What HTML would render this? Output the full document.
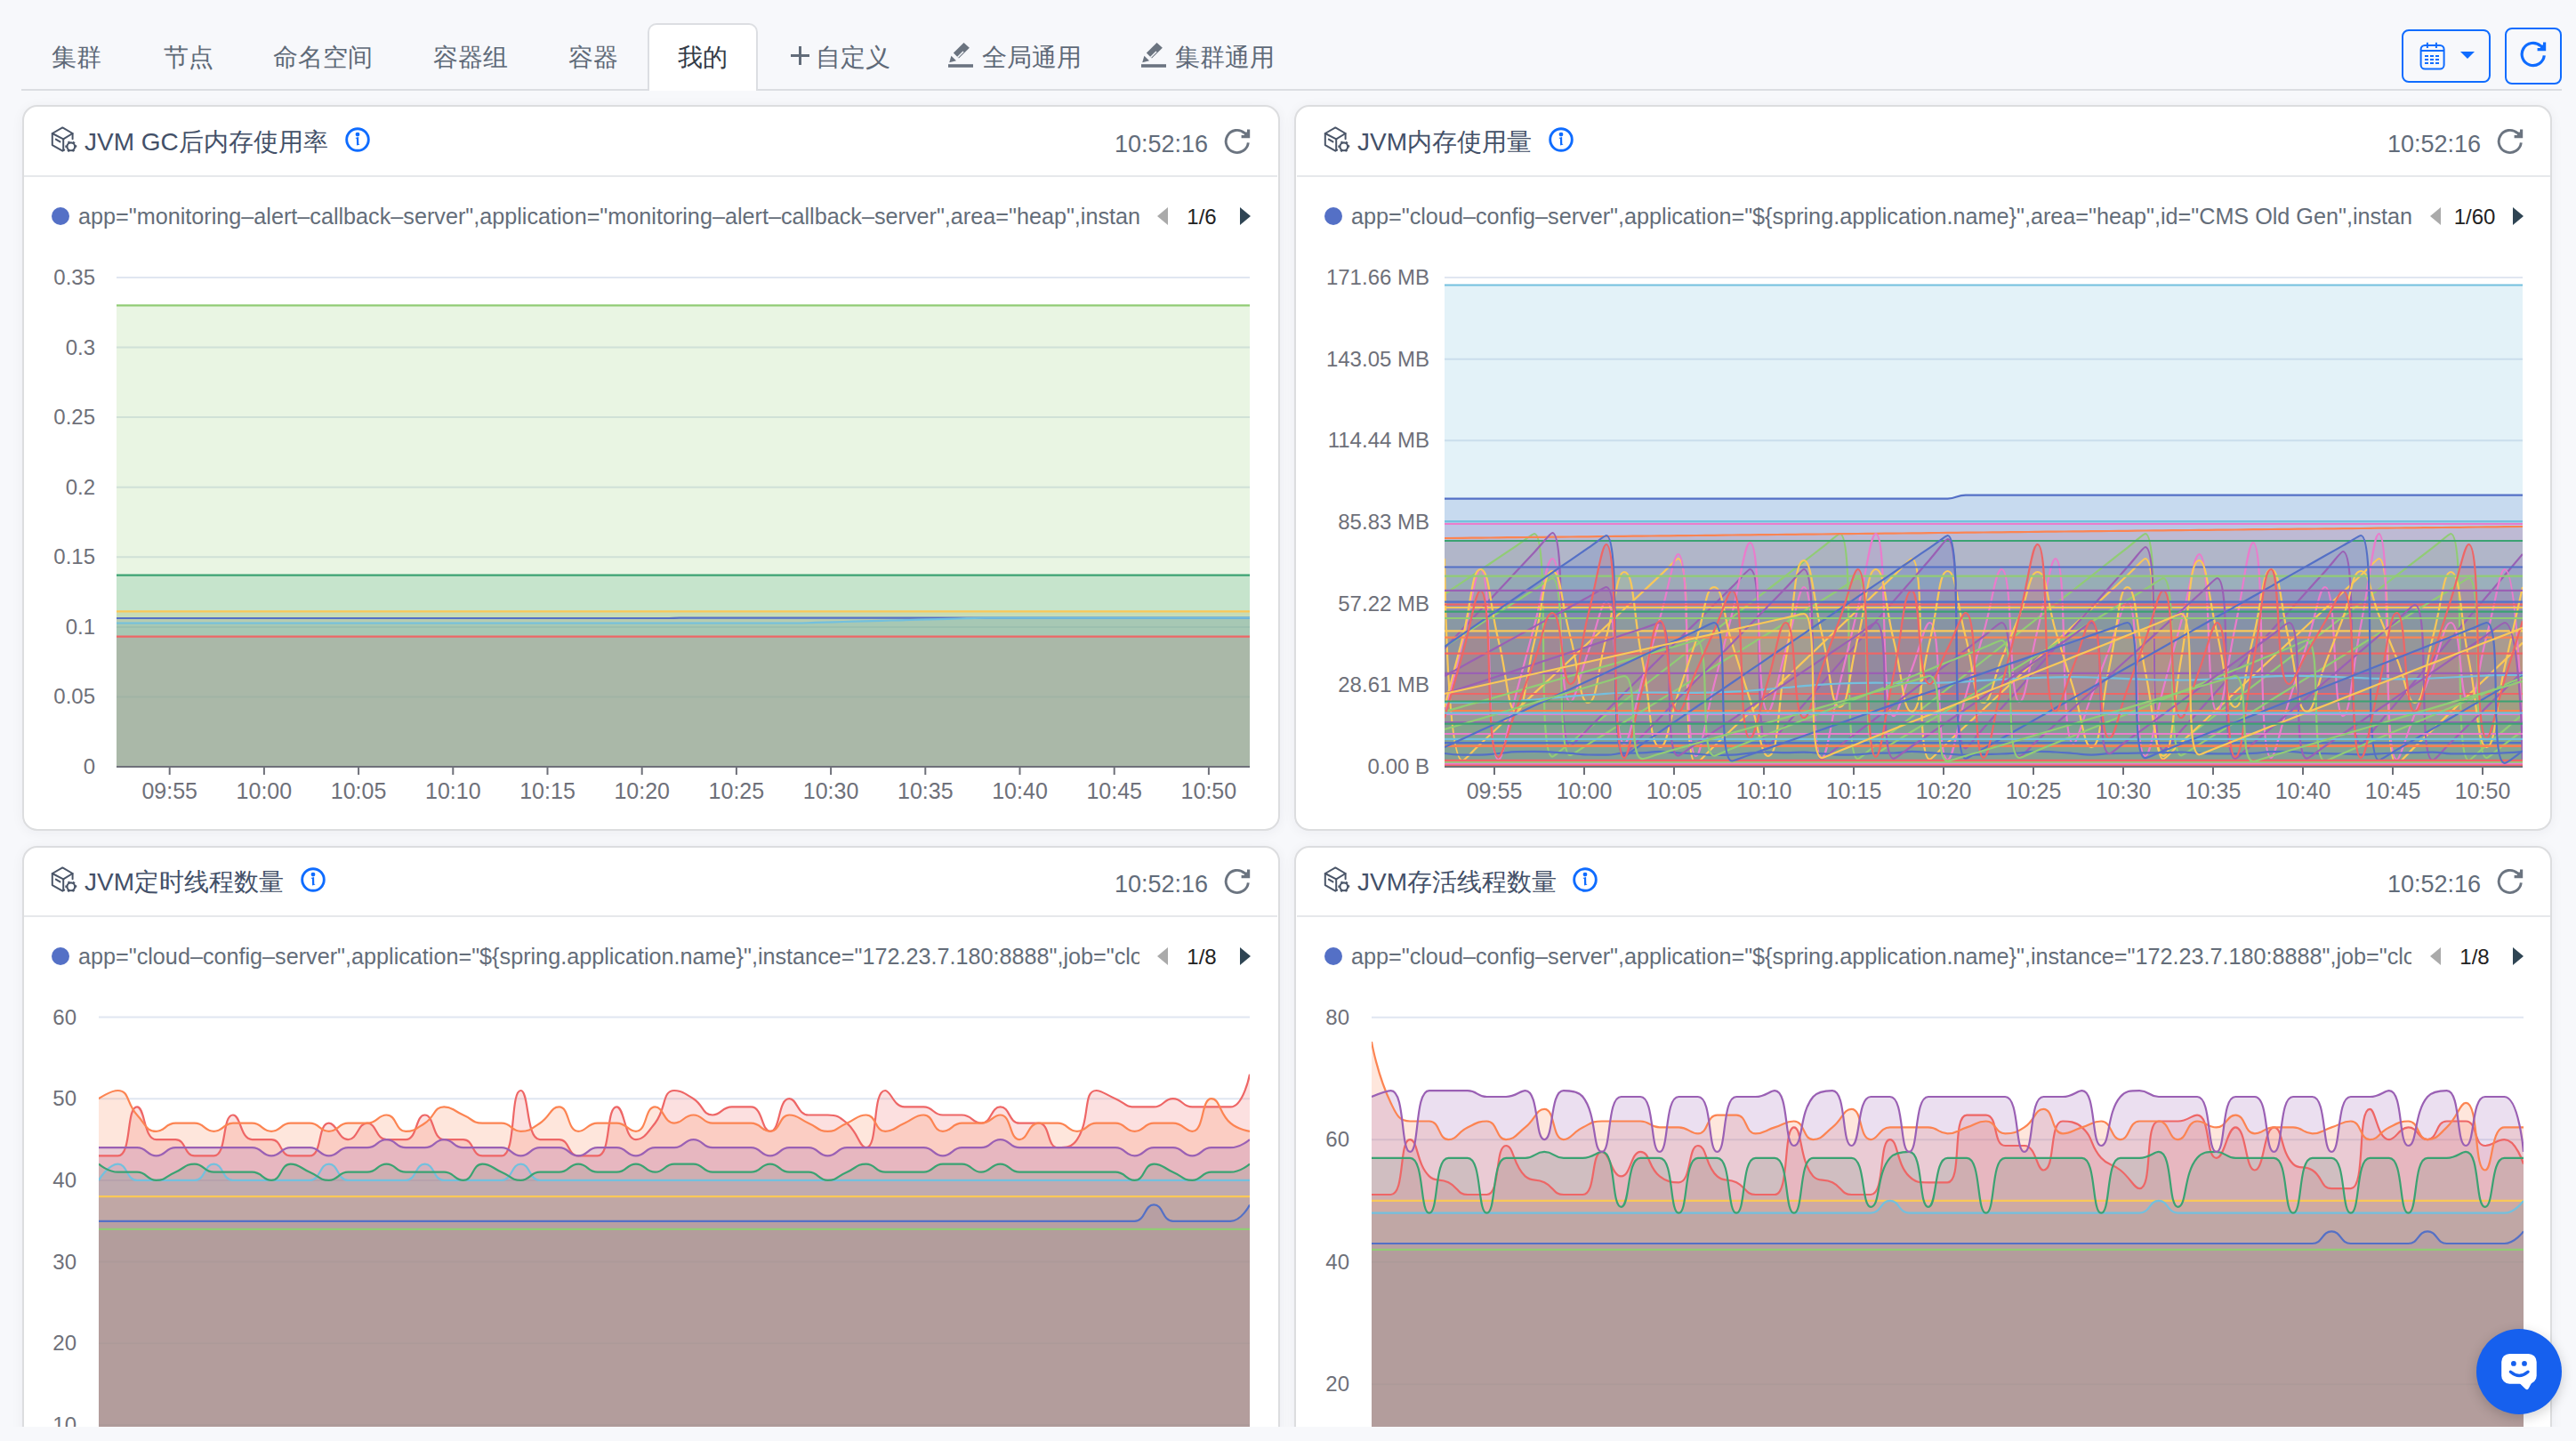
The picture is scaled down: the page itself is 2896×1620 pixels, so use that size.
<!DOCTYPE html><html><head><meta charset="utf-8"><style>
*{margin:0;padding:0;box-sizing:border-box}
html,body{width:2896px;height:1620px;overflow:hidden;background:#f7f8fb;font-family:"Liberation Sans", sans-serif}
.abs,.card,.hline,.ic,.title,.time,.dot,.leg,.page,.yl,.xl,.tab,.btn{position:absolute}
.tab{top:41px;font-size:28px;color:#5f6a78;white-space:nowrap;line-height:48px}
.card{background:#fff;border:2px solid #dcdddf;border-radius:17px;box-shadow:0 2px 14px rgba(30,40,60,0.05)}
.hline{height:2px;background:#e6e8eb}
.title{font-size:28px;color:#435068;white-space:nowrap;line-height:40px}
.time{font-size:27px;color:#626c7a;line-height:40px;white-space:nowrap}
.dot{width:20px;height:20px;border-radius:50%;background:#5470c6}
.leg{font-size:25.2px;color:#646d79;white-space:nowrap;overflow:hidden;line-height:30px}
.page{font-size:24px;color:#222;line-height:30px;width:60px;text-align:center}
.yl{font-size:24px;color:#6e7079;line-height:28px;white-space:nowrap;text-align:right}
.xl{font-size:25px;color:#6e7079;line-height:28px;width:120px;text-align:center}
svg.charts{position:absolute;left:0;top:0}
</style></head><body>

<div class="abs" style="left:24px;top:100px;width:2856px;height:2px;background:#dcdee2"></div>
<div class="abs" style="left:728px;top:26px;width:124px;height:76px;background:#fff;border:2px solid #dcdee2;border-bottom:none;border-radius:10px 10px 0 0"></div>
<div class="tab" style="left:58px">集群</div>
<div class="tab" style="left:184px">节点</div>
<div class="tab" style="left:307px">命名空间</div>
<div class="tab" style="left:487px">容器组</div>
<div class="tab" style="left:639px">容器</div>
<div class="tab" style="left:762px;color:#333b47">我的</div>
<svg class="ic" style="left:887px;top:50px" width="26" height="26"><path d="M12.5 2 V23 M2 12.5 H23" stroke="#626c7a" stroke-width="3"/></svg>
<div class="tab" style="left:917px">自定义</div>
<svg class="ic" style="left:1066px;top:46px" width="32" height="32"><path d="M15.9 13.5 L27.5 2 L33.9 7.75 L21.9 19.5 Z" fill="#6b7480" transform="translate(-10 0)"/><path d="M11 16 L17.5 9.5" stroke="#f5f7fa" stroke-width="1.6" transform="translate(-0.5 2.5)"/><path d="M3.4 16.8 L9 22.3 L1.25 24.3 Z" fill="#6b7480"/><rect x="-4" y="26.2" width="28" height="3.6" fill="#6b7480" transform="translate(4 0)"/></svg>
<div class="tab" style="left:1104px">全局通用</div>
<svg class="ic" style="left:1283px;top:46px" width="32" height="32"><path d="M15.9 13.5 L27.5 2 L33.9 7.75 L21.9 19.5 Z" fill="#6b7480" transform="translate(-10 0)"/><path d="M11 16 L17.5 9.5" stroke="#f5f7fa" stroke-width="1.6" transform="translate(-0.5 2.5)"/><path d="M3.4 16.8 L9 22.3 L1.25 24.3 Z" fill="#6b7480"/><rect x="-4" y="26.2" width="28" height="3.6" fill="#6b7480" transform="translate(4 0)"/></svg>
<div class="tab" style="left:1321px">集群通用</div>
<div class="abs" style="left:2700px;top:33px;width:100px;height:60px;border:2px solid #0f6cff;border-radius:8px"></div>
<svg class="ic" style="left:2718px;top:46px" width="34" height="34"><rect x="3.6" y="5" width="26" height="26.6" rx="4.5" fill="none" stroke="#0f6cff" stroke-width="2"/><line x1="3.6" y1="11" x2="29.6" y2="11" stroke="#0f6cff" stroke-width="2"/><line x1="10.9" y1="1.8" x2="10.9" y2="8" stroke="#0f6cff" stroke-width="2"/><line x1="20.9" y1="1.8" x2="20.9" y2="8" stroke="#0f6cff" stroke-width="2"/><rect x="8.0" y="16.0" width="4" height="2" fill="#0f6cff"/><rect x="8.0" y="20.0" width="4" height="2" fill="#0f6cff"/><rect x="8.0" y="24.0" width="4" height="2" fill="#0f6cff"/><rect x="14.0" y="16.0" width="4" height="2" fill="#0f6cff"/><rect x="14.0" y="20.0" width="4" height="2" fill="#0f6cff"/><rect x="14.0" y="24.0" width="4" height="2" fill="#0f6cff"/><rect x="20.0" y="16.0" width="4" height="2" fill="#0f6cff"/><rect x="20.0" y="20.0" width="4" height="2" fill="#0f6cff"/><rect x="20.0" y="24.0" width="4" height="2" fill="#0f6cff"/></svg>
<svg class="ic" style="left:2765px;top:57px" width="18" height="10"><path d="M1 1 H17 L9 9 Z" fill="#0f6cff"/></svg>
<div class="abs" style="left:2816px;top:31px;width:64px;height:64px;border:2px solid #0f6cff;border-radius:8px"></div>
<div class="ic" style="left:2833px;top:46px"><svg width="30" height="30" viewBox="0 0 30 30"><path d="M27.3 16.4 A 12.6 12.6 0 1 1 23.2 5.6" fill="none" stroke="#0f6cff" stroke-width="3.2"/><path d="M19.6 9.6 H27.6 V1.6" fill="none" stroke="#0f6cff" stroke-width="3.2"/><path d="M21.5 4.5 L27.6 4.5 L27.6 9.6 L23.8 9.6 Z" fill="#0f6cff"/></svg></div>
<div class="abs" style="left:0;top:0;width:2896px;height:1604px;overflow:hidden">
<div class="card" style="left:25px;top:118px;width:1414px;height:816px"></div>
<div class="card" style="left:1455px;top:118px;width:1414px;height:816px"></div>
<div class="card" style="left:25px;top:951px;width:1414px;height:816px"></div>
<div class="card" style="left:1455px;top:951px;width:1414px;height:816px"></div>
<div class="hline" style="left:27px;top:197px;width:1409px"></div>
<div class="ic" style="left:57px;top:142px"><svg class="cube" width="30" height="30" viewBox="0 0 30 30"><g fill="none" stroke="#4a5568" stroke-width="2" stroke-linejoin="round" stroke-linecap="round"><path d="M24.6 14.2 V8 L13.3 1.4 L1.8 8 V21.1 L13.3 27.7 L15.2 26.6"/><path d="M1.8 8 L14.2 14.3 L24.6 8"/><path d="M14.2 14.3 V26.5"/><path d="M5.8 14.6 L10.5 17.4"/></g><circle cx="22.8" cy="22.8" r="4.4" fill="none" stroke="#4a5568" stroke-width="2.1"/><circle cx="22.8" cy="22.8" r="5.7" fill="none" stroke="#4a5568" stroke-width="1.6" stroke-dasharray="2.4 3.57" transform="rotate(-15 22.8 22.8)"/></svg></div>
<div class="title" style="left:95px;top:140px">JVM GC后内存使用率</div>
<div class="ic" style="left:387px;top:142px"><svg width="30" height="30" viewBox="0 0 30 30"><circle cx="15" cy="15" r="12.3" fill="none" stroke="#0f6cff" stroke-width="2.9"/><circle cx="15" cy="9.1" r="2.4" fill="#0f6cff"/><path d="M12.4 12.9 L16.1 12.1 L16.3 19.7 L17.6 20.6 L14.1 21.6 L13.9 13.9 Z" fill="#0f6cff"/></svg></div>
<div class="time" style="right:1538px;top:142px">10:52:16</div>
<div class="ic" style="left:1376px;top:144px"><svg width="30" height="30" viewBox="0 0 30 30"><path d="M27.3 16.4 A 12.6 12.6 0 1 1 23.2 5.6" fill="none" stroke="#6b7480" stroke-width="2.9"/><path d="M19.6 9.6 H27.6 V1.6" fill="none" stroke="#6b7480" stroke-width="3.2"/><path d="M21.5 4.5 L27.6 4.5 L27.6 9.6 L23.8 9.6 Z" fill="#6b7480"/></svg></div>
<div class="hline" style="left:1458px;top:197px;width:1409px"></div>
<div class="ic" style="left:1488px;top:142px"><svg class="cube" width="30" height="30" viewBox="0 0 30 30"><g fill="none" stroke="#4a5568" stroke-width="2" stroke-linejoin="round" stroke-linecap="round"><path d="M24.6 14.2 V8 L13.3 1.4 L1.8 8 V21.1 L13.3 27.7 L15.2 26.6"/><path d="M1.8 8 L14.2 14.3 L24.6 8"/><path d="M14.2 14.3 V26.5"/><path d="M5.8 14.6 L10.5 17.4"/></g><circle cx="22.8" cy="22.8" r="4.4" fill="none" stroke="#4a5568" stroke-width="2.1"/><circle cx="22.8" cy="22.8" r="5.7" fill="none" stroke="#4a5568" stroke-width="1.6" stroke-dasharray="2.4 3.57" transform="rotate(-15 22.8 22.8)"/></svg></div>
<div class="title" style="left:1526px;top:140px">JVM内存使用量</div>
<div class="ic" style="left:1740px;top:142px"><svg width="30" height="30" viewBox="0 0 30 30"><circle cx="15" cy="15" r="12.3" fill="none" stroke="#0f6cff" stroke-width="2.9"/><circle cx="15" cy="9.1" r="2.4" fill="#0f6cff"/><path d="M12.4 12.9 L16.1 12.1 L16.3 19.7 L17.6 20.6 L14.1 21.6 L13.9 13.9 Z" fill="#0f6cff"/></svg></div>
<div class="time" style="right:107px;top:142px">10:52:16</div>
<div class="ic" style="left:2807px;top:144px"><svg width="30" height="30" viewBox="0 0 30 30"><path d="M27.3 16.4 A 12.6 12.6 0 1 1 23.2 5.6" fill="none" stroke="#6b7480" stroke-width="2.9"/><path d="M19.6 9.6 H27.6 V1.6" fill="none" stroke="#6b7480" stroke-width="3.2"/><path d="M21.5 4.5 L27.6 4.5 L27.6 9.6 L23.8 9.6 Z" fill="#6b7480"/></svg></div>
<div class="hline" style="left:27px;top:1029px;width:1409px"></div>
<div class="ic" style="left:57px;top:974px"><svg class="cube" width="30" height="30" viewBox="0 0 30 30"><g fill="none" stroke="#4a5568" stroke-width="2" stroke-linejoin="round" stroke-linecap="round"><path d="M24.6 14.2 V8 L13.3 1.4 L1.8 8 V21.1 L13.3 27.7 L15.2 26.6"/><path d="M1.8 8 L14.2 14.3 L24.6 8"/><path d="M14.2 14.3 V26.5"/><path d="M5.8 14.6 L10.5 17.4"/></g><circle cx="22.8" cy="22.8" r="4.4" fill="none" stroke="#4a5568" stroke-width="2.1"/><circle cx="22.8" cy="22.8" r="5.7" fill="none" stroke="#4a5568" stroke-width="1.6" stroke-dasharray="2.4 3.57" transform="rotate(-15 22.8 22.8)"/></svg></div>
<div class="title" style="left:95px;top:972px">JVM定时线程数量</div>
<div class="ic" style="left:337px;top:974px"><svg width="30" height="30" viewBox="0 0 30 30"><circle cx="15" cy="15" r="12.3" fill="none" stroke="#0f6cff" stroke-width="2.9"/><circle cx="15" cy="9.1" r="2.4" fill="#0f6cff"/><path d="M12.4 12.9 L16.1 12.1 L16.3 19.7 L17.6 20.6 L14.1 21.6 L13.9 13.9 Z" fill="#0f6cff"/></svg></div>
<div class="time" style="right:1538px;top:974px">10:52:16</div>
<div class="ic" style="left:1376px;top:976px"><svg width="30" height="30" viewBox="0 0 30 30"><path d="M27.3 16.4 A 12.6 12.6 0 1 1 23.2 5.6" fill="none" stroke="#6b7480" stroke-width="2.9"/><path d="M19.6 9.6 H27.6 V1.6" fill="none" stroke="#6b7480" stroke-width="3.2"/><path d="M21.5 4.5 L27.6 4.5 L27.6 9.6 L23.8 9.6 Z" fill="#6b7480"/></svg></div>
<div class="hline" style="left:1458px;top:1029px;width:1409px"></div>
<div class="ic" style="left:1488px;top:974px"><svg class="cube" width="30" height="30" viewBox="0 0 30 30"><g fill="none" stroke="#4a5568" stroke-width="2" stroke-linejoin="round" stroke-linecap="round"><path d="M24.6 14.2 V8 L13.3 1.4 L1.8 8 V21.1 L13.3 27.7 L15.2 26.6"/><path d="M1.8 8 L14.2 14.3 L24.6 8"/><path d="M14.2 14.3 V26.5"/><path d="M5.8 14.6 L10.5 17.4"/></g><circle cx="22.8" cy="22.8" r="4.4" fill="none" stroke="#4a5568" stroke-width="2.1"/><circle cx="22.8" cy="22.8" r="5.7" fill="none" stroke="#4a5568" stroke-width="1.6" stroke-dasharray="2.4 3.57" transform="rotate(-15 22.8 22.8)"/></svg></div>
<div class="title" style="left:1526px;top:972px">JVM存活线程数量</div>
<div class="ic" style="left:1767px;top:974px"><svg width="30" height="30" viewBox="0 0 30 30"><circle cx="15" cy="15" r="12.3" fill="none" stroke="#0f6cff" stroke-width="2.9"/><circle cx="15" cy="9.1" r="2.4" fill="#0f6cff"/><path d="M12.4 12.9 L16.1 12.1 L16.3 19.7 L17.6 20.6 L14.1 21.6 L13.9 13.9 Z" fill="#0f6cff"/></svg></div>
<div class="time" style="right:107px;top:974px">10:52:16</div>
<div class="ic" style="left:2807px;top:976px"><svg width="30" height="30" viewBox="0 0 30 30"><path d="M27.3 16.4 A 12.6 12.6 0 1 1 23.2 5.6" fill="none" stroke="#6b7480" stroke-width="2.9"/><path d="M19.6 9.6 H27.6 V1.6" fill="none" stroke="#6b7480" stroke-width="3.2"/><path d="M21.5 4.5 L27.6 4.5 L27.6 9.6 L23.8 9.6 Z" fill="#6b7480"/></svg></div>
<div class="dot" style="left:58px;top:233px"></div>
<div class="leg" style="left:88px;top:228px;width:1193px">app="monitoring–alert–callback–server",application="monitoring–alert–callback–server",area="heap",instance="172.23.7.180:8888"</div>
<svg class="ic" style="left:1300px;top:232px" width="14" height="22"><path d="M13 1 V21 L1 11 Z" fill="#aaaaaa"/></svg>
<div class="page" style="left:1321px;top:229px">1/6</div>
<svg class="ic" style="left:1393px;top:232px" width="14" height="22"><path d="M1 1 V21 L13 11 Z" fill="#2f4554"/></svg>
<div class="dot" style="left:1489px;top:233px"></div>
<div class="leg" style="left:1519px;top:228px;width:1192px">app="cloud–config–server",application="${spring.application.name}",area="heap",id="CMS Old Gen",instance="172.23.7.180:8888"</div>
<svg class="ic" style="left:2731px;top:232px" width="14" height="22"><path d="M13 1 V21 L1 11 Z" fill="#aaaaaa"/></svg>
<div class="page" style="left:2752px;top:229px">1/60</div>
<svg class="ic" style="left:2824px;top:232px" width="14" height="22"><path d="M1 1 V21 L13 11 Z" fill="#2f4554"/></svg>
<div class="dot" style="left:58px;top:1065px"></div>
<div class="leg" style="left:88px;top:1060px;width:1193px">app="cloud–config–server",application="${spring.application.name}",instance="172.23.7.180:8888",job="cloud–config–server"</div>
<svg class="ic" style="left:1300px;top:1064px" width="14" height="22"><path d="M13 1 V21 L1 11 Z" fill="#aaaaaa"/></svg>
<div class="page" style="left:1321px;top:1061px">1/8</div>
<svg class="ic" style="left:1393px;top:1064px" width="14" height="22"><path d="M1 1 V21 L13 11 Z" fill="#2f4554"/></svg>
<div class="dot" style="left:1489px;top:1065px"></div>
<div class="leg" style="left:1519px;top:1060px;width:1192px">app="cloud–config–server",application="${spring.application.name}",instance="172.23.7.180:8888",job="cloud–config–server"</div>
<svg class="ic" style="left:2731px;top:1064px" width="14" height="22"><path d="M13 1 V21 L1 11 Z" fill="#aaaaaa"/></svg>
<div class="page" style="left:2752px;top:1061px">1/8</div>
<svg class="ic" style="left:2824px;top:1064px" width="14" height="22"><path d="M1 1 V21 L13 11 Z" fill="#2f4554"/></svg>
<svg class="charts" width="2896" height="1604">
<defs><clipPath id="cp1"><rect x="131" y="300" width="1274" height="562"/></clipPath><clipPath id="cp2"><rect x="1624" y="300" width="1212" height="562"/></clipPath><clipPath id="cp3"><rect x="111" y="1100" width="1294" height="594"/></clipPath><clipPath id="cp4"><rect x="1542" y="1100" width="1295" height="594"/></clipPath></defs>
<line x1="131" y1="783.4" x2="1405" y2="783.4" stroke="#e0e6f1" stroke-width="2"/>
<line x1="131" y1="704.9" x2="1405" y2="704.9" stroke="#e0e6f1" stroke-width="2"/>
<line x1="131" y1="626.3" x2="1405" y2="626.3" stroke="#e0e6f1" stroke-width="2"/>
<line x1="131" y1="547.7" x2="1405" y2="547.7" stroke="#e0e6f1" stroke-width="2"/>
<line x1="131" y1="469.1" x2="1405" y2="469.1" stroke="#e0e6f1" stroke-width="2"/>
<line x1="131" y1="390.6" x2="1405" y2="390.6" stroke="#e0e6f1" stroke-width="2"/>
<line x1="131" y1="312.0" x2="1405" y2="312.0" stroke="#e0e6f1" stroke-width="2"/>
<g clip-path="url(#cp1)"><path d="M131.0 695.0 C131.0 695.0 141.6 695.0 152.2 695.0 C162.9 695.0 162.9 695.0 173.5 695.0 C184.1 695.0 184.1 695.0 194.7 695.0 C205.3 695.0 205.3 695.0 215.9 695.0 C226.6 695.0 226.6 695.0 237.2 695.0 C247.8 695.0 247.8 695.0 258.4 695.0 C269.0 695.0 269.0 695.0 279.6 695.0 C290.2 695.0 290.2 695.0 300.9 695.0 C311.5 695.0 311.5 695.0 322.1 695.0 C332.7 695.0 332.7 695.0 343.3 695.0 C354.0 695.0 354.0 695.0 364.6 695.0 C375.2 695.0 375.2 695.0 385.8 695.0 C396.4 695.0 396.4 695.0 407.0 695.0 C417.6 695.0 417.6 695.0 428.3 695.0 C438.9 695.0 438.9 695.0 449.5 695.0 C460.1 695.0 460.1 695.0 470.7 695.0 C481.4 695.0 481.3 695.0 492.0 695.0 C502.6 695.0 502.6 695.0 513.2 695.0 C523.8 695.0 523.8 695.0 534.4 695.0 C545.1 695.0 545.1 695.0 555.7 695.0 C566.3 695.0 566.3 695.0 576.9 695.0 C587.5 695.0 587.5 695.0 598.1 695.0 C608.8 695.0 608.8 695.0 619.4 695.0 C630.0 695.0 630.0 695.0 640.6 695.0 C651.2 695.0 651.2 695.0 661.8 695.0 C672.5 695.0 672.5 695.0 683.1 695.0 C693.7 695.0 693.7 695.0 704.3 695.0 C714.9 695.0 714.9 695.0 725.5 695.0 C736.1 695.0 736.2 695.0 746.8 695.0 C757.4 695.0 757.4 694.6 768.0 694.6 C778.6 694.6 778.6 694.6 789.2 694.6 C799.9 694.6 799.9 694.6 810.5 694.6 C821.1 694.6 821.1 694.6 831.7 694.6 C842.3 694.6 842.3 694.6 852.9 694.6 C863.5 694.6 863.5 694.6 874.2 694.6 C884.8 694.6 884.8 694.6 895.4 694.6 C906.0 694.6 906.0 694.6 916.6 694.6 C927.2 694.6 927.2 694.6 937.9 694.6 C948.5 694.6 948.5 694.6 959.1 694.6 C969.7 694.6 969.7 694.6 980.3 694.6 C991.0 694.6 991.0 694.6 1001.6 694.6 C1012.2 694.6 1012.2 694.6 1022.8 694.6 C1033.4 694.6 1033.4 694.6 1044.0 694.6 C1054.7 694.6 1054.7 694.6 1065.3 694.6 C1075.9 694.6 1075.9 694.6 1086.5 694.6 C1097.1 694.6 1097.1 694.6 1107.7 694.6 C1118.3 694.6 1118.3 694.6 1129.0 694.6 C1139.6 694.6 1139.6 694.6 1150.2 694.6 C1160.8 694.6 1160.8 694.6 1171.4 694.6 C1182.1 694.6 1182.1 694.6 1192.7 694.6 C1203.3 694.6 1203.3 694.6 1213.9 694.6 C1224.5 694.6 1224.5 694.6 1235.1 694.6 C1245.8 694.6 1245.8 694.6 1256.4 694.6 C1267.0 694.6 1267.0 694.6 1277.6 694.6 C1288.2 694.6 1288.2 694.6 1298.8 694.6 C1309.4 694.6 1309.4 694.6 1320.1 694.6 C1330.7 694.6 1330.7 694.6 1341.3 694.6 C1351.9 694.6 1351.9 694.6 1362.5 694.6 C1373.2 694.6 1373.2 694.6 1383.8 694.6 C1394.4 694.6 1405.0 694.6 1405.0 694.6 L1405.00 862.00 L131.00 862.00 Z" fill="#5470c6" fill-opacity="0.20" stroke="none"/>
<rect x="131" y="343.4" width="1274" height="518.6" fill="#91cc75" fill-opacity="0.20"/>
<rect x="131" y="687.4" width="1274" height="174.6" fill="#fac858" fill-opacity="0.20"/>
<rect x="131" y="715.7" width="1274" height="146.3" fill="#ee6666" fill-opacity="0.20"/>
<path d="M131.0 700.5 C131.0 700.5 141.6 700.5 152.2 700.5 C162.9 700.5 162.9 700.5 173.5 700.5 C184.1 700.5 184.1 700.5 194.7 700.5 C205.3 700.5 205.3 700.5 215.9 700.5 C226.6 700.5 226.6 700.5 237.2 700.5 C247.8 700.5 247.8 700.5 258.4 700.5 C269.0 700.5 269.0 700.5 279.6 700.5 C290.2 700.5 290.2 700.5 300.9 700.5 C311.5 700.5 311.5 700.5 322.1 700.5 C332.7 700.5 332.7 700.5 343.3 700.5 C354.0 700.5 354.0 700.5 364.6 700.5 C375.2 700.5 375.2 700.5 385.8 700.5 C396.4 700.5 396.4 700.5 407.0 700.5 C417.6 700.5 417.6 700.5 428.3 700.5 C438.9 700.5 438.9 700.5 449.5 700.5 C460.1 700.5 460.1 700.5 470.7 700.5 C481.4 700.5 481.3 700.5 492.0 700.5 C502.6 700.5 502.6 700.5 513.2 700.5 C523.8 700.5 523.8 700.5 534.4 700.5 C545.1 700.5 545.1 700.5 555.7 700.5 C566.3 700.5 566.3 700.5 576.9 700.5 C587.5 700.5 587.5 700.5 598.1 700.5 C608.8 700.5 608.8 700.5 619.4 700.5 C630.0 700.5 630.0 700.5 640.6 700.5 C651.2 700.5 651.2 700.5 661.8 700.5 C672.5 700.5 672.5 700.5 683.1 700.5 C693.7 700.5 693.7 700.5 704.3 700.5 C714.9 700.5 714.9 700.5 725.5 700.5 C736.1 700.5 736.1 700.5 746.8 700.5 C757.4 700.5 757.4 700.5 768.0 700.5 C778.6 700.5 778.6 700.5 789.2 700.5 C799.9 700.5 799.9 700.5 810.5 700.5 C821.1 700.5 821.1 700.5 831.7 700.5 C842.3 700.5 842.3 700.5 852.9 700.5 C863.5 700.5 863.5 700.5 874.2 700.5 C884.8 700.5 884.8 700.5 895.4 700.5 C906.0 700.5 906.0 700.2 916.6 699.9 C927.2 699.6 927.2 699.6 937.9 699.3 C948.5 699.0 948.5 699.0 959.1 698.7 C969.7 698.4 969.7 698.4 980.3 698.1 C991.0 697.8 991.0 697.8 1001.6 697.5 C1012.2 697.3 1012.2 697.3 1022.8 697.0 C1033.4 696.7 1033.4 696.7 1044.0 696.4 C1054.7 696.1 1054.7 696.1 1065.3 695.8 C1075.9 695.5 1075.9 695.5 1086.5 695.2 C1097.1 694.9 1097.1 694.6 1107.7 694.6 C1118.3 694.6 1118.3 694.6 1129.0 694.6 C1139.6 694.6 1139.6 694.6 1150.2 694.6 C1160.8 694.6 1160.8 694.6 1171.4 694.6 C1182.1 694.6 1182.1 694.6 1192.7 694.6 C1203.3 694.6 1203.3 694.6 1213.9 694.6 C1224.5 694.6 1224.5 694.6 1235.1 694.6 C1245.8 694.6 1245.8 694.6 1256.4 694.6 C1267.0 694.6 1267.0 694.6 1277.6 694.6 C1288.2 694.6 1288.2 694.6 1298.8 694.6 C1309.4 694.6 1309.4 694.6 1320.1 694.6 C1330.7 694.6 1330.7 694.6 1341.3 694.6 C1351.9 694.6 1351.9 694.6 1362.5 694.6 C1373.2 694.6 1373.2 694.6 1383.8 694.6 C1394.4 694.6 1405.0 694.6 1405.0 694.6 L1405.00 862.00 L131.00 862.00 Z" fill="#73c0de" fill-opacity="0.20" stroke="none"/>
<rect x="131" y="646.6" width="1274" height="215.4" fill="#3ba272" fill-opacity="0.20"/>
<path d="M131.0 695.0 C131.0 695.0 141.6 695.0 152.2 695.0 C162.9 695.0 162.9 695.0 173.5 695.0 C184.1 695.0 184.1 695.0 194.7 695.0 C205.3 695.0 205.3 695.0 215.9 695.0 C226.6 695.0 226.6 695.0 237.2 695.0 C247.8 695.0 247.8 695.0 258.4 695.0 C269.0 695.0 269.0 695.0 279.6 695.0 C290.2 695.0 290.2 695.0 300.9 695.0 C311.5 695.0 311.5 695.0 322.1 695.0 C332.7 695.0 332.7 695.0 343.3 695.0 C354.0 695.0 354.0 695.0 364.6 695.0 C375.2 695.0 375.2 695.0 385.8 695.0 C396.4 695.0 396.4 695.0 407.0 695.0 C417.6 695.0 417.6 695.0 428.3 695.0 C438.9 695.0 438.9 695.0 449.5 695.0 C460.1 695.0 460.1 695.0 470.7 695.0 C481.4 695.0 481.3 695.0 492.0 695.0 C502.6 695.0 502.6 695.0 513.2 695.0 C523.8 695.0 523.8 695.0 534.4 695.0 C545.1 695.0 545.1 695.0 555.7 695.0 C566.3 695.0 566.3 695.0 576.9 695.0 C587.5 695.0 587.5 695.0 598.1 695.0 C608.8 695.0 608.8 695.0 619.4 695.0 C630.0 695.0 630.0 695.0 640.6 695.0 C651.2 695.0 651.2 695.0 661.8 695.0 C672.5 695.0 672.5 695.0 683.1 695.0 C693.7 695.0 693.7 695.0 704.3 695.0 C714.9 695.0 714.9 695.0 725.5 695.0 C736.1 695.0 736.2 695.0 746.8 695.0 C757.4 695.0 757.4 694.6 768.0 694.6 C778.6 694.6 778.6 694.6 789.2 694.6 C799.9 694.6 799.9 694.6 810.5 694.6 C821.1 694.6 821.1 694.6 831.7 694.6 C842.3 694.6 842.3 694.6 852.9 694.6 C863.5 694.6 863.5 694.6 874.2 694.6 C884.8 694.6 884.8 694.6 895.4 694.6 C906.0 694.6 906.0 694.6 916.6 694.6 C927.2 694.6 927.2 694.6 937.9 694.6 C948.5 694.6 948.5 694.6 959.1 694.6 C969.7 694.6 969.7 694.6 980.3 694.6 C991.0 694.6 991.0 694.6 1001.6 694.6 C1012.2 694.6 1012.2 694.6 1022.8 694.6 C1033.4 694.6 1033.4 694.6 1044.0 694.6 C1054.7 694.6 1054.7 694.6 1065.3 694.6 C1075.9 694.6 1075.9 694.6 1086.5 694.6 C1097.1 694.6 1097.1 694.6 1107.7 694.6 C1118.3 694.6 1118.3 694.6 1129.0 694.6 C1139.6 694.6 1139.6 694.6 1150.2 694.6 C1160.8 694.6 1160.8 694.6 1171.4 694.6 C1182.1 694.6 1182.1 694.6 1192.7 694.6 C1203.3 694.6 1203.3 694.6 1213.9 694.6 C1224.5 694.6 1224.5 694.6 1235.1 694.6 C1245.8 694.6 1245.8 694.6 1256.4 694.6 C1267.0 694.6 1267.0 694.6 1277.6 694.6 C1288.2 694.6 1288.2 694.6 1298.8 694.6 C1309.4 694.6 1309.4 694.6 1320.1 694.6 C1330.7 694.6 1330.7 694.6 1341.3 694.6 C1351.9 694.6 1351.9 694.6 1362.5 694.6 C1373.2 694.6 1373.2 694.6 1383.8 694.6 C1394.4 694.6 1405.0 694.6 1405.0 694.6" fill="none" stroke="#5470c6" stroke-width="2.2" stroke-linejoin="round"/>
<path d="M131 343.4H1405" stroke="#91cc75" stroke-width="2.2"/>
<path d="M131 687.4H1405" stroke="#fac858" stroke-width="2.2"/>
<path d="M131 715.7H1405" stroke="#ee6666" stroke-width="2.2"/>
<path d="M131.0 700.5 C131.0 700.5 141.6 700.5 152.2 700.5 C162.9 700.5 162.9 700.5 173.5 700.5 C184.1 700.5 184.1 700.5 194.7 700.5 C205.3 700.5 205.3 700.5 215.9 700.5 C226.6 700.5 226.6 700.5 237.2 700.5 C247.8 700.5 247.8 700.5 258.4 700.5 C269.0 700.5 269.0 700.5 279.6 700.5 C290.2 700.5 290.2 700.5 300.9 700.5 C311.5 700.5 311.5 700.5 322.1 700.5 C332.7 700.5 332.7 700.5 343.3 700.5 C354.0 700.5 354.0 700.5 364.6 700.5 C375.2 700.5 375.2 700.5 385.8 700.5 C396.4 700.5 396.4 700.5 407.0 700.5 C417.6 700.5 417.6 700.5 428.3 700.5 C438.9 700.5 438.9 700.5 449.5 700.5 C460.1 700.5 460.1 700.5 470.7 700.5 C481.4 700.5 481.3 700.5 492.0 700.5 C502.6 700.5 502.6 700.5 513.2 700.5 C523.8 700.5 523.8 700.5 534.4 700.5 C545.1 700.5 545.1 700.5 555.7 700.5 C566.3 700.5 566.3 700.5 576.9 700.5 C587.5 700.5 587.5 700.5 598.1 700.5 C608.8 700.5 608.8 700.5 619.4 700.5 C630.0 700.5 630.0 700.5 640.6 700.5 C651.2 700.5 651.2 700.5 661.8 700.5 C672.5 700.5 672.5 700.5 683.1 700.5 C693.7 700.5 693.7 700.5 704.3 700.5 C714.9 700.5 714.9 700.5 725.5 700.5 C736.1 700.5 736.1 700.5 746.8 700.5 C757.4 700.5 757.4 700.5 768.0 700.5 C778.6 700.5 778.6 700.5 789.2 700.5 C799.9 700.5 799.9 700.5 810.5 700.5 C821.1 700.5 821.1 700.5 831.7 700.5 C842.3 700.5 842.3 700.5 852.9 700.5 C863.5 700.5 863.5 700.5 874.2 700.5 C884.8 700.5 884.8 700.5 895.4 700.5 C906.0 700.5 906.0 700.2 916.6 699.9 C927.2 699.6 927.2 699.6 937.9 699.3 C948.5 699.0 948.5 699.0 959.1 698.7 C969.7 698.4 969.7 698.4 980.3 698.1 C991.0 697.8 991.0 697.8 1001.6 697.5 C1012.2 697.3 1012.2 697.3 1022.8 697.0 C1033.4 696.7 1033.4 696.7 1044.0 696.4 C1054.7 696.1 1054.7 696.1 1065.3 695.8 C1075.9 695.5 1075.9 695.5 1086.5 695.2 C1097.1 694.9 1097.1 694.6 1107.7 694.6 C1118.3 694.6 1118.3 694.6 1129.0 694.6 C1139.6 694.6 1139.6 694.6 1150.2 694.6 C1160.8 694.6 1160.8 694.6 1171.4 694.6 C1182.1 694.6 1182.1 694.6 1192.7 694.6 C1203.3 694.6 1203.3 694.6 1213.9 694.6 C1224.5 694.6 1224.5 694.6 1235.1 694.6 C1245.8 694.6 1245.8 694.6 1256.4 694.6 C1267.0 694.6 1267.0 694.6 1277.6 694.6 C1288.2 694.6 1288.2 694.6 1298.8 694.6 C1309.4 694.6 1309.4 694.6 1320.1 694.6 C1330.7 694.6 1330.7 694.6 1341.3 694.6 C1351.9 694.6 1351.9 694.6 1362.5 694.6 C1373.2 694.6 1373.2 694.6 1383.8 694.6 C1394.4 694.6 1405.0 694.6 1405.0 694.6" fill="none" stroke="#73c0de" stroke-width="2.2" stroke-linejoin="round"/>
<path d="M131 646.6H1405" stroke="#3ba272" stroke-width="2.2"/></g>
<line x1="131" y1="862.0" x2="1405" y2="862.0" stroke="#6e7079" stroke-width="2"/>
<line x1="190.7" y1="862.0" x2="190.7" y2="871.0" stroke="#6e7079" stroke-width="2"/>
<line x1="296.9" y1="862.0" x2="296.9" y2="871.0" stroke="#6e7079" stroke-width="2"/>
<line x1="403.1" y1="862.0" x2="403.1" y2="871.0" stroke="#6e7079" stroke-width="2"/>
<line x1="509.3" y1="862.0" x2="509.3" y2="871.0" stroke="#6e7079" stroke-width="2"/>
<line x1="615.5" y1="862.0" x2="615.5" y2="871.0" stroke="#6e7079" stroke-width="2"/>
<line x1="721.7" y1="862.0" x2="721.7" y2="871.0" stroke="#6e7079" stroke-width="2"/>
<line x1="827.9" y1="862.0" x2="827.9" y2="871.0" stroke="#6e7079" stroke-width="2"/>
<line x1="934.1" y1="862.0" x2="934.1" y2="871.0" stroke="#6e7079" stroke-width="2"/>
<line x1="1040.3" y1="862.0" x2="1040.3" y2="871.0" stroke="#6e7079" stroke-width="2"/>
<line x1="1146.5" y1="862.0" x2="1146.5" y2="871.0" stroke="#6e7079" stroke-width="2"/>
<line x1="1252.7" y1="862.0" x2="1252.7" y2="871.0" stroke="#6e7079" stroke-width="2"/>
<line x1="1358.9" y1="862.0" x2="1358.9" y2="871.0" stroke="#6e7079" stroke-width="2"/>
<line x1="1624" y1="770.3" x2="2836" y2="770.3" stroke="#e0e6f1" stroke-width="2"/>
<line x1="1624" y1="678.7" x2="2836" y2="678.7" stroke="#e0e6f1" stroke-width="2"/>
<line x1="1624" y1="587.0" x2="2836" y2="587.0" stroke="#e0e6f1" stroke-width="2"/>
<line x1="1624" y1="495.3" x2="2836" y2="495.3" stroke="#e0e6f1" stroke-width="2"/>
<line x1="1624" y1="403.7" x2="2836" y2="403.7" stroke="#e0e6f1" stroke-width="2"/>
<line x1="1624" y1="312.0" x2="2836" y2="312.0" stroke="#e0e6f1" stroke-width="2"/>
<g clip-path="url(#cp2)"><path d="M1624.0 560.6 C1624.0 560.6 1634.1 560.6 1644.2 560.6 C1654.3 560.6 1654.3 560.6 1664.4 560.6 C1674.5 560.6 1674.5 560.6 1684.6 560.6 C1694.7 560.6 1694.7 560.6 1704.8 560.6 C1714.9 560.6 1714.9 560.6 1725.0 560.6 C1735.1 560.6 1735.1 560.6 1745.2 560.6 C1755.3 560.6 1755.3 560.6 1765.4 560.6 C1775.5 560.6 1775.5 560.6 1785.6 560.6 C1795.7 560.6 1795.7 560.6 1805.8 560.6 C1815.9 560.6 1815.9 560.6 1826.0 560.6 C1836.1 560.6 1836.1 560.6 1846.2 560.6 C1856.3 560.6 1856.3 560.6 1866.4 560.6 C1876.5 560.6 1876.5 560.6 1886.6 560.6 C1896.7 560.6 1896.7 560.6 1906.8 560.6 C1916.9 560.6 1916.9 560.6 1927.0 560.6 C1937.1 560.6 1937.1 560.6 1947.2 560.6 C1957.3 560.6 1957.3 560.6 1967.4 560.6 C1977.5 560.6 1977.5 560.6 1987.6 560.6 C1997.7 560.6 1997.7 560.6 2007.8 560.6 C2017.9 560.6 2017.9 560.6 2028.0 560.6 C2038.1 560.6 2038.1 560.6 2048.2 560.6 C2058.3 560.6 2058.3 560.6 2068.4 560.6 C2078.5 560.6 2078.5 560.6 2088.6 560.6 C2098.7 560.6 2098.7 560.6 2108.8 560.6 C2118.9 560.6 2118.9 560.6 2129.0 560.6 C2139.1 560.6 2139.1 560.6 2149.2 560.6 C2159.3 560.6 2159.3 560.6 2169.4 560.6 C2179.5 560.6 2179.6 560.6 2189.6 560.6 C2199.8 560.6 2199.6 556.6 2209.8 556.6 C2219.8 556.6 2219.9 556.6 2230.0 556.6 C2240.1 556.6 2240.1 556.6 2250.2 556.6 C2260.3 556.6 2260.3 556.6 2270.4 556.6 C2280.5 556.6 2280.5 556.6 2290.6 556.6 C2300.7 556.6 2300.7 556.6 2310.8 556.6 C2320.9 556.6 2320.9 556.6 2331.0 556.6 C2341.1 556.6 2341.1 556.6 2351.2 556.6 C2361.3 556.6 2361.3 556.6 2371.4 556.6 C2381.5 556.6 2381.5 556.6 2391.6 556.6 C2401.7 556.6 2401.7 556.6 2411.8 556.6 C2421.9 556.6 2421.9 556.6 2432.0 556.6 C2442.1 556.6 2442.1 556.6 2452.2 556.6 C2462.3 556.6 2462.3 556.6 2472.4 556.6 C2482.5 556.6 2482.5 556.6 2492.6 556.6 C2502.7 556.6 2502.7 556.6 2512.8 556.6 C2522.9 556.6 2522.9 556.6 2533.0 556.6 C2543.1 556.6 2543.1 556.6 2553.2 556.6 C2563.3 556.6 2563.3 556.6 2573.4 556.6 C2583.5 556.6 2583.5 556.6 2593.6 556.6 C2603.7 556.6 2603.7 556.6 2613.8 556.6 C2623.9 556.6 2623.9 556.6 2634.0 556.6 C2644.1 556.6 2644.1 556.6 2654.2 556.6 C2664.3 556.6 2664.3 556.6 2674.4 556.6 C2684.5 556.6 2684.5 556.6 2694.6 556.6 C2704.7 556.6 2704.7 556.6 2714.8 556.6 C2724.9 556.6 2724.9 556.6 2735.0 556.6 C2745.1 556.6 2745.1 556.6 2755.2 556.6 C2765.3 556.6 2765.3 556.6 2775.4 556.6 C2785.5 556.6 2785.5 556.6 2795.6 556.6 C2805.7 556.6 2805.7 556.6 2815.8 556.6 C2825.9 556.6 2836.0 556.6 2836.0 556.6 L2836.00 862.00 L1624.00 862.00 Z" fill="#5470c6" fill-opacity="0.20" stroke="none"/>
<path d="M1624.0 668.0 C1624.0 668.0 1634.1 661.2 1644.2 654.4 C1654.3 647.6 1654.3 647.6 1664.4 640.8 C1674.5 634.0 1674.5 634.0 1684.6 627.2 C1694.7 620.4 1694.7 620.4 1704.8 613.6 C1714.9 606.8 1723.2 600.0 1725.0 600.0 C1743.4 600.0 1726.9 850.7 1745.2 850.7 C1747.1 850.7 1755.3 842.9 1765.4 835.0 C1775.5 827.2 1775.5 827.2 1785.6 819.4 C1795.7 811.5 1795.7 811.5 1805.8 803.7 C1815.9 795.9 1815.9 795.9 1826.0 788.0 C1836.1 780.2 1836.1 780.2 1846.2 772.4 C1856.3 764.5 1856.3 764.5 1866.4 756.7 C1876.5 748.9 1876.5 748.9 1886.6 741.0 C1896.7 733.2 1896.7 733.2 1906.8 725.4 C1916.9 717.5 1916.9 717.5 1927.0 709.7 C1937.1 701.8 1937.1 701.8 1947.2 694.0 C1957.3 686.2 1957.3 686.2 1967.4 678.3 C1977.5 670.5 1977.5 670.5 1987.6 662.7 C1997.7 654.8 1997.7 654.8 2007.8 647.0 C2017.9 639.2 2017.9 639.2 2028.0 631.3 C2038.1 623.5 2038.1 623.5 2048.2 615.7 C2058.3 607.8 2066.6 600.0 2068.4 600.0 C2086.8 600.0 2070.3 853.3 2088.6 853.3 C2090.5 853.3 2098.7 845.4 2108.8 837.5 C2118.9 829.5 2118.9 829.5 2129.0 821.6 C2139.1 813.7 2139.1 813.7 2149.2 805.8 C2159.3 797.9 2159.3 797.9 2169.4 790.0 C2179.5 782.0 2179.5 782.0 2189.6 774.1 C2199.7 766.2 2199.7 766.2 2209.8 758.3 C2219.9 750.4 2219.9 750.4 2230.0 742.5 C2240.1 734.6 2240.1 734.6 2250.2 726.6 C2260.3 718.7 2260.3 718.7 2270.4 710.8 C2280.5 702.9 2280.5 702.9 2290.6 695.0 C2300.7 687.1 2300.7 687.1 2310.8 679.2 C2320.9 671.2 2320.9 671.2 2331.0 663.3 C2341.1 655.4 2341.1 655.4 2351.2 647.5 C2361.3 639.6 2361.3 639.6 2371.4 631.7 C2381.5 623.7 2381.5 623.7 2391.6 615.8 C2401.7 607.9 2409.9 600.0 2411.8 600.0 C2430.1 600.0 2413.7 849.0 2432.0 849.0 C2433.9 849.0 2442.1 841.3 2452.2 833.5 C2462.3 825.7 2462.3 825.7 2472.4 817.9 C2482.5 810.1 2482.5 810.1 2492.6 802.3 C2502.7 794.6 2502.7 794.6 2512.8 786.8 C2522.9 779.0 2522.9 779.0 2533.0 771.2 C2543.1 763.4 2543.1 763.4 2553.2 755.6 C2563.3 747.9 2563.3 747.9 2573.4 740.1 C2583.5 732.3 2583.5 732.3 2593.6 724.5 C2603.7 716.7 2603.7 716.7 2613.8 709.0 C2623.9 701.2 2623.9 701.2 2634.0 693.4 C2644.1 685.6 2644.1 685.6 2654.2 677.8 C2664.3 670.0 2664.3 670.0 2674.4 662.3 C2684.5 654.5 2684.5 654.5 2694.6 646.7 C2704.7 638.9 2704.7 638.9 2714.8 631.1 C2724.9 623.3 2724.9 623.3 2735.0 615.6 C2745.1 607.8 2753.4 600.0 2755.2 600.0 C2773.6 600.0 2757.1 854.9 2775.4 854.9 C2777.3 854.9 2785.5 846.2 2795.6 837.6 C2805.7 829.0 2805.7 829.0 2815.8 820.4 C2825.9 811.7 2836.0 803.1 2836.0 803.1 L2836.00 862.00 L1624.00 862.00 Z" fill="#91cc75" fill-opacity="0.20" stroke="none"/>
<path d="M1624.0 628.0 C1624.0 628.0 1626.2 855.1 1644.2 855.1 C1646.4 855.1 1654.3 845.6 1664.4 836.2 C1674.5 826.7 1674.5 826.7 1684.6 817.3 C1694.7 807.8 1694.7 807.8 1704.8 798.3 C1714.9 788.9 1714.9 788.9 1725.0 779.4 C1735.1 769.9 1735.1 769.9 1745.2 760.5 C1755.3 751.0 1755.3 751.0 1765.4 741.6 C1775.5 732.1 1775.5 732.1 1785.6 722.6 C1795.7 713.2 1795.7 713.2 1805.8 703.7 C1815.9 694.2 1815.9 694.2 1826.0 684.8 C1836.1 675.3 1836.1 675.3 1846.2 665.9 C1856.3 656.4 1856.3 656.4 1866.4 646.9 C1876.5 637.5 1884.4 628.0 1886.6 628.0 C1904.6 628.0 1888.8 858.2 1906.8 858.2 C1909.0 858.2 1916.9 848.6 1927.0 839.0 C1937.1 829.4 1937.1 829.4 1947.2 819.8 C1957.3 810.2 1957.3 810.2 1967.4 800.6 C1977.5 791.0 1977.5 791.0 1987.6 781.4 C1997.7 771.9 1997.7 771.9 2007.8 762.3 C2017.9 752.7 2017.9 752.7 2028.0 743.1 C2038.1 733.5 2038.1 733.5 2048.2 723.9 C2058.3 714.3 2058.3 714.3 2068.4 704.7 C2078.5 695.1 2078.5 695.1 2088.6 685.5 C2098.7 676.0 2098.7 676.0 2108.8 666.4 C2118.9 656.8 2118.9 656.8 2129.0 647.2 C2139.1 637.6 2147.0 628.0 2149.2 628.0 C2167.2 628.0 2151.4 853.7 2169.4 853.7 C2171.6 853.7 2179.5 844.3 2189.6 834.8 C2199.7 825.4 2199.7 825.4 2209.8 816.0 C2219.9 806.6 2219.9 806.6 2230.0 797.2 C2240.1 787.8 2240.1 787.8 2250.2 778.4 C2260.3 769.0 2260.3 769.0 2270.4 759.6 C2280.5 750.2 2280.5 750.2 2290.6 740.8 C2300.7 731.4 2300.7 731.4 2310.8 722.0 C2320.9 712.6 2320.9 712.6 2331.0 703.2 C2341.1 693.8 2341.1 693.8 2351.2 684.4 C2361.3 675.0 2361.3 675.0 2371.4 665.6 C2381.5 656.2 2381.5 656.2 2391.6 646.8 C2401.7 637.4 2409.6 628.0 2411.8 628.0 C2429.8 628.0 2414.0 853.5 2432.0 853.5 C2434.2 853.5 2442.1 844.1 2452.2 834.7 C2462.3 825.3 2462.3 825.3 2472.4 815.9 C2482.5 806.5 2482.5 806.5 2492.6 797.1 C2502.7 787.7 2502.7 787.7 2512.8 778.3 C2522.9 768.9 2522.9 768.9 2533.0 759.5 C2543.1 750.1 2543.1 750.1 2553.2 740.7 C2563.3 731.3 2563.3 731.3 2573.4 721.9 C2583.5 712.5 2583.5 712.5 2593.6 703.2 C2603.7 693.8 2603.7 693.8 2613.8 684.4 C2623.9 675.0 2623.9 675.0 2634.0 665.6 C2644.1 656.2 2644.1 656.2 2654.2 646.8 C2664.3 637.4 2672.3 628.0 2674.4 628.0 C2692.5 628.0 2676.6 859.1 2694.6 859.1 C2696.8 859.1 2704.7 849.4 2714.8 839.6 C2724.9 829.9 2724.9 829.9 2735.0 820.1 C2745.1 810.4 2745.1 810.4 2755.2 800.6 C2765.3 790.9 2765.3 790.9 2775.4 781.1 C2785.5 771.3 2785.5 771.3 2795.6 761.6 C2805.7 751.8 2805.7 751.8 2815.8 742.1 C2825.9 732.3 2836.0 722.6 2836.0 722.6 L2836.00 862.00 L1624.00 862.00 Z" fill="#fac858" fill-opacity="0.20" stroke="none"/>
<rect x="1624" y="780.0" width="1212" height="82.0" fill="#ee6666" fill-opacity="0.20"/>
<rect x="1624" y="860.5" width="1212" height="1.5" fill="#73c0de" fill-opacity="0.20"/>
<rect x="1624" y="608.0" width="1212" height="254.0" fill="#3ba272" fill-opacity="0.20"/>
<path d="M1624.0 605.0 C1624.0 605.0 1634.1 604.9 1644.2 604.8 C1654.3 604.7 1654.3 604.7 1664.4 604.6 C1674.5 604.5 1674.5 604.5 1684.6 604.4 C1694.7 604.2 1694.7 604.2 1704.8 604.1 C1714.9 604.0 1714.9 604.0 1725.0 603.9 C1735.1 603.8 1735.1 603.8 1745.2 603.7 C1755.3 603.6 1755.3 603.6 1765.4 603.5 C1775.5 603.4 1775.5 603.4 1785.6 603.3 C1795.7 603.2 1795.7 603.2 1805.8 603.0 C1815.9 602.9 1815.9 602.9 1826.0 602.8 C1836.1 602.7 1836.1 602.7 1846.2 602.6 C1856.3 602.5 1856.3 602.5 1866.4 602.4 C1876.5 602.3 1876.5 602.3 1886.6 602.2 C1896.7 602.1 1896.7 602.1 1906.8 602.0 C1916.9 601.9 1916.9 601.9 1927.0 601.8 C1937.1 601.6 1937.1 601.6 1947.2 601.5 C1957.3 601.4 1957.3 601.4 1967.4 601.3 C1977.5 601.2 1977.5 601.2 1987.6 601.1 C1997.7 601.0 1997.7 601.0 2007.8 600.9 C2017.9 600.8 2017.9 600.8 2028.0 600.7 C2038.1 600.6 2038.1 600.6 2048.2 600.5 C2058.3 600.3 2058.3 600.3 2068.4 600.2 C2078.5 600.1 2078.5 600.1 2088.6 600.0 C2098.7 599.9 2098.7 599.9 2108.8 599.8 C2118.9 599.7 2118.9 599.7 2129.0 599.6 C2139.1 599.5 2139.1 599.5 2149.2 599.4 C2159.3 599.3 2159.3 599.3 2169.4 599.1 C2179.5 599.0 2179.5 599.0 2189.6 598.9 C2199.7 598.8 2199.7 598.8 2209.8 598.7 C2219.9 598.6 2219.9 598.6 2230.0 598.5 C2240.1 598.4 2240.1 598.4 2250.2 598.3 C2260.3 598.2 2260.3 598.2 2270.4 598.1 C2280.5 598.0 2280.5 598.0 2290.6 597.9 C2300.7 597.7 2300.7 597.7 2310.8 597.6 C2320.9 597.5 2320.9 597.5 2331.0 597.4 C2341.1 597.3 2341.1 597.3 2351.2 597.2 C2361.3 597.1 2361.3 597.1 2371.4 597.0 C2381.5 596.9 2381.5 596.9 2391.6 596.8 C2401.7 596.7 2401.7 596.7 2411.8 596.5 C2421.9 596.4 2421.9 596.4 2432.0 596.3 C2442.1 596.2 2442.1 596.2 2452.2 596.1 C2462.3 596.0 2462.3 596.0 2472.4 595.9 C2482.5 595.8 2482.5 595.8 2492.6 595.7 C2502.7 595.6 2502.7 595.6 2512.8 595.5 C2522.9 595.4 2522.9 595.4 2533.0 595.2 C2543.1 595.1 2543.1 595.1 2553.2 595.0 C2563.3 594.9 2563.3 594.9 2573.4 594.8 C2583.5 594.7 2583.5 594.7 2593.6 594.6 C2603.7 594.5 2603.7 594.5 2613.8 594.4 C2623.9 594.3 2623.9 594.3 2634.0 594.2 C2644.1 594.1 2644.1 594.1 2654.2 594.0 C2664.3 593.8 2664.3 593.8 2674.4 593.7 C2684.5 593.6 2684.5 593.6 2694.6 593.5 C2704.7 593.4 2704.7 593.4 2714.8 593.3 C2724.9 593.2 2724.9 593.2 2735.0 593.1 C2745.1 593.0 2745.1 593.0 2755.2 592.9 C2765.3 592.8 2765.3 592.8 2775.4 592.6 C2785.5 592.5 2785.5 592.5 2795.6 592.4 C2805.7 592.3 2805.7 592.3 2815.8 592.2 C2825.9 592.1 2836.0 592.0 2836.0 592.0 L2836.00 862.00 L1624.00 862.00 Z" fill="#fc8452" fill-opacity="0.20" stroke="none"/>
<path d="M1624.0 729.0 C1624.0 729.0 1634.1 718.2 1644.2 707.3 C1654.3 696.5 1654.3 696.5 1664.4 685.7 C1674.5 674.8 1674.5 674.8 1684.6 664.0 C1694.7 653.2 1694.7 653.2 1704.8 642.3 C1714.9 631.5 1714.9 631.5 1725.0 620.7 C1735.1 609.8 1743.0 599.0 1745.2 599.0 C1763.2 599.0 1747.3 839.0 1765.4 839.0 C1767.5 839.0 1775.5 829.0 1785.6 819.1 C1795.7 809.1 1795.7 809.1 1805.8 799.2 C1815.9 789.2 1815.9 789.2 1826.0 779.3 C1836.1 769.3 1836.1 769.3 1846.2 759.4 C1856.3 749.4 1856.3 749.4 1866.4 739.5 C1876.5 729.5 1876.5 729.5 1886.6 719.6 C1896.7 709.6 1896.7 709.6 1906.8 699.7 C1916.9 689.7 1916.9 689.7 1927.0 679.8 C1937.1 669.8 1937.1 669.8 1947.2 659.9 C1957.3 649.9 1964.9 640.0 1967.4 640.0 C1985.1 640.0 1970.1 838.2 1987.6 838.2 C1990.3 838.2 1997.7 826.6 2007.8 814.9 C2017.9 803.3 2017.9 803.3 2028.0 791.7 C2038.1 780.1 2038.1 780.1 2048.2 768.5 C2058.3 756.9 2058.3 756.9 2068.4 745.3 C2078.5 733.7 2078.5 733.7 2088.6 722.1 C2098.7 710.5 2098.7 710.5 2108.8 698.9 C2118.9 687.3 2118.9 687.3 2129.0 675.6 C2139.1 664.0 2139.1 664.0 2149.2 652.4 C2159.3 640.8 2159.3 640.8 2169.4 629.2 C2179.5 617.6 2187.3 606.0 2189.6 606.0 C2207.5 606.0 2191.9 841.3 2209.8 841.3 C2212.1 841.3 2219.9 830.0 2230.0 818.6 C2240.1 807.3 2240.1 807.3 2250.2 796.0 C2260.3 784.7 2260.3 784.7 2270.4 773.4 C2280.5 762.1 2280.5 762.1 2290.6 750.8 C2300.7 739.5 2300.7 739.5 2310.8 728.1 C2320.9 716.8 2320.9 716.8 2331.0 705.5 C2341.1 694.2 2341.1 694.2 2351.2 682.9 C2361.3 671.6 2361.3 671.6 2371.4 660.3 C2381.5 648.9 2381.5 648.9 2391.6 637.6 C2401.7 626.3 2409.4 615.0 2411.8 615.0 C2429.6 615.0 2414.1 843.6 2432.0 843.6 C2434.3 843.6 2442.1 832.5 2452.2 821.3 C2462.3 810.1 2462.3 810.1 2472.4 798.9 C2482.5 787.7 2482.5 787.7 2492.6 776.5 C2502.7 765.4 2502.7 765.4 2512.8 754.2 C2522.9 743.0 2522.9 743.0 2533.0 731.8 C2543.1 720.6 2543.1 720.6 2553.2 709.5 C2563.3 698.3 2563.3 698.3 2573.4 687.1 C2583.5 675.9 2583.5 675.9 2593.6 664.7 C2603.7 653.5 2603.7 653.5 2613.8 642.4 C2623.9 631.2 2631.5 620.0 2634.0 620.0 C2651.7 620.0 2636.5 837.1 2654.2 837.1 C2656.7 837.1 2664.3 825.2 2674.4 813.3 C2684.5 801.4 2684.5 801.4 2694.6 789.5 C2704.7 777.6 2704.7 777.6 2714.8 765.7 C2724.9 753.8 2724.9 753.8 2735.0 741.9 C2745.1 730.0 2745.1 730.0 2755.2 718.1 C2765.3 706.2 2765.3 706.2 2775.4 694.3 C2785.5 682.4 2785.5 682.4 2795.6 670.5 C2805.7 658.6 2805.7 658.6 2815.8 646.7 C2825.9 634.8 2836.0 622.9 2836.0 622.9 L2836.00 862.00 L1624.00 862.00 Z" fill="#9a60b4" fill-opacity="0.20" stroke="none"/>
<path d="M1624.0 805.0 C1624.0 805.0 1634.1 763.8 1644.2 722.5 C1654.3 681.2 1658.7 640.0 1664.4 640.0 C1678.9 640.0 1669.8 854.0 1684.6 854.0 C1690.0 854.0 1694.7 816.3 1704.8 778.7 C1714.9 741.0 1714.9 741.0 1725.0 703.3 C1735.1 665.7 1738.6 628.0 1745.2 628.0 C1758.8 628.0 1750.7 789.0 1765.4 789.0 C1770.9 789.0 1775.5 760.8 1785.6 732.5 C1795.7 704.2 1800.3 676.0 1805.8 676.0 C1820.5 676.0 1812.1 836.0 1826.0 836.0 C1832.3 836.0 1836.1 800.5 1846.2 765.0 C1856.3 729.5 1856.3 729.5 1866.4 694.0 C1876.5 658.5 1881.7 623.0 1886.6 623.0 C1901.9 623.0 1892.0 850.0 1906.8 850.0 C1912.2 850.0 1916.9 810.0 1927.0 770.0 C1937.1 730.0 1937.1 730.0 1947.2 690.0 C1957.3 650.0 1961.3 610.0 1967.4 610.0 C1981.5 610.0 1973.0 800.0 1987.6 800.0 C1993.2 800.0 1997.7 765.0 2007.8 730.0 C2017.9 695.0 2022.5 660.0 2028.0 660.0 C2042.7 660.0 2034.2 852.0 2048.2 852.0 C2054.4 852.0 2058.3 810.0 2068.4 768.0 C2078.5 726.0 2078.5 726.0 2088.6 684.0 C2098.7 642.0 2102.8 600.0 2108.8 600.0 C2123.0 600.0 2113.1 805.0 2129.0 805.0 C2133.3 805.0 2139.1 778.7 2149.2 752.5 C2159.3 726.2 2164.0 700.0 2169.4 700.0 C2184.2 700.0 2175.9 854.0 2189.6 854.0 C2196.1 854.0 2199.7 818.3 2209.8 782.7 C2219.9 747.0 2219.9 747.0 2230.0 711.3 C2240.1 675.7 2243.5 640.0 2250.2 640.0 C2263.7 640.0 2257.4 789.0 2270.4 789.0 C2277.6 789.0 2280.5 748.8 2290.6 708.5 C2300.7 668.2 2305.1 628.0 2310.8 628.0 C2325.3 628.0 2315.1 836.0 2331.0 836.0 C2335.3 836.0 2341.1 809.3 2351.2 782.7 C2361.3 756.0 2361.3 756.0 2371.4 729.3 C2381.5 702.7 2386.6 676.0 2391.6 676.0 C2406.8 676.0 2397.8 850.0 2411.8 850.0 C2418.0 850.0 2421.9 812.2 2432.0 774.3 C2442.1 736.5 2442.1 736.5 2452.2 698.7 C2462.3 660.8 2466.2 623.0 2472.4 623.0 C2486.4 623.0 2479.5 800.0 2492.6 800.0 C2499.7 800.0 2502.7 752.5 2512.8 705.0 C2522.9 657.5 2527.2 610.0 2533.0 610.0 C2547.4 610.0 2537.4 852.0 2553.2 852.0 C2557.6 852.0 2563.3 820.0 2573.4 788.0 C2583.5 756.0 2583.5 756.0 2593.6 724.0 C2603.7 692.0 2607.5 660.0 2613.8 660.0 C2627.7 660.0 2622.2 805.0 2634.0 805.0 C2642.4 805.0 2644.1 753.8 2654.2 702.5 C2664.3 651.2 2668.5 600.0 2674.4 600.0 C2688.7 600.0 2678.0 854.0 2694.6 854.0 C2698.2 854.0 2704.7 828.3 2714.8 802.7 C2724.9 777.0 2724.9 777.0 2735.0 751.3 C2745.1 725.7 2747.6 700.0 2755.2 700.0 C2767.8 700.0 2764.5 789.0 2775.4 789.0 C2784.7 789.0 2785.5 751.8 2795.6 714.5 C2805.7 677.2 2810.1 640.0 2815.8 640.0 C2830.3 640.0 2836.0 836.0 2836.0 836.0 L2836.00 862.00 L1624.00 862.00 Z" fill="#ea7ccc" fill-opacity="0.20" stroke="none"/>
<rect x="1624" y="835.2" width="1212" height="26.8" fill="#5470c6" fill-opacity="0.20"/>
<rect x="1624" y="857.0" width="1212" height="5.0" fill="#91cc75" fill-opacity="0.20"/>
<rect x="1624" y="683.0" width="1212" height="179.0" fill="#fac858" fill-opacity="0.20"/>
<rect x="1624" y="679.7" width="1212" height="182.3" fill="#ee6666" fill-opacity="0.20"/>
<rect x="1624" y="320.5" width="1212" height="541.5" fill="#73c0de" fill-opacity="0.20"/>
<rect x="1624" y="860.0" width="1212" height="2.0" fill="#3ba272" fill-opacity="0.20"/>
<rect x="1624" y="799.0" width="1212" height="63.0" fill="#fc8452" fill-opacity="0.20"/>
<rect x="1624" y="812.0" width="1212" height="50.0" fill="#9a60b4" fill-opacity="0.20"/>
<rect x="1624" y="589.0" width="1212" height="273.0" fill="#ea7ccc" fill-opacity="0.20"/>
<rect x="1624" y="637.5" width="1212" height="224.5" fill="#5470c6" fill-opacity="0.20"/>
<path d="M1624.0 727.0 C1624.0 727.0 1634.1 720.6 1644.2 714.2 C1654.3 707.8 1654.3 707.8 1664.4 701.3 C1674.5 694.9 1674.5 694.9 1684.6 688.5 C1694.7 682.1 1694.7 682.1 1704.8 675.7 C1714.9 669.2 1714.9 669.2 1725.0 662.8 C1735.1 656.4 1743.0 650.0 1745.2 650.0 C1763.2 650.0 1747.3 849.0 1765.4 849.0 C1767.5 849.0 1775.5 842.8 1785.6 836.6 C1795.7 830.4 1795.7 830.4 1805.8 824.2 C1815.9 817.9 1815.9 817.9 1826.0 811.7 C1836.1 805.5 1836.1 805.5 1846.2 799.3 C1856.3 793.1 1856.3 793.1 1866.4 786.8 C1876.5 780.6 1876.5 780.6 1886.6 774.4 C1896.7 768.2 1896.7 768.2 1906.8 762.0 C1916.9 755.7 1916.9 755.7 1927.0 749.5 C1937.1 743.3 1937.1 743.3 1947.2 737.1 C1957.3 730.9 1957.3 730.9 1967.4 724.6 C1977.5 718.4 1977.5 718.4 1987.6 712.2 C1997.7 706.0 1997.7 706.0 2007.8 699.8 C2017.9 693.5 2017.9 693.5 2028.0 687.3 C2038.1 681.1 2038.1 681.1 2048.2 674.9 C2058.3 668.7 2058.3 668.7 2068.4 662.4 C2078.5 656.2 2086.4 650.0 2088.6 650.0 C2106.6 650.0 2090.8 847.2 2108.8 847.2 C2111.0 847.2 2118.9 841.0 2129.0 834.9 C2139.1 828.7 2139.1 828.7 2149.2 822.5 C2159.3 816.4 2159.3 816.4 2169.4 810.2 C2179.5 804.1 2179.5 804.1 2189.6 797.9 C2199.7 791.7 2199.7 791.7 2209.8 785.6 C2219.9 779.4 2219.9 779.4 2230.0 773.2 C2240.1 767.1 2240.1 767.1 2250.2 760.9 C2260.3 754.8 2260.3 754.8 2270.4 748.6 C2280.5 742.4 2280.5 742.4 2290.6 736.3 C2300.7 730.1 2300.7 730.1 2310.8 723.9 C2320.9 717.8 2320.9 717.8 2331.0 711.6 C2341.1 705.5 2341.1 705.5 2351.2 699.3 C2361.3 693.1 2361.3 693.1 2371.4 687.0 C2381.5 680.8 2381.5 680.8 2391.6 674.6 C2401.7 668.5 2401.7 668.5 2411.8 662.3 C2421.9 656.2 2429.9 650.0 2432.0 650.0 C2450.1 650.0 2434.1 849.3 2452.2 849.3 C2454.3 849.3 2462.3 843.1 2472.4 836.9 C2482.5 830.6 2482.5 830.6 2492.6 824.4 C2502.7 818.2 2502.7 818.2 2512.8 811.9 C2522.9 805.7 2522.9 805.7 2533.0 799.5 C2543.1 793.3 2543.1 793.3 2553.2 787.0 C2563.3 780.8 2563.3 780.8 2573.4 774.6 C2583.5 768.3 2583.5 768.3 2593.6 762.1 C2603.7 755.9 2603.7 755.9 2613.8 749.7 C2623.9 743.4 2623.9 743.4 2634.0 737.2 C2644.1 731.0 2644.1 731.0 2654.2 724.7 C2664.3 718.5 2664.3 718.5 2674.4 712.3 C2684.5 706.1 2684.5 706.1 2694.6 699.8 C2704.7 693.6 2704.7 693.6 2714.8 687.4 C2724.9 681.1 2724.9 681.1 2735.0 674.9 C2745.1 668.7 2745.1 668.7 2755.2 662.5 C2765.3 656.2 2773.3 650.0 2775.4 650.0 C2793.5 650.0 2777.6 852.0 2795.6 852.0 C2797.8 852.0 2805.7 844.4 2815.8 836.7 C2825.9 829.1 2836.0 821.5 2836.0 821.5 L2836.00 862.00 L1624.00 862.00 Z" fill="#91cc75" fill-opacity="0.20" stroke="none"/>
<path d="M1624.0 795.0 C1624.0 795.0 1634.1 756.2 1644.2 717.5 C1654.3 678.8 1654.5 640.0 1664.4 640.0 C1674.7 640.0 1674.5 680.0 1684.6 720.0 C1694.7 760.0 1694.6 800.0 1704.8 800.0 C1714.8 800.0 1714.9 760.5 1725.0 721.0 C1735.1 681.5 1734.8 642.0 1745.2 642.0 C1755.0 642.0 1755.3 679.0 1765.4 716.0 C1775.5 753.0 1775.5 790.0 1785.6 790.0 C1795.7 790.0 1795.7 753.2 1805.8 716.5 C1815.9 679.8 1817.3 643.0 1826.0 643.0 C1837.5 643.0 1836.1 692.2 1846.2 741.5 C1856.3 790.8 1854.0 840.0 1866.4 840.0 C1874.2 840.0 1876.5 810.0 1886.6 780.0 C1896.7 750.0 1896.7 750.0 1906.8 720.0 C1916.9 690.0 1917.1 660.0 1927.0 660.0 C1937.3 660.0 1937.1 691.7 1947.2 723.3 C1957.3 755.0 1957.3 755.0 1967.4 786.7 C1977.5 818.3 1980.1 850.0 1987.6 850.0 C2000.3 850.0 1997.7 795.0 2007.8 740.0 C2017.9 685.0 2016.5 630.0 2028.0 630.0 C2036.7 630.0 2038.1 671.2 2048.2 712.5 C2058.3 753.8 2058.0 795.0 2068.4 795.0 C2078.2 795.0 2078.5 756.2 2088.6 717.5 C2098.7 678.8 2098.9 640.0 2108.8 640.0 C2119.1 640.0 2118.9 680.0 2129.0 720.0 C2139.1 760.0 2139.0 800.0 2149.2 800.0 C2159.2 800.0 2159.3 760.5 2169.4 721.0 C2179.5 681.5 2179.2 642.0 2189.6 642.0 C2199.4 642.0 2199.7 679.0 2209.8 716.0 C2219.9 753.0 2218.1 790.0 2230.0 790.0 C2238.3 790.0 2240.1 765.5 2250.2 741.0 C2260.3 716.5 2260.3 716.5 2270.4 692.0 C2280.5 667.5 2281.8 643.0 2290.6 643.0 C2302.0 643.0 2300.7 675.8 2310.8 708.7 C2320.9 741.5 2320.9 741.5 2331.0 774.3 C2341.1 807.2 2342.6 840.0 2351.2 840.0 C2362.8 840.0 2361.3 795.0 2371.4 750.0 C2381.5 705.0 2381.8 660.0 2391.6 660.0 C2402.0 660.0 2401.7 707.5 2411.8 755.0 C2421.9 802.5 2422.6 850.0 2432.0 850.0 C2442.8 850.0 2442.1 795.0 2452.2 740.0 C2462.3 685.0 2460.9 630.0 2472.4 630.0 C2481.1 630.0 2482.5 671.2 2492.6 712.5 C2502.7 753.8 2502.4 795.0 2512.8 795.0 C2522.6 795.0 2522.9 756.2 2533.0 717.5 C2543.1 678.8 2543.3 640.0 2553.2 640.0 C2563.5 640.0 2563.3 680.0 2573.4 720.0 C2583.5 760.0 2581.6 800.0 2593.6 800.0 C2601.8 800.0 2603.7 773.7 2613.8 747.3 C2623.9 721.0 2623.9 721.0 2634.0 694.7 C2644.1 668.3 2643.8 642.0 2654.2 642.0 C2664.0 642.0 2664.3 666.7 2674.4 691.3 C2684.5 716.0 2684.5 716.0 2694.6 740.7 C2704.7 765.3 2706.5 790.0 2714.8 790.0 C2726.7 790.0 2724.9 753.2 2735.0 716.5 C2745.1 679.8 2746.5 643.0 2755.2 643.0 C2766.7 643.0 2765.3 692.2 2775.4 741.5 C2785.5 790.8 2785.1 840.0 2795.6 840.0 C2805.3 840.0 2805.7 795.0 2815.8 750.0 C2825.9 705.0 2836.0 660.0 2836.0 660.0 L2836.00 862.00 L1624.00 862.00 Z" fill="#fac858" fill-opacity="0.20" stroke="none"/>
<rect x="1624" y="838.8" width="1212" height="23.2" fill="#ee6666" fill-opacity="0.20"/>
<rect x="1624" y="861.0" width="1212" height="1.0" fill="#73c0de" fill-opacity="0.20"/>
<rect x="1624" y="687.7" width="1212" height="174.3" fill="#3ba272" fill-opacity="0.20"/>
<rect x="1624" y="716.7" width="1212" height="145.3" fill="#fc8452" fill-opacity="0.20"/>
<path d="M1624.0 760.0 C1624.0 760.0 1634.1 754.4 1644.2 748.9 C1654.3 743.3 1654.3 743.3 1664.4 737.8 C1674.5 732.2 1674.5 732.2 1684.6 726.7 C1694.7 721.1 1694.7 721.1 1704.8 715.6 C1714.9 710.0 1714.9 710.0 1725.0 704.4 C1735.1 698.9 1735.1 698.9 1745.2 693.3 C1755.3 687.8 1755.3 687.8 1765.4 682.2 C1775.5 676.7 1775.5 676.7 1785.6 671.1 C1795.7 665.6 1803.6 660.0 1805.8 660.0 C1823.8 660.0 1808.5 848.1 1826.0 848.1 C1828.7 848.1 1836.1 837.7 1846.2 827.3 C1856.3 816.9 1856.3 816.9 1866.4 806.5 C1876.5 796.0 1876.5 796.0 1886.6 785.6 C1896.7 775.2 1896.7 775.2 1906.8 764.8 C1916.9 754.4 1916.9 754.4 1927.0 744.0 C1937.1 733.6 1937.1 733.6 1947.2 723.2 C1957.3 712.8 1957.3 712.8 1967.4 702.4 C1977.5 692.0 1977.5 692.0 1987.6 681.6 C1997.7 671.2 1997.7 671.2 2007.8 660.8 C2017.9 650.4 2025.6 640.0 2028.0 640.0 C2045.8 640.0 2030.1 853.5 2048.2 853.5 C2050.3 853.5 2058.3 845.8 2068.4 838.2 C2078.5 830.5 2078.5 830.5 2088.6 822.8 C2098.7 815.1 2098.7 815.1 2108.8 807.5 C2118.9 799.8 2118.9 799.8 2129.0 792.1 C2139.1 784.4 2139.1 784.4 2149.2 776.8 C2159.3 769.1 2159.3 769.1 2169.4 761.4 C2179.5 753.7 2179.5 753.7 2189.6 746.1 C2199.7 738.4 2199.7 738.4 2209.8 730.7 C2219.9 723.0 2219.9 723.0 2230.0 715.4 C2240.1 707.7 2247.3 700.0 2250.2 700.0 C2267.5 700.0 2253.3 850.7 2270.4 850.7 C2273.5 850.7 2280.5 841.6 2290.6 832.4 C2300.7 823.3 2300.7 823.3 2310.8 814.2 C2320.9 805.1 2320.9 805.1 2331.0 796.0 C2341.1 786.8 2341.1 786.8 2351.2 777.7 C2361.3 768.6 2361.3 768.6 2371.4 759.5 C2381.5 750.3 2381.5 750.3 2391.6 741.2 C2401.7 732.1 2401.7 732.1 2411.8 723.0 C2421.9 713.9 2421.9 713.9 2432.0 704.7 C2442.1 695.6 2442.1 695.6 2452.2 686.5 C2462.3 677.4 2462.3 677.4 2472.4 668.2 C2482.5 659.1 2490.2 650.0 2492.6 650.0 C2510.4 650.0 2494.9 853.1 2512.8 853.1 C2515.1 853.1 2522.9 844.4 2533.0 835.8 C2543.1 827.1 2543.1 827.1 2553.2 818.5 C2563.3 809.8 2563.3 809.8 2573.4 801.2 C2583.5 792.5 2583.5 792.5 2593.6 783.9 C2603.7 775.2 2603.7 775.2 2613.8 766.5 C2623.9 757.9 2623.9 757.9 2634.0 749.2 C2644.1 740.6 2644.1 740.6 2654.2 731.9 C2664.3 723.3 2664.3 723.3 2674.4 714.6 C2684.5 706.0 2684.5 706.0 2694.6 697.3 C2704.7 688.7 2712.1 680.0 2714.8 680.0 C2732.3 680.0 2717.6 854.7 2735.0 854.7 C2737.8 854.7 2745.1 844.7 2755.2 834.8 C2765.3 824.8 2765.3 824.8 2775.4 814.8 C2785.5 804.9 2785.5 804.9 2795.6 794.9 C2805.7 784.9 2805.7 784.9 2815.8 774.9 C2825.9 765.0 2836.0 755.0 2836.0 755.0 L2836.00 862.00 L1624.00 862.00 Z" fill="#9a60b4" fill-opacity="0.20" stroke="none"/>
<rect x="1624" y="859.5" width="1212" height="2.5" fill="#ea7ccc" fill-opacity="0.20"/>
<path d="M1624.0 847.0 C1624.0 847.0 1634.1 848.6 1644.2 848.6 C1654.3 848.6 1654.3 848.6 1664.4 848.6 C1674.5 848.6 1674.5 847.9 1684.6 847.0 C1694.7 846.2 1694.7 845.6 1704.8 845.2 C1714.9 844.8 1714.9 844.8 1725.0 844.8 C1735.1 844.8 1735.1 845.1 1745.2 845.6 C1755.3 846.1 1755.3 846.2 1765.4 846.9 C1775.5 847.6 1775.5 848.4 1785.6 848.5 C1795.7 848.7 1795.7 848.7 1805.8 848.7 C1815.9 848.7 1815.9 847.1 1826.0 846.7 C1836.1 846.4 1836.1 846.7 1846.2 846.4 C1856.3 846.1 1856.3 844.9 1866.4 844.9 C1876.5 844.9 1876.5 845.7 1886.6 846.4 C1896.7 847.0 1896.7 847.0 1906.8 847.6 C1916.9 848.2 1916.9 848.8 1927.0 848.8 C1937.1 848.8 1937.1 848.8 1947.2 848.7 C1957.3 848.5 1957.3 847.4 1967.4 846.6 C1977.5 845.8 1977.5 845.5 1987.6 845.5 C1997.7 845.5 1997.7 846.2 2007.8 846.2 C2017.9 846.2 2017.9 845.7 2028.0 845.7 C2038.1 845.7 2038.1 846.3 2048.2 847.1 C2058.3 847.8 2058.3 848.6 2068.4 848.6 C2078.5 848.6 2078.5 848.6 2088.6 848.3 C2098.7 848.1 2098.7 846.7 2108.8 846.6 C2118.9 846.5 2118.9 846.6 2129.0 846.5 C2139.1 846.4 2139.1 844.8 2149.2 844.8 C2159.3 844.8 2159.3 845.4 2169.4 846.1 C2179.5 846.8 2179.5 846.8 2189.6 847.5 C2199.7 848.1 2199.7 848.7 2209.8 848.7 C2219.9 848.7 2219.9 848.4 2230.0 848.1 C2240.1 847.8 2240.1 847.9 2250.2 847.5 C2260.3 847.0 2260.3 847.1 2270.4 846.5 C2280.5 845.8 2280.5 844.8 2290.6 844.8 C2300.7 844.8 2300.7 845.0 2310.8 845.5 C2320.9 846.1 2320.9 846.2 2331.0 847.0 C2341.1 847.8 2341.1 848.6 2351.2 848.6 C2361.3 848.6 2361.3 847.7 2371.4 847.2 C2381.5 846.8 2381.5 847.0 2391.6 846.8 C2401.7 846.6 2401.7 846.5 2411.8 846.3 C2421.9 846.2 2421.9 846.3 2432.0 846.2 C2442.1 846.1 2442.1 845.5 2452.2 845.5 C2462.3 845.5 2462.3 846.4 2472.4 846.9 C2482.5 847.4 2482.5 847.4 2492.6 847.4 C2502.7 847.4 2502.7 847.4 2512.8 847.4 C2522.9 847.3 2522.9 847.4 2533.0 846.9 C2543.1 846.5 2543.1 845.4 2553.2 845.1 C2563.3 844.8 2563.3 844.8 2573.4 844.8 C2583.5 844.8 2583.5 846.1 2593.6 846.7 C2603.7 847.2 2603.7 847.0 2613.8 847.2 C2623.9 847.4 2623.9 847.2 2634.0 847.4 C2644.1 847.6 2644.1 848.4 2654.2 848.4 C2664.3 848.4 2664.3 847.8 2674.4 847.3 C2684.5 846.8 2684.5 846.7 2694.6 846.5 C2704.7 846.2 2704.7 846.4 2714.8 846.2 C2724.9 846.0 2724.9 845.6 2735.0 845.6 C2745.1 845.6 2745.1 847.2 2755.2 847.3 C2765.3 847.4 2765.3 847.4 2775.4 847.4 C2785.5 847.4 2785.5 847.4 2795.6 847.2 C2805.7 847.1 2805.7 847.0 2815.8 846.4 C2825.9 845.9 2836.0 845.2 2836.0 845.2 L2836.00 862.00 L1624.00 862.00 Z" fill="#5470c6" fill-opacity="0.20" stroke="none"/>
<rect x="1624" y="647.7" width="1212" height="214.3" fill="#91cc75" fill-opacity="0.20"/>
<rect x="1624" y="709.4" width="1212" height="152.6" fill="#fac858" fill-opacity="0.20"/>
<rect x="1624" y="734.7" width="1212" height="127.3" fill="#ee6666" fill-opacity="0.20"/>
<path d="M1624.0 789.6 C1624.0 789.6 1634.1 789.7 1644.2 789.7 C1654.3 789.7 1654.3 789.7 1664.4 789.5 C1674.5 789.4 1674.5 789.4 1684.6 789.0 C1694.7 788.6 1694.7 788.6 1704.8 788.0 C1714.9 787.3 1714.9 787.3 1725.0 786.5 C1735.1 785.6 1735.1 785.6 1745.2 784.7 C1755.3 783.8 1755.3 783.7 1765.4 782.8 C1775.5 781.9 1775.5 781.9 1785.6 781.2 C1795.7 780.4 1795.7 780.4 1805.8 779.8 C1815.9 779.3 1815.9 779.3 1826.0 779.0 C1836.1 778.7 1836.1 778.7 1846.2 778.7 C1856.3 778.6 1856.3 778.6 1866.4 778.6 C1876.5 778.6 1876.5 778.7 1886.6 778.8 C1896.7 778.8 1896.7 778.8 1906.8 778.8 C1916.9 778.8 1916.9 778.7 1927.0 778.5 C1937.1 778.2 1937.1 778.2 1947.2 777.7 C1957.3 777.2 1957.3 777.2 1967.4 776.5 C1977.5 775.7 1977.5 775.7 1987.6 774.8 C1997.7 774.0 1997.7 773.9 2007.8 773.0 C2017.9 772.1 2017.9 772.0 2028.0 771.2 C2038.1 770.3 2038.1 770.3 2048.2 769.6 C2058.3 769.0 2058.3 769.0 2068.4 768.5 C2078.5 768.1 2078.5 768.1 2088.6 767.9 C2098.7 767.7 2098.7 767.7 2108.8 767.7 C2118.9 767.7 2118.9 767.8 2129.0 767.8 C2139.1 767.8 2139.1 767.9 2149.2 767.9 C2159.3 767.9 2159.3 767.9 2169.4 767.8 C2179.5 767.7 2179.5 767.7 2189.6 767.3 C2199.7 766.9 2199.7 766.9 2209.8 766.3 C2219.9 765.7 2219.9 765.5 2230.0 764.9 C2240.1 764.3 2240.1 764.4 2250.2 763.9 C2260.3 763.4 2260.3 763.3 2270.4 762.8 C2280.5 762.3 2280.5 762.3 2290.6 761.9 C2300.7 761.5 2300.7 761.4 2310.8 761.3 C2320.9 761.1 2320.9 761.1 2331.0 761.1 C2341.1 761.1 2341.1 761.2 2351.2 761.5 C2361.3 761.8 2361.3 761.8 2371.4 762.2 C2381.5 762.6 2381.5 762.7 2391.6 763.1 C2401.7 763.5 2401.7 763.6 2411.8 763.9 C2421.9 764.2 2421.9 764.4 2432.0 764.4 C2442.1 764.5 2442.1 764.5 2452.2 764.5 C2462.3 764.5 2462.3 764.4 2472.4 764.1 C2482.5 763.8 2482.5 763.7 2492.6 763.2 C2502.7 762.8 2502.7 762.7 2512.8 762.2 C2522.9 761.7 2522.9 761.6 2533.0 761.1 C2543.1 760.7 2543.1 760.6 2553.2 760.3 C2563.3 760.0 2563.3 759.9 2573.4 759.9 C2583.5 759.9 2583.5 759.9 2593.6 760.0 C2603.7 760.1 2603.7 760.2 2613.8 760.5 C2623.9 760.9 2623.9 760.9 2634.0 761.3 C2644.1 761.8 2644.1 761.8 2654.2 762.2 C2664.3 762.6 2664.3 762.7 2674.4 762.9 C2684.5 763.2 2684.5 763.3 2694.6 763.3 C2704.7 763.3 2704.7 763.3 2714.8 763.1 C2724.9 763.0 2724.9 762.9 2735.0 762.5 C2745.1 762.1 2745.1 762.1 2755.2 761.5 C2765.3 761.0 2765.3 761.0 2775.4 760.5 C2785.5 759.9 2785.5 759.9 2795.6 759.5 C2805.7 759.1 2805.7 759.0 2815.8 758.8 C2825.9 758.6 2836.0 758.6 2836.0 758.6 L2836.00 862.00 L1624.00 862.00 Z" fill="#73c0de" fill-opacity="0.20" stroke="none"/>
<rect x="1624" y="861.0" width="1212" height="1.0" fill="#3ba272" fill-opacity="0.20"/>
<rect x="1624" y="838.7" width="1212" height="23.3" fill="#fc8452" fill-opacity="0.20"/>
<rect x="1624" y="756.9" width="1212" height="105.1" fill="#9a60b4" fill-opacity="0.20"/>
<rect x="1624" y="803.0" width="1212" height="59.0" fill="#ea7ccc" fill-opacity="0.20"/>
<path d="M1624.0 727.0 C1624.0 727.0 1634.1 720.1 1644.2 713.1 C1654.3 706.2 1654.3 706.2 1664.4 699.2 C1674.5 692.3 1674.5 692.3 1684.6 685.3 C1694.7 678.4 1694.7 678.4 1704.8 671.4 C1714.9 664.5 1714.9 664.5 1725.0 657.6 C1735.1 650.6 1735.1 650.6 1745.2 643.7 C1755.3 636.7 1755.3 636.7 1765.4 629.8 C1775.5 622.8 1775.5 622.8 1785.6 615.9 C1795.7 608.9 1804.0 602.0 1805.8 602.0 C1824.2 602.0 1807.6 850.2 1826.0 850.2 C1827.8 850.2 1836.1 843.3 1846.2 836.4 C1856.3 829.5 1856.3 829.5 1866.4 822.6 C1876.5 815.7 1876.5 815.7 1886.6 808.8 C1896.7 801.9 1896.7 801.9 1906.8 795.0 C1916.9 788.1 1916.9 788.1 1927.0 781.2 C1937.1 774.4 1937.1 774.4 1947.2 767.5 C1957.3 760.6 1957.3 760.6 1967.4 753.7 C1977.5 746.8 1977.5 746.8 1987.6 739.9 C1997.7 733.0 1997.7 733.0 2007.8 726.1 C2017.9 719.2 2017.9 719.2 2028.0 712.3 C2038.1 705.4 2038.1 705.4 2048.2 698.5 C2058.3 691.6 2058.3 691.6 2068.4 684.7 C2078.5 677.8 2078.5 677.8 2088.6 670.9 C2098.7 664.0 2098.7 664.0 2108.8 657.2 C2118.9 650.3 2118.9 650.3 2129.0 643.4 C2139.1 636.5 2139.1 636.5 2149.2 629.6 C2159.3 622.7 2159.3 622.7 2169.4 615.8 C2179.5 608.9 2187.8 602.0 2189.6 602.0 C2208.0 602.0 2191.3 853.0 2209.8 853.0 C2211.5 853.0 2219.9 847.3 2230.0 841.6 C2240.1 835.9 2240.1 835.9 2250.2 830.2 C2260.3 824.5 2260.3 824.5 2270.4 818.8 C2280.5 813.1 2280.5 813.1 2290.6 807.4 C2300.7 801.7 2300.7 801.7 2310.8 796.0 C2320.9 790.3 2320.9 790.3 2331.0 784.6 C2341.1 778.9 2341.1 778.9 2351.2 773.2 C2361.3 767.5 2361.3 767.5 2371.4 761.7 C2381.5 756.0 2381.5 756.0 2391.6 750.3 C2401.7 744.6 2401.7 744.6 2411.8 738.9 C2421.9 733.2 2421.9 733.2 2432.0 727.5 C2442.1 721.8 2442.1 721.8 2452.2 716.1 C2462.3 710.4 2462.3 710.4 2472.4 704.7 C2482.5 699.0 2482.5 699.0 2492.6 693.3 C2502.7 687.6 2502.7 687.6 2512.8 681.9 C2522.9 676.2 2522.9 676.2 2533.0 670.5 C2543.1 664.8 2543.1 664.8 2553.2 659.1 C2563.3 653.3 2563.3 653.3 2573.4 647.6 C2583.5 641.9 2583.5 641.9 2593.6 636.2 C2603.7 630.5 2603.7 630.5 2613.8 624.8 C2623.9 619.1 2623.9 619.1 2634.0 613.4 C2644.1 607.7 2652.5 602.0 2654.2 602.0 C2672.7 602.0 2655.9 854.8 2674.4 854.8 C2676.1 854.8 2684.5 848.9 2694.6 842.9 C2704.7 837.0 2704.7 837.0 2714.8 831.1 C2724.9 825.1 2724.9 825.1 2735.0 819.2 C2745.1 813.3 2745.1 813.3 2755.2 807.3 C2765.3 801.4 2765.3 801.4 2775.4 795.4 C2785.5 789.5 2785.5 789.5 2795.6 783.6 C2805.7 777.6 2805.7 777.6 2815.8 771.7 C2825.9 765.8 2836.0 759.8 2836.0 759.8 L2836.00 862.00 L1624.00 862.00 Z" fill="#5470c6" fill-opacity="0.20" stroke="none"/>
<path d="M1624.0 800.0 C1624.0 800.0 1634.1 797.1 1644.2 794.3 C1654.3 791.4 1654.3 791.4 1664.4 788.6 C1674.5 785.7 1674.5 785.7 1684.6 782.9 C1694.7 780.0 1694.7 780.0 1704.8 777.1 C1714.9 774.3 1714.9 774.3 1725.0 771.4 C1735.1 768.6 1735.1 768.6 1745.2 765.7 C1755.3 762.9 1755.3 762.9 1765.4 760.0 C1775.5 757.1 1775.5 757.1 1785.6 754.3 C1795.7 751.4 1795.7 751.4 1805.8 748.6 C1815.9 745.7 1815.9 745.7 1826.0 742.9 C1836.1 740.0 1836.1 740.0 1846.2 737.1 C1856.3 734.3 1856.3 734.3 1866.4 731.4 C1876.5 728.6 1876.5 728.6 1886.6 725.7 C1896.7 722.9 1904.0 720.0 1906.8 720.0 C1924.2 720.0 1909.7 849.6 1927.0 849.6 C1929.9 849.6 1937.1 845.6 1947.2 841.5 C1957.3 837.5 1957.3 837.5 1967.4 833.4 C1977.5 829.4 1977.5 829.4 1987.6 825.3 C1997.7 821.3 1997.7 821.3 2007.8 817.2 C2017.9 813.2 2017.9 813.2 2028.0 809.1 C2038.1 805.1 2038.1 805.1 2048.2 801.0 C2058.3 797.0 2058.3 797.0 2068.4 792.9 C2078.5 788.9 2078.5 788.9 2088.6 784.8 C2098.7 780.8 2098.7 780.8 2108.8 776.7 C2118.9 772.7 2118.9 772.7 2129.0 768.6 C2139.1 764.6 2139.1 764.6 2149.2 760.5 C2159.3 756.5 2159.3 756.5 2169.4 752.4 C2179.5 748.4 2179.5 748.4 2189.6 744.3 C2199.7 740.3 2199.7 740.3 2209.8 736.2 C2219.9 732.2 2219.9 732.2 2230.0 728.1 C2240.1 724.1 2247.4 720.0 2250.2 720.0 C2267.6 720.0 2253.0 852.0 2270.4 852.0 C2273.2 852.0 2280.5 847.9 2290.6 843.7 C2300.7 839.6 2300.7 839.6 2310.8 835.5 C2320.9 831.4 2320.9 831.4 2331.0 827.2 C2341.1 823.1 2341.1 823.1 2351.2 819.0 C2361.3 814.9 2361.3 814.9 2371.4 810.7 C2381.5 806.6 2381.5 806.6 2391.6 802.5 C2401.7 798.4 2401.7 798.4 2411.8 794.2 C2421.9 790.1 2421.9 790.1 2432.0 786.0 C2442.1 781.9 2442.1 781.9 2452.2 777.7 C2462.3 773.6 2462.3 773.6 2472.4 769.5 C2482.5 765.4 2482.5 765.4 2492.6 761.2 C2502.7 757.1 2502.7 757.1 2512.8 753.0 C2522.9 748.9 2522.9 748.9 2533.0 744.7 C2543.1 740.6 2543.1 740.6 2553.2 736.5 C2563.3 732.4 2563.3 732.4 2573.4 728.2 C2583.5 724.1 2590.8 720.0 2593.6 720.0 C2611.0 720.0 2596.4 855.5 2613.8 855.5 C2616.6 855.5 2623.9 851.2 2634.0 847.0 C2644.1 842.7 2644.1 842.7 2654.2 838.4 C2664.3 834.1 2664.3 834.1 2674.4 829.8 C2684.5 825.5 2684.5 825.5 2694.6 821.2 C2704.7 817.0 2704.7 817.0 2714.8 812.7 C2724.9 808.4 2724.9 808.4 2735.0 804.1 C2745.1 799.8 2745.1 799.8 2755.2 795.5 C2765.3 791.2 2765.3 791.2 2775.4 787.0 C2785.5 782.7 2785.5 782.7 2795.6 778.4 C2805.7 774.1 2805.7 774.1 2815.8 769.8 C2825.9 765.5 2836.0 761.2 2836.0 761.2 L2836.00 862.00 L1624.00 862.00 Z" fill="#91cc75" fill-opacity="0.20" stroke="none"/>
<rect x="1624" y="859.0" width="1212" height="3.0" fill="#fac858" fill-opacity="0.20"/>
<rect x="1624" y="854.9" width="1212" height="7.1" fill="#ee6666" fill-opacity="0.20"/>
<rect x="1624" y="586.0" width="1212" height="276.0" fill="#73c0de" fill-opacity="0.20"/>
<rect x="1624" y="860.0" width="1212" height="2.0" fill="#3ba272" fill-opacity="0.20"/>
<rect x="1624" y="861.0" width="1212" height="1.0" fill="#fc8452" fill-opacity="0.20"/>
<path d="M1624.0 780.0 C1624.0 780.0 1634.1 776.7 1644.2 773.3 C1654.3 770.0 1654.3 770.0 1664.4 766.7 C1674.5 763.3 1674.5 763.3 1684.6 760.0 C1694.7 756.7 1694.7 756.7 1704.8 753.3 C1714.9 750.0 1714.9 750.0 1725.0 746.7 C1735.1 743.3 1735.1 743.3 1745.2 740.0 C1755.3 736.7 1755.3 736.7 1765.4 733.3 C1775.5 730.0 1775.5 730.0 1785.6 726.7 C1795.7 723.3 1795.7 723.3 1805.8 720.0 C1815.9 716.7 1815.9 716.7 1826.0 713.3 C1836.1 710.0 1836.1 710.0 1846.2 706.7 C1856.3 703.3 1863.9 700.0 1866.4 700.0 C1884.1 700.0 1869.2 849.6 1886.6 849.6 C1889.4 849.6 1896.7 842.8 1906.8 836.0 C1916.9 829.2 1916.9 829.2 1927.0 822.4 C1937.1 815.6 1937.1 815.6 1947.2 808.8 C1957.3 802.0 1957.3 802.0 1967.4 795.2 C1977.5 788.4 1977.5 788.4 1987.6 781.6 C1997.7 774.8 1997.7 774.8 2007.8 768.0 C2017.9 761.2 2017.9 761.2 2028.0 754.4 C2038.1 747.6 2038.1 747.6 2048.2 740.8 C2058.3 734.0 2058.3 734.0 2068.4 727.2 C2078.5 720.4 2078.5 720.4 2088.6 713.6 C2098.7 706.8 2106.0 700.0 2108.8 700.0 C2126.2 700.0 2111.6 852.9 2129.0 852.9 C2131.8 852.9 2139.1 845.9 2149.2 839.0 C2159.3 832.0 2159.3 832.0 2169.4 825.1 C2179.5 818.1 2179.5 818.1 2189.6 811.2 C2199.7 804.2 2199.7 804.2 2209.8 797.3 C2219.9 790.3 2219.9 790.3 2230.0 783.4 C2240.1 776.4 2240.1 776.4 2250.2 769.5 C2260.3 762.5 2260.3 762.5 2270.4 755.6 C2280.5 748.6 2280.5 748.6 2290.6 741.7 C2300.7 734.7 2300.7 734.7 2310.8 727.8 C2320.9 720.8 2320.9 720.8 2331.0 713.9 C2341.1 706.9 2348.3 700.0 2351.2 700.0 C2368.5 700.0 2354.1 847.2 2371.4 847.2 C2374.3 847.2 2381.5 839.8 2391.6 832.5 C2401.7 825.1 2401.7 825.1 2411.8 817.8 C2421.9 810.4 2421.9 810.4 2432.0 803.0 C2442.1 795.7 2442.1 795.7 2452.2 788.3 C2462.3 781.0 2462.3 781.0 2472.4 773.6 C2482.5 766.2 2482.5 766.2 2492.6 758.9 C2502.7 751.5 2502.7 751.5 2512.8 744.2 C2522.9 736.8 2522.9 736.8 2533.0 729.4 C2543.1 722.1 2543.1 722.1 2553.2 714.7 C2563.3 707.4 2570.6 700.0 2573.4 700.0 C2590.8 700.0 2576.2 852.7 2593.6 852.7 C2596.4 852.7 2603.7 845.8 2613.8 838.9 C2623.9 831.9 2623.9 831.9 2634.0 825.0 C2644.1 818.0 2644.1 818.0 2654.2 811.1 C2664.3 804.1 2664.3 804.1 2674.4 797.2 C2684.5 790.3 2684.5 790.3 2694.6 783.3 C2704.7 776.4 2704.7 776.4 2714.8 769.4 C2724.9 762.5 2724.9 762.5 2735.0 755.5 C2745.1 748.6 2745.1 748.6 2755.2 741.7 C2765.3 734.7 2765.3 734.7 2775.4 727.8 C2785.5 720.8 2785.5 720.8 2795.6 713.9 C2805.7 706.9 2813.0 700.0 2815.8 700.0 C2833.2 700.0 2836.0 853.7 2836.0 853.7 L2836.00 862.00 L1624.00 862.00 Z" fill="#9a60b4" fill-opacity="0.20" stroke="none"/>
<rect x="1624" y="825.0" width="1212" height="37.0" fill="#ea7ccc" fill-opacity="0.20"/>
<rect x="1624" y="676.7" width="1212" height="185.3" fill="#5470c6" fill-opacity="0.20"/>
<rect x="1624" y="695.0" width="1212" height="167.0" fill="#91cc75" fill-opacity="0.20"/>
<rect x="1624" y="860.0" width="1212" height="2.0" fill="#fac858" fill-opacity="0.20"/>
<path d="M1624.0 807.0 C1624.0 807.0 1634.1 771.2 1644.2 735.5 C1654.3 699.8 1658.7 664.0 1664.4 664.0 C1678.9 664.0 1669.1 851.0 1684.6 851.0 C1689.3 851.0 1694.7 824.0 1704.8 797.0 C1714.9 770.0 1714.9 770.0 1725.0 743.0 C1735.1 716.0 1736.9 689.0 1745.2 689.0 C1757.1 689.0 1755.2 769.0 1765.4 769.0 C1775.4 769.0 1775.5 729.8 1785.6 690.5 C1795.7 651.2 1800.7 612.0 1805.8 612.0 C1820.9 612.0 1810.8 852.0 1826.0 852.0 C1831.0 852.0 1836.1 813.5 1846.2 775.0 C1856.3 736.5 1857.6 698.0 1866.4 698.0 C1877.8 698.0 1872.9 800.0 1886.6 800.0 C1893.1 800.0 1896.7 777.3 1906.8 754.7 C1916.9 732.0 1916.9 732.0 1927.0 709.3 C1937.1 686.7 1942.6 664.0 1947.2 664.0 C1962.8 664.0 1953.0 830.0 1967.4 830.0 C1973.2 830.0 1977.5 797.5 1987.6 765.0 C1997.7 732.5 2000.0 700.0 2007.8 700.0 C2020.2 700.0 2014.9 807.0 2028.0 807.0 C2035.1 807.0 2038.1 779.2 2048.2 751.3 C2058.3 723.5 2058.3 723.5 2068.4 695.7 C2078.5 667.8 2084.2 640.0 2088.6 640.0 C2104.4 640.0 2094.9 851.0 2108.8 851.0 C2115.1 851.0 2118.9 804.2 2129.0 757.5 C2139.1 710.8 2139.7 664.0 2149.2 664.0 C2159.9 664.0 2155.2 769.0 2169.4 769.0 C2175.4 769.0 2179.5 749.0 2189.6 729.0 C2199.7 709.0 2205.5 689.0 2209.8 689.0 C2225.7 689.0 2216.6 852.0 2230.0 852.0 C2236.8 852.0 2240.1 812.0 2250.2 772.0 C2260.3 732.0 2260.3 732.0 2270.4 692.0 C2280.5 652.0 2284.5 612.0 2290.6 612.0 C2304.7 612.0 2295.1 800.0 2310.8 800.0 C2315.3 800.0 2320.9 774.5 2331.0 749.0 C2341.1 723.5 2345.3 698.0 2351.2 698.0 C2365.5 698.0 2357.4 830.0 2371.4 830.0 C2377.6 830.0 2381.5 802.3 2391.6 774.7 C2401.7 747.0 2401.7 747.0 2411.8 719.3 C2421.9 691.7 2426.1 664.0 2432.0 664.0 C2446.3 664.0 2437.7 807.0 2452.2 807.0 C2457.9 807.0 2462.3 780.3 2472.4 753.5 C2482.5 726.8 2487.1 700.0 2492.6 700.0 C2507.3 700.0 2501.0 851.0 2512.8 851.0 C2521.2 851.0 2522.9 798.2 2533.0 745.5 C2543.1 692.8 2544.1 640.0 2553.2 640.0 C2564.3 640.0 2558.0 769.0 2573.4 769.0 C2578.2 769.0 2583.5 751.5 2593.6 734.0 C2603.7 716.5 2603.7 716.5 2613.8 699.0 C2623.9 681.5 2630.4 664.0 2634.0 664.0 C2650.6 664.0 2640.2 852.0 2654.2 852.0 C2660.4 852.0 2664.3 811.2 2674.4 770.5 C2684.5 729.8 2686.0 689.0 2694.6 689.0 C2706.2 689.0 2702.0 800.0 2714.8 800.0 C2722.2 800.0 2724.9 768.7 2735.0 737.3 C2745.1 706.0 2745.1 706.0 2755.2 674.7 C2765.3 643.3 2770.7 612.0 2775.4 612.0 C2790.9 612.0 2780.2 830.0 2795.6 830.0 C2800.4 830.0 2805.7 797.0 2815.8 764.0 C2825.9 731.0 2836.0 698.0 2836.0 698.0 L2836.00 862.00 L1624.00 862.00 Z" fill="#ee6666" fill-opacity="0.20" stroke="none"/>
<rect x="1624" y="830.8" width="1212" height="31.2" fill="#73c0de" fill-opacity="0.20"/>
<rect x="1624" y="788.5" width="1212" height="73.5" fill="#3ba272" fill-opacity="0.20"/>
<rect x="1624" y="861.0" width="1212" height="1.0" fill="#fc8452" fill-opacity="0.20"/>
<rect x="1624" y="663.9" width="1212" height="198.1" fill="#9a60b4" fill-opacity="0.20"/>
<rect x="1624" y="858.8" width="1212" height="3.2" fill="#ea7ccc" fill-opacity="0.20"/>
<path d="M1624.0 840.0 C1624.0 840.0 1634.1 835.3 1644.2 830.7 C1654.3 826.0 1654.3 826.0 1664.4 821.3 C1674.5 816.7 1674.5 816.7 1684.6 812.0 C1694.7 807.3 1694.7 807.3 1704.8 802.7 C1714.9 798.0 1714.9 798.0 1725.0 793.3 C1735.1 788.7 1735.1 788.7 1745.2 784.0 C1755.3 779.3 1755.3 779.3 1765.4 774.7 C1775.5 770.0 1775.5 770.0 1785.6 765.3 C1795.7 760.7 1795.7 760.7 1805.8 756.0 C1815.9 751.3 1815.9 751.3 1826.0 746.7 C1836.1 742.0 1836.1 742.0 1846.2 737.3 C1856.3 732.7 1856.3 732.7 1866.4 728.0 C1876.5 723.3 1876.5 723.3 1886.6 718.7 C1896.7 714.0 1896.7 714.0 1906.8 709.3 C1916.9 704.7 1924.5 700.0 1927.0 700.0 C1944.7 700.0 1929.4 855.5 1947.2 855.5 C1949.6 855.5 1957.3 852.0 1967.4 848.5 C1977.5 844.9 1977.5 844.9 1987.6 841.4 C1997.7 837.8 1997.7 837.8 2007.8 834.3 C2017.9 830.8 2017.9 830.8 2028.0 827.2 C2038.1 823.7 2038.1 823.7 2048.2 820.2 C2058.3 816.6 2058.3 816.6 2068.4 813.1 C2078.5 809.6 2078.5 809.6 2088.6 806.0 C2098.7 802.5 2098.7 802.5 2108.8 799.0 C2118.9 795.4 2118.9 795.4 2129.0 791.9 C2139.1 788.4 2139.1 788.4 2149.2 784.8 C2159.3 781.3 2159.3 781.3 2169.4 777.8 C2179.5 774.2 2179.5 774.2 2189.6 770.7 C2199.7 767.2 2199.7 767.2 2209.8 763.6 C2219.9 760.1 2219.9 760.1 2230.0 756.6 C2240.1 753.0 2240.1 753.0 2250.2 749.5 C2260.3 745.9 2260.3 745.9 2270.4 742.4 C2280.5 738.9 2280.5 738.9 2290.6 735.3 C2300.7 731.8 2300.7 731.8 2310.8 728.3 C2320.9 724.7 2320.9 724.7 2331.0 721.2 C2341.1 717.7 2341.1 717.7 2351.2 714.1 C2361.3 710.6 2361.3 710.6 2371.4 707.1 C2381.5 703.5 2389.1 700.0 2391.6 700.0 C2409.3 700.0 2394.1 852.2 2411.8 852.2 C2414.3 852.2 2421.9 848.2 2432.0 844.2 C2442.1 840.2 2442.1 840.2 2452.2 836.2 C2462.3 832.2 2462.3 832.2 2472.4 828.2 C2482.5 824.2 2482.5 824.2 2492.6 820.2 C2502.7 816.1 2502.7 816.1 2512.8 812.1 C2522.9 808.1 2522.9 808.1 2533.0 804.1 C2543.1 800.1 2543.1 800.1 2553.2 796.1 C2563.3 792.1 2563.3 792.1 2573.4 788.1 C2583.5 784.1 2583.5 784.1 2593.6 780.1 C2603.7 776.1 2603.7 776.1 2613.8 772.1 C2623.9 768.1 2623.9 768.1 2634.0 764.1 C2644.1 760.1 2644.1 760.1 2654.2 756.1 C2664.3 752.1 2664.3 752.1 2674.4 748.1 C2684.5 744.1 2684.5 744.1 2694.6 740.1 C2704.7 736.0 2704.7 736.0 2714.8 732.0 C2724.9 728.0 2724.9 728.0 2735.0 724.0 C2745.1 720.0 2745.1 720.0 2755.2 716.0 C2765.3 712.0 2765.3 712.0 2775.4 708.0 C2785.5 704.0 2793.2 700.0 2795.6 700.0 C2813.4 700.0 2798.3 857.8 2815.8 857.8 C2818.5 857.8 2836.0 844.0 2836.0 844.0 L2836.00 862.00 L1624.00 862.00 Z" fill="#5470c6" fill-opacity="0.20" stroke="none"/>
<path d="M1624.0 820.0 C1624.0 820.0 1634.1 817.0 1644.2 814.0 C1654.3 811.0 1654.3 811.0 1664.4 808.0 C1674.5 805.0 1674.5 805.0 1684.6 802.0 C1694.7 799.0 1694.7 799.0 1704.8 796.0 C1714.9 793.0 1714.9 793.0 1725.0 790.0 C1735.1 787.0 1735.1 787.0 1745.2 784.0 C1755.3 781.0 1755.3 781.0 1765.4 778.0 C1775.5 775.0 1775.5 775.0 1785.6 772.0 C1795.7 769.0 1795.7 769.0 1805.8 766.0 C1815.9 763.0 1822.3 760.0 1826.0 760.0 C1842.5 760.0 1829.7 853.1 1846.2 853.1 C1849.9 853.1 1856.3 850.2 1866.4 847.3 C1876.5 844.4 1876.5 844.4 1886.6 841.5 C1896.7 838.6 1896.7 838.6 1906.8 835.7 C1916.9 832.8 1916.9 832.8 1927.0 829.9 C1937.1 826.9 1937.1 826.9 1947.2 824.0 C1957.3 821.1 1957.3 821.1 1967.4 818.2 C1977.5 815.3 1977.5 815.3 1987.6 812.4 C1997.7 809.5 1997.7 809.5 2007.8 806.6 C2017.9 803.7 2017.9 803.7 2028.0 800.7 C2038.1 797.8 2038.1 797.8 2048.2 794.9 C2058.3 792.0 2058.3 792.0 2068.4 789.1 C2078.5 786.2 2078.5 786.2 2088.6 783.3 C2098.7 780.4 2098.7 780.4 2108.8 777.5 C2118.9 774.6 2118.9 774.6 2129.0 771.6 C2139.1 768.7 2139.1 768.7 2149.2 765.8 C2159.3 762.9 2165.8 760.0 2169.4 760.0 C2186.0 760.0 2173.0 855.6 2189.6 855.6 C2193.2 855.6 2199.7 852.7 2209.8 849.7 C2219.9 846.7 2219.9 846.7 2230.0 843.7 C2240.1 840.7 2240.1 840.7 2250.2 837.7 C2260.3 834.7 2260.3 834.7 2270.4 831.7 C2280.5 828.7 2280.5 828.7 2290.6 825.8 C2300.7 822.8 2300.7 822.8 2310.8 819.8 C2320.9 816.8 2320.9 816.8 2331.0 813.8 C2341.1 810.8 2341.1 810.8 2351.2 807.8 C2361.3 804.8 2361.3 804.8 2371.4 801.8 C2381.5 798.9 2381.5 798.9 2391.6 795.9 C2401.7 792.9 2401.7 792.9 2411.8 789.9 C2421.9 786.9 2421.9 786.9 2432.0 783.9 C2442.1 780.9 2442.1 780.9 2452.2 777.9 C2462.3 774.9 2462.3 774.9 2472.4 772.0 C2482.5 769.0 2482.5 769.0 2492.6 766.0 C2502.7 763.0 2509.2 760.0 2512.8 760.0 C2529.4 760.0 2516.4 856.0 2533.0 856.0 C2536.6 856.0 2543.1 853.0 2553.2 850.0 C2563.3 847.0 2563.3 847.0 2573.4 844.0 C2583.5 841.0 2583.5 841.0 2593.6 838.0 C2603.7 835.0 2603.7 835.0 2613.8 832.0 C2623.9 829.0 2623.9 829.0 2634.0 826.0 C2644.1 823.0 2644.1 823.0 2654.2 820.0 C2664.3 817.0 2664.3 817.0 2674.4 814.0 C2684.5 811.0 2684.5 811.0 2694.6 807.9 C2704.7 804.9 2704.7 804.9 2714.8 801.9 C2724.9 798.9 2724.9 798.9 2735.0 795.9 C2745.1 792.9 2745.1 792.9 2755.2 789.9 C2765.3 786.9 2765.3 786.9 2775.4 783.9 C2785.5 780.9 2785.5 780.9 2795.6 777.9 C2805.7 774.9 2805.7 774.9 2815.8 771.9 C2825.9 768.9 2836.0 765.9 2836.0 765.9 L2836.00 862.00 L1624.00 862.00 Z" fill="#91cc75" fill-opacity="0.20" stroke="none"/>
<path d="M1624.0 780.0 C1624.0 780.0 1634.1 777.8 1644.2 775.5 C1654.3 773.2 1654.3 773.2 1664.4 771.0 C1674.5 768.8 1674.5 768.8 1684.6 766.5 C1694.7 764.2 1694.7 764.2 1704.8 762.0 C1714.9 759.8 1714.9 759.8 1725.0 757.5 C1735.1 755.2 1735.1 755.2 1745.2 753.0 C1755.3 750.8 1755.3 750.8 1765.4 748.5 C1775.5 746.2 1775.5 746.2 1785.6 744.0 C1795.7 741.8 1795.7 741.8 1805.8 739.5 C1815.9 737.2 1815.9 737.2 1826.0 735.0 C1836.1 732.8 1836.1 732.8 1846.2 730.5 C1856.3 728.2 1856.3 728.2 1866.4 726.0 C1876.5 723.8 1876.5 723.8 1886.6 721.5 C1896.7 719.2 1896.7 719.2 1906.8 717.0 C1916.9 714.8 1916.9 714.8 1927.0 712.5 C1937.1 710.2 1937.1 710.2 1947.2 708.0 C1957.3 705.8 1957.3 705.8 1967.4 703.5 C1977.5 701.2 1977.5 701.2 1987.6 699.0 C1997.7 696.8 1997.7 696.8 2007.8 694.5 C2017.9 692.2 2025.7 690.0 2028.0 690.0 C2045.9 690.0 2030.4 852.1 2048.2 852.1 C2050.6 852.1 2058.3 848.0 2068.4 844.0 C2078.5 839.9 2078.5 839.9 2088.6 835.9 C2098.7 831.8 2098.7 831.8 2108.8 827.7 C2118.9 823.7 2118.9 823.7 2129.0 819.6 C2139.1 815.6 2139.1 815.6 2149.2 811.5 C2159.3 807.5 2159.3 807.5 2169.4 803.4 C2179.5 799.4 2179.5 799.4 2189.6 795.3 C2199.7 791.3 2199.7 791.3 2209.8 787.2 C2219.9 783.2 2219.9 783.2 2230.0 779.1 C2240.1 775.1 2240.1 775.1 2250.2 771.0 C2260.3 767.0 2260.3 767.0 2270.4 762.9 C2280.5 758.9 2280.5 758.9 2290.6 754.8 C2300.7 750.8 2300.7 750.8 2310.8 746.7 C2320.9 742.7 2320.9 742.7 2331.0 738.6 C2341.1 734.6 2341.1 734.6 2351.2 730.5 C2361.3 726.5 2361.3 726.5 2371.4 722.4 C2381.5 718.4 2381.5 718.4 2391.6 714.3 C2401.7 710.3 2401.7 710.3 2411.8 706.2 C2421.9 702.2 2421.9 702.2 2432.0 698.1 C2442.1 694.1 2449.8 690.0 2452.2 690.0 C2470.0 690.0 2454.6 848.3 2472.4 848.3 C2474.8 848.3 2482.5 844.4 2492.6 840.4 C2502.7 836.4 2502.7 836.4 2512.8 832.5 C2522.9 828.5 2522.9 828.5 2533.0 824.6 C2543.1 820.6 2543.1 820.6 2553.2 816.6 C2563.3 812.7 2563.3 812.7 2573.4 808.7 C2583.5 804.8 2583.5 804.8 2593.6 800.8 C2603.7 796.9 2603.7 796.9 2613.8 792.9 C2623.9 788.9 2623.9 788.9 2634.0 785.0 C2644.1 781.0 2644.1 781.0 2654.2 777.1 C2664.3 773.1 2664.3 773.1 2674.4 769.1 C2684.5 765.2 2684.5 765.2 2694.6 761.2 C2704.7 757.3 2704.7 757.3 2714.8 753.3 C2724.9 749.3 2724.9 749.3 2735.0 745.4 C2745.1 741.4 2745.1 741.4 2755.2 737.5 C2765.3 733.5 2765.3 733.5 2775.4 729.6 C2785.5 725.6 2785.5 725.6 2795.6 721.6 C2805.7 717.7 2805.7 717.7 2815.8 713.7 C2825.9 709.8 2836.0 705.8 2836.0 705.8 L2836.00 862.00 L1624.00 862.00 Z" fill="#fac858" fill-opacity="0.20" stroke="none"/>
<rect x="1624" y="860.5" width="1212" height="1.5" fill="#ee6666" fill-opacity="0.20"/>
<rect x="1624" y="801.7" width="1212" height="60.3" fill="#73c0de" fill-opacity="0.20"/>
<rect x="1624" y="813.6" width="1212" height="48.4" fill="#3ba272" fill-opacity="0.20"/>
<path d="M1624.0 560.6 C1624.0 560.6 1634.1 560.6 1644.2 560.6 C1654.3 560.6 1654.3 560.6 1664.4 560.6 C1674.5 560.6 1674.5 560.6 1684.6 560.6 C1694.7 560.6 1694.7 560.6 1704.8 560.6 C1714.9 560.6 1714.9 560.6 1725.0 560.6 C1735.1 560.6 1735.1 560.6 1745.2 560.6 C1755.3 560.6 1755.3 560.6 1765.4 560.6 C1775.5 560.6 1775.5 560.6 1785.6 560.6 C1795.7 560.6 1795.7 560.6 1805.8 560.6 C1815.9 560.6 1815.9 560.6 1826.0 560.6 C1836.1 560.6 1836.1 560.6 1846.2 560.6 C1856.3 560.6 1856.3 560.6 1866.4 560.6 C1876.5 560.6 1876.5 560.6 1886.6 560.6 C1896.7 560.6 1896.7 560.6 1906.8 560.6 C1916.9 560.6 1916.9 560.6 1927.0 560.6 C1937.1 560.6 1937.1 560.6 1947.2 560.6 C1957.3 560.6 1957.3 560.6 1967.4 560.6 C1977.5 560.6 1977.5 560.6 1987.6 560.6 C1997.7 560.6 1997.7 560.6 2007.8 560.6 C2017.9 560.6 2017.9 560.6 2028.0 560.6 C2038.1 560.6 2038.1 560.6 2048.2 560.6 C2058.3 560.6 2058.3 560.6 2068.4 560.6 C2078.5 560.6 2078.5 560.6 2088.6 560.6 C2098.7 560.6 2098.7 560.6 2108.8 560.6 C2118.9 560.6 2118.9 560.6 2129.0 560.6 C2139.1 560.6 2139.1 560.6 2149.2 560.6 C2159.3 560.6 2159.3 560.6 2169.4 560.6 C2179.5 560.6 2179.6 560.6 2189.6 560.6 C2199.8 560.6 2199.6 556.6 2209.8 556.6 C2219.8 556.6 2219.9 556.6 2230.0 556.6 C2240.1 556.6 2240.1 556.6 2250.2 556.6 C2260.3 556.6 2260.3 556.6 2270.4 556.6 C2280.5 556.6 2280.5 556.6 2290.6 556.6 C2300.7 556.6 2300.7 556.6 2310.8 556.6 C2320.9 556.6 2320.9 556.6 2331.0 556.6 C2341.1 556.6 2341.1 556.6 2351.2 556.6 C2361.3 556.6 2361.3 556.6 2371.4 556.6 C2381.5 556.6 2381.5 556.6 2391.6 556.6 C2401.7 556.6 2401.7 556.6 2411.8 556.6 C2421.9 556.6 2421.9 556.6 2432.0 556.6 C2442.1 556.6 2442.1 556.6 2452.2 556.6 C2462.3 556.6 2462.3 556.6 2472.4 556.6 C2482.5 556.6 2482.5 556.6 2492.6 556.6 C2502.7 556.6 2502.7 556.6 2512.8 556.6 C2522.9 556.6 2522.9 556.6 2533.0 556.6 C2543.1 556.6 2543.1 556.6 2553.2 556.6 C2563.3 556.6 2563.3 556.6 2573.4 556.6 C2583.5 556.6 2583.5 556.6 2593.6 556.6 C2603.7 556.6 2603.7 556.6 2613.8 556.6 C2623.9 556.6 2623.9 556.6 2634.0 556.6 C2644.1 556.6 2644.1 556.6 2654.2 556.6 C2664.3 556.6 2664.3 556.6 2674.4 556.6 C2684.5 556.6 2684.5 556.6 2694.6 556.6 C2704.7 556.6 2704.7 556.6 2714.8 556.6 C2724.9 556.6 2724.9 556.6 2735.0 556.6 C2745.1 556.6 2745.1 556.6 2755.2 556.6 C2765.3 556.6 2765.3 556.6 2775.4 556.6 C2785.5 556.6 2785.5 556.6 2795.6 556.6 C2805.7 556.6 2805.7 556.6 2815.8 556.6 C2825.9 556.6 2836.0 556.6 2836.0 556.6" fill="none" stroke="#5470c6" stroke-width="2.2" stroke-linejoin="round"/>
<path d="M1624.0 668.0 C1624.0 668.0 1634.1 661.2 1644.2 654.4 C1654.3 647.6 1654.3 647.6 1664.4 640.8 C1674.5 634.0 1674.5 634.0 1684.6 627.2 C1694.7 620.4 1694.7 620.4 1704.8 613.6 C1714.9 606.8 1723.2 600.0 1725.0 600.0 C1743.4 600.0 1726.9 850.7 1745.2 850.7 C1747.1 850.7 1755.3 842.9 1765.4 835.0 C1775.5 827.2 1775.5 827.2 1785.6 819.4 C1795.7 811.5 1795.7 811.5 1805.8 803.7 C1815.9 795.9 1815.9 795.9 1826.0 788.0 C1836.1 780.2 1836.1 780.2 1846.2 772.4 C1856.3 764.5 1856.3 764.5 1866.4 756.7 C1876.5 748.9 1876.5 748.9 1886.6 741.0 C1896.7 733.2 1896.7 733.2 1906.8 725.4 C1916.9 717.5 1916.9 717.5 1927.0 709.7 C1937.1 701.8 1937.1 701.8 1947.2 694.0 C1957.3 686.2 1957.3 686.2 1967.4 678.3 C1977.5 670.5 1977.5 670.5 1987.6 662.7 C1997.7 654.8 1997.7 654.8 2007.8 647.0 C2017.9 639.2 2017.9 639.2 2028.0 631.3 C2038.1 623.5 2038.1 623.5 2048.2 615.7 C2058.3 607.8 2066.6 600.0 2068.4 600.0 C2086.8 600.0 2070.3 853.3 2088.6 853.3 C2090.5 853.3 2098.7 845.4 2108.8 837.5 C2118.9 829.5 2118.9 829.5 2129.0 821.6 C2139.1 813.7 2139.1 813.7 2149.2 805.8 C2159.3 797.9 2159.3 797.9 2169.4 790.0 C2179.5 782.0 2179.5 782.0 2189.6 774.1 C2199.7 766.2 2199.7 766.2 2209.8 758.3 C2219.9 750.4 2219.9 750.4 2230.0 742.5 C2240.1 734.6 2240.1 734.6 2250.2 726.6 C2260.3 718.7 2260.3 718.7 2270.4 710.8 C2280.5 702.9 2280.5 702.9 2290.6 695.0 C2300.7 687.1 2300.7 687.1 2310.8 679.2 C2320.9 671.2 2320.9 671.2 2331.0 663.3 C2341.1 655.4 2341.1 655.4 2351.2 647.5 C2361.3 639.6 2361.3 639.6 2371.4 631.7 C2381.5 623.7 2381.5 623.7 2391.6 615.8 C2401.7 607.9 2409.9 600.0 2411.8 600.0 C2430.1 600.0 2413.7 849.0 2432.0 849.0 C2433.9 849.0 2442.1 841.3 2452.2 833.5 C2462.3 825.7 2462.3 825.7 2472.4 817.9 C2482.5 810.1 2482.5 810.1 2492.6 802.3 C2502.7 794.6 2502.7 794.6 2512.8 786.8 C2522.9 779.0 2522.9 779.0 2533.0 771.2 C2543.1 763.4 2543.1 763.4 2553.2 755.6 C2563.3 747.9 2563.3 747.9 2573.4 740.1 C2583.5 732.3 2583.5 732.3 2593.6 724.5 C2603.7 716.7 2603.7 716.7 2613.8 709.0 C2623.9 701.2 2623.9 701.2 2634.0 693.4 C2644.1 685.6 2644.1 685.6 2654.2 677.8 C2664.3 670.0 2664.3 670.0 2674.4 662.3 C2684.5 654.5 2684.5 654.5 2694.6 646.7 C2704.7 638.9 2704.7 638.9 2714.8 631.1 C2724.9 623.3 2724.9 623.3 2735.0 615.6 C2745.1 607.8 2753.4 600.0 2755.2 600.0 C2773.6 600.0 2757.1 854.9 2775.4 854.9 C2777.3 854.9 2785.5 846.2 2795.6 837.6 C2805.7 829.0 2805.7 829.0 2815.8 820.4 C2825.9 811.7 2836.0 803.1 2836.0 803.1" fill="none" stroke="#91cc75" stroke-width="2.2" stroke-linejoin="round"/>
<path d="M1624.0 628.0 C1624.0 628.0 1626.2 855.1 1644.2 855.1 C1646.4 855.1 1654.3 845.6 1664.4 836.2 C1674.5 826.7 1674.5 826.7 1684.6 817.3 C1694.7 807.8 1694.7 807.8 1704.8 798.3 C1714.9 788.9 1714.9 788.9 1725.0 779.4 C1735.1 769.9 1735.1 769.9 1745.2 760.5 C1755.3 751.0 1755.3 751.0 1765.4 741.6 C1775.5 732.1 1775.5 732.1 1785.6 722.6 C1795.7 713.2 1795.7 713.2 1805.8 703.7 C1815.9 694.2 1815.9 694.2 1826.0 684.8 C1836.1 675.3 1836.1 675.3 1846.2 665.9 C1856.3 656.4 1856.3 656.4 1866.4 646.9 C1876.5 637.5 1884.4 628.0 1886.6 628.0 C1904.6 628.0 1888.8 858.2 1906.8 858.2 C1909.0 858.2 1916.9 848.6 1927.0 839.0 C1937.1 829.4 1937.1 829.4 1947.2 819.8 C1957.3 810.2 1957.3 810.2 1967.4 800.6 C1977.5 791.0 1977.5 791.0 1987.6 781.4 C1997.7 771.9 1997.7 771.9 2007.8 762.3 C2017.9 752.7 2017.9 752.7 2028.0 743.1 C2038.1 733.5 2038.1 733.5 2048.2 723.9 C2058.3 714.3 2058.3 714.3 2068.4 704.7 C2078.5 695.1 2078.5 695.1 2088.6 685.5 C2098.7 676.0 2098.7 676.0 2108.8 666.4 C2118.9 656.8 2118.9 656.8 2129.0 647.2 C2139.1 637.6 2147.0 628.0 2149.2 628.0 C2167.2 628.0 2151.4 853.7 2169.4 853.7 C2171.6 853.7 2179.5 844.3 2189.6 834.8 C2199.7 825.4 2199.7 825.4 2209.8 816.0 C2219.9 806.6 2219.9 806.6 2230.0 797.2 C2240.1 787.8 2240.1 787.8 2250.2 778.4 C2260.3 769.0 2260.3 769.0 2270.4 759.6 C2280.5 750.2 2280.5 750.2 2290.6 740.8 C2300.7 731.4 2300.7 731.4 2310.8 722.0 C2320.9 712.6 2320.9 712.6 2331.0 703.2 C2341.1 693.8 2341.1 693.8 2351.2 684.4 C2361.3 675.0 2361.3 675.0 2371.4 665.6 C2381.5 656.2 2381.5 656.2 2391.6 646.8 C2401.7 637.4 2409.6 628.0 2411.8 628.0 C2429.8 628.0 2414.0 853.5 2432.0 853.5 C2434.2 853.5 2442.1 844.1 2452.2 834.7 C2462.3 825.3 2462.3 825.3 2472.4 815.9 C2482.5 806.5 2482.5 806.5 2492.6 797.1 C2502.7 787.7 2502.7 787.7 2512.8 778.3 C2522.9 768.9 2522.9 768.9 2533.0 759.5 C2543.1 750.1 2543.1 750.1 2553.2 740.7 C2563.3 731.3 2563.3 731.3 2573.4 721.9 C2583.5 712.5 2583.5 712.5 2593.6 703.2 C2603.7 693.8 2603.7 693.8 2613.8 684.4 C2623.9 675.0 2623.9 675.0 2634.0 665.6 C2644.1 656.2 2644.1 656.2 2654.2 646.8 C2664.3 637.4 2672.3 628.0 2674.4 628.0 C2692.5 628.0 2676.6 859.1 2694.6 859.1 C2696.8 859.1 2704.7 849.4 2714.8 839.6 C2724.9 829.9 2724.9 829.9 2735.0 820.1 C2745.1 810.4 2745.1 810.4 2755.2 800.6 C2765.3 790.9 2765.3 790.9 2775.4 781.1 C2785.5 771.3 2785.5 771.3 2795.6 761.6 C2805.7 751.8 2805.7 751.8 2815.8 742.1 C2825.9 732.3 2836.0 722.6 2836.0 722.6" fill="none" stroke="#fac858" stroke-width="2.2" stroke-linejoin="round"/>
<path d="M1624 780.0H2836" stroke="#ee6666" stroke-width="2.2"/>
<path d="M1624 860.5H2836" stroke="#73c0de" stroke-width="2.2"/>
<path d="M1624 608.0H2836" stroke="#3ba272" stroke-width="2.2"/>
<path d="M1624.0 605.0 C1624.0 605.0 1634.1 604.9 1644.2 604.8 C1654.3 604.7 1654.3 604.7 1664.4 604.6 C1674.5 604.5 1674.5 604.5 1684.6 604.4 C1694.7 604.2 1694.7 604.2 1704.8 604.1 C1714.9 604.0 1714.9 604.0 1725.0 603.9 C1735.1 603.8 1735.1 603.8 1745.2 603.7 C1755.3 603.6 1755.3 603.6 1765.4 603.5 C1775.5 603.4 1775.5 603.4 1785.6 603.3 C1795.7 603.2 1795.7 603.2 1805.8 603.0 C1815.9 602.9 1815.9 602.9 1826.0 602.8 C1836.1 602.7 1836.1 602.7 1846.2 602.6 C1856.3 602.5 1856.3 602.5 1866.4 602.4 C1876.5 602.3 1876.5 602.3 1886.6 602.2 C1896.7 602.1 1896.7 602.1 1906.8 602.0 C1916.9 601.9 1916.9 601.9 1927.0 601.8 C1937.1 601.6 1937.1 601.6 1947.2 601.5 C1957.3 601.4 1957.3 601.4 1967.4 601.3 C1977.5 601.2 1977.5 601.2 1987.6 601.1 C1997.7 601.0 1997.7 601.0 2007.8 600.9 C2017.9 600.8 2017.9 600.8 2028.0 600.7 C2038.1 600.6 2038.1 600.6 2048.2 600.5 C2058.3 600.3 2058.3 600.3 2068.4 600.2 C2078.5 600.1 2078.5 600.1 2088.6 600.0 C2098.7 599.9 2098.7 599.9 2108.8 599.8 C2118.9 599.7 2118.9 599.7 2129.0 599.6 C2139.1 599.5 2139.1 599.5 2149.2 599.4 C2159.3 599.3 2159.3 599.3 2169.4 599.1 C2179.5 599.0 2179.5 599.0 2189.6 598.9 C2199.7 598.8 2199.7 598.8 2209.8 598.7 C2219.9 598.6 2219.9 598.6 2230.0 598.5 C2240.1 598.4 2240.1 598.4 2250.2 598.3 C2260.3 598.2 2260.3 598.2 2270.4 598.1 C2280.5 598.0 2280.5 598.0 2290.6 597.9 C2300.7 597.7 2300.7 597.7 2310.8 597.6 C2320.9 597.5 2320.9 597.5 2331.0 597.4 C2341.1 597.3 2341.1 597.3 2351.2 597.2 C2361.3 597.1 2361.3 597.1 2371.4 597.0 C2381.5 596.9 2381.5 596.9 2391.6 596.8 C2401.7 596.7 2401.7 596.7 2411.8 596.5 C2421.9 596.4 2421.9 596.4 2432.0 596.3 C2442.1 596.2 2442.1 596.2 2452.2 596.1 C2462.3 596.0 2462.3 596.0 2472.4 595.9 C2482.5 595.8 2482.5 595.8 2492.6 595.7 C2502.7 595.6 2502.7 595.6 2512.8 595.5 C2522.9 595.4 2522.9 595.4 2533.0 595.2 C2543.1 595.1 2543.1 595.1 2553.2 595.0 C2563.3 594.9 2563.3 594.9 2573.4 594.8 C2583.5 594.7 2583.5 594.7 2593.6 594.6 C2603.7 594.5 2603.7 594.5 2613.8 594.4 C2623.9 594.3 2623.9 594.3 2634.0 594.2 C2644.1 594.1 2644.1 594.1 2654.2 594.0 C2664.3 593.8 2664.3 593.8 2674.4 593.7 C2684.5 593.6 2684.5 593.6 2694.6 593.5 C2704.7 593.4 2704.7 593.4 2714.8 593.3 C2724.9 593.2 2724.9 593.2 2735.0 593.1 C2745.1 593.0 2745.1 593.0 2755.2 592.9 C2765.3 592.8 2765.3 592.8 2775.4 592.6 C2785.5 592.5 2785.5 592.5 2795.6 592.4 C2805.7 592.3 2805.7 592.3 2815.8 592.2 C2825.9 592.1 2836.0 592.0 2836.0 592.0" fill="none" stroke="#fc8452" stroke-width="2.2" stroke-linejoin="round"/>
<path d="M1624.0 729.0 C1624.0 729.0 1634.1 718.2 1644.2 707.3 C1654.3 696.5 1654.3 696.5 1664.4 685.7 C1674.5 674.8 1674.5 674.8 1684.6 664.0 C1694.7 653.2 1694.7 653.2 1704.8 642.3 C1714.9 631.5 1714.9 631.5 1725.0 620.7 C1735.1 609.8 1743.0 599.0 1745.2 599.0 C1763.2 599.0 1747.3 839.0 1765.4 839.0 C1767.5 839.0 1775.5 829.0 1785.6 819.1 C1795.7 809.1 1795.7 809.1 1805.8 799.2 C1815.9 789.2 1815.9 789.2 1826.0 779.3 C1836.1 769.3 1836.1 769.3 1846.2 759.4 C1856.3 749.4 1856.3 749.4 1866.4 739.5 C1876.5 729.5 1876.5 729.5 1886.6 719.6 C1896.7 709.6 1896.7 709.6 1906.8 699.7 C1916.9 689.7 1916.9 689.7 1927.0 679.8 C1937.1 669.8 1937.1 669.8 1947.2 659.9 C1957.3 649.9 1964.9 640.0 1967.4 640.0 C1985.1 640.0 1970.1 838.2 1987.6 838.2 C1990.3 838.2 1997.7 826.6 2007.8 814.9 C2017.9 803.3 2017.9 803.3 2028.0 791.7 C2038.1 780.1 2038.1 780.1 2048.2 768.5 C2058.3 756.9 2058.3 756.9 2068.4 745.3 C2078.5 733.7 2078.5 733.7 2088.6 722.1 C2098.7 710.5 2098.7 710.5 2108.8 698.9 C2118.9 687.3 2118.9 687.3 2129.0 675.6 C2139.1 664.0 2139.1 664.0 2149.2 652.4 C2159.3 640.8 2159.3 640.8 2169.4 629.2 C2179.5 617.6 2187.3 606.0 2189.6 606.0 C2207.5 606.0 2191.9 841.3 2209.8 841.3 C2212.1 841.3 2219.9 830.0 2230.0 818.6 C2240.1 807.3 2240.1 807.3 2250.2 796.0 C2260.3 784.7 2260.3 784.7 2270.4 773.4 C2280.5 762.1 2280.5 762.1 2290.6 750.8 C2300.7 739.5 2300.7 739.5 2310.8 728.1 C2320.9 716.8 2320.9 716.8 2331.0 705.5 C2341.1 694.2 2341.1 694.2 2351.2 682.9 C2361.3 671.6 2361.3 671.6 2371.4 660.3 C2381.5 648.9 2381.5 648.9 2391.6 637.6 C2401.7 626.3 2409.4 615.0 2411.8 615.0 C2429.6 615.0 2414.1 843.6 2432.0 843.6 C2434.3 843.6 2442.1 832.5 2452.2 821.3 C2462.3 810.1 2462.3 810.1 2472.4 798.9 C2482.5 787.7 2482.5 787.7 2492.6 776.5 C2502.7 765.4 2502.7 765.4 2512.8 754.2 C2522.9 743.0 2522.9 743.0 2533.0 731.8 C2543.1 720.6 2543.1 720.6 2553.2 709.5 C2563.3 698.3 2563.3 698.3 2573.4 687.1 C2583.5 675.9 2583.5 675.9 2593.6 664.7 C2603.7 653.5 2603.7 653.5 2613.8 642.4 C2623.9 631.2 2631.5 620.0 2634.0 620.0 C2651.7 620.0 2636.5 837.1 2654.2 837.1 C2656.7 837.1 2664.3 825.2 2674.4 813.3 C2684.5 801.4 2684.5 801.4 2694.6 789.5 C2704.7 777.6 2704.7 777.6 2714.8 765.7 C2724.9 753.8 2724.9 753.8 2735.0 741.9 C2745.1 730.0 2745.1 730.0 2755.2 718.1 C2765.3 706.2 2765.3 706.2 2775.4 694.3 C2785.5 682.4 2785.5 682.4 2795.6 670.5 C2805.7 658.6 2805.7 658.6 2815.8 646.7 C2825.9 634.8 2836.0 622.9 2836.0 622.9" fill="none" stroke="#9a60b4" stroke-width="2.2" stroke-linejoin="round"/>
<path d="M1624.0 805.0 C1624.0 805.0 1634.1 763.8 1644.2 722.5 C1654.3 681.2 1658.7 640.0 1664.4 640.0 C1678.9 640.0 1669.8 854.0 1684.6 854.0 C1690.0 854.0 1694.7 816.3 1704.8 778.7 C1714.9 741.0 1714.9 741.0 1725.0 703.3 C1735.1 665.7 1738.6 628.0 1745.2 628.0 C1758.8 628.0 1750.7 789.0 1765.4 789.0 C1770.9 789.0 1775.5 760.8 1785.6 732.5 C1795.7 704.2 1800.3 676.0 1805.8 676.0 C1820.5 676.0 1812.1 836.0 1826.0 836.0 C1832.3 836.0 1836.1 800.5 1846.2 765.0 C1856.3 729.5 1856.3 729.5 1866.4 694.0 C1876.5 658.5 1881.7 623.0 1886.6 623.0 C1901.9 623.0 1892.0 850.0 1906.8 850.0 C1912.2 850.0 1916.9 810.0 1927.0 770.0 C1937.1 730.0 1937.1 730.0 1947.2 690.0 C1957.3 650.0 1961.3 610.0 1967.4 610.0 C1981.5 610.0 1973.0 800.0 1987.6 800.0 C1993.2 800.0 1997.7 765.0 2007.8 730.0 C2017.9 695.0 2022.5 660.0 2028.0 660.0 C2042.7 660.0 2034.2 852.0 2048.2 852.0 C2054.4 852.0 2058.3 810.0 2068.4 768.0 C2078.5 726.0 2078.5 726.0 2088.6 684.0 C2098.7 642.0 2102.8 600.0 2108.8 600.0 C2123.0 600.0 2113.1 805.0 2129.0 805.0 C2133.3 805.0 2139.1 778.7 2149.2 752.5 C2159.3 726.2 2164.0 700.0 2169.4 700.0 C2184.2 700.0 2175.9 854.0 2189.6 854.0 C2196.1 854.0 2199.7 818.3 2209.8 782.7 C2219.9 747.0 2219.9 747.0 2230.0 711.3 C2240.1 675.7 2243.5 640.0 2250.2 640.0 C2263.7 640.0 2257.4 789.0 2270.4 789.0 C2277.6 789.0 2280.5 748.8 2290.6 708.5 C2300.7 668.2 2305.1 628.0 2310.8 628.0 C2325.3 628.0 2315.1 836.0 2331.0 836.0 C2335.3 836.0 2341.1 809.3 2351.2 782.7 C2361.3 756.0 2361.3 756.0 2371.4 729.3 C2381.5 702.7 2386.6 676.0 2391.6 676.0 C2406.8 676.0 2397.8 850.0 2411.8 850.0 C2418.0 850.0 2421.9 812.2 2432.0 774.3 C2442.1 736.5 2442.1 736.5 2452.2 698.7 C2462.3 660.8 2466.2 623.0 2472.4 623.0 C2486.4 623.0 2479.5 800.0 2492.6 800.0 C2499.7 800.0 2502.7 752.5 2512.8 705.0 C2522.9 657.5 2527.2 610.0 2533.0 610.0 C2547.4 610.0 2537.4 852.0 2553.2 852.0 C2557.6 852.0 2563.3 820.0 2573.4 788.0 C2583.5 756.0 2583.5 756.0 2593.6 724.0 C2603.7 692.0 2607.5 660.0 2613.8 660.0 C2627.7 660.0 2622.2 805.0 2634.0 805.0 C2642.4 805.0 2644.1 753.8 2654.2 702.5 C2664.3 651.2 2668.5 600.0 2674.4 600.0 C2688.7 600.0 2678.0 854.0 2694.6 854.0 C2698.2 854.0 2704.7 828.3 2714.8 802.7 C2724.9 777.0 2724.9 777.0 2735.0 751.3 C2745.1 725.7 2747.6 700.0 2755.2 700.0 C2767.8 700.0 2764.5 789.0 2775.4 789.0 C2784.7 789.0 2785.5 751.8 2795.6 714.5 C2805.7 677.2 2810.1 640.0 2815.8 640.0 C2830.3 640.0 2836.0 836.0 2836.0 836.0" fill="none" stroke="#ea7ccc" stroke-width="2.2" stroke-linejoin="round"/>
<path d="M1624 835.2H2836" stroke="#5470c6" stroke-width="2.2"/>
<path d="M1624 857.0H2836" stroke="#91cc75" stroke-width="2.2"/>
<path d="M1624 683.0H2836" stroke="#fac858" stroke-width="2.2"/>
<path d="M1624 679.7H2836" stroke="#ee6666" stroke-width="2.2"/>
<path d="M1624 320.5H2836" stroke="#73c0de" stroke-width="2.2"/>
<path d="M1624 860.0H2836" stroke="#3ba272" stroke-width="2.2"/>
<path d="M1624 799.0H2836" stroke="#fc8452" stroke-width="2.2"/>
<path d="M1624 812.0H2836" stroke="#9a60b4" stroke-width="2.2"/>
<path d="M1624 589.0H2836" stroke="#ea7ccc" stroke-width="2.2"/>
<path d="M1624 637.5H2836" stroke="#5470c6" stroke-width="2.2"/>
<path d="M1624.0 727.0 C1624.0 727.0 1634.1 720.6 1644.2 714.2 C1654.3 707.8 1654.3 707.8 1664.4 701.3 C1674.5 694.9 1674.5 694.9 1684.6 688.5 C1694.7 682.1 1694.7 682.1 1704.8 675.7 C1714.9 669.2 1714.9 669.2 1725.0 662.8 C1735.1 656.4 1743.0 650.0 1745.2 650.0 C1763.2 650.0 1747.3 849.0 1765.4 849.0 C1767.5 849.0 1775.5 842.8 1785.6 836.6 C1795.7 830.4 1795.7 830.4 1805.8 824.2 C1815.9 817.9 1815.9 817.9 1826.0 811.7 C1836.1 805.5 1836.1 805.5 1846.2 799.3 C1856.3 793.1 1856.3 793.1 1866.4 786.8 C1876.5 780.6 1876.5 780.6 1886.6 774.4 C1896.7 768.2 1896.7 768.2 1906.8 762.0 C1916.9 755.7 1916.9 755.7 1927.0 749.5 C1937.1 743.3 1937.1 743.3 1947.2 737.1 C1957.3 730.9 1957.3 730.9 1967.4 724.6 C1977.5 718.4 1977.5 718.4 1987.6 712.2 C1997.7 706.0 1997.7 706.0 2007.8 699.8 C2017.9 693.5 2017.9 693.5 2028.0 687.3 C2038.1 681.1 2038.1 681.1 2048.2 674.9 C2058.3 668.7 2058.3 668.7 2068.4 662.4 C2078.5 656.2 2086.4 650.0 2088.6 650.0 C2106.6 650.0 2090.8 847.2 2108.8 847.2 C2111.0 847.2 2118.9 841.0 2129.0 834.9 C2139.1 828.7 2139.1 828.7 2149.2 822.5 C2159.3 816.4 2159.3 816.4 2169.4 810.2 C2179.5 804.1 2179.5 804.1 2189.6 797.9 C2199.7 791.7 2199.7 791.7 2209.8 785.6 C2219.9 779.4 2219.9 779.4 2230.0 773.2 C2240.1 767.1 2240.1 767.1 2250.2 760.9 C2260.3 754.8 2260.3 754.8 2270.4 748.6 C2280.5 742.4 2280.5 742.4 2290.6 736.3 C2300.7 730.1 2300.7 730.1 2310.8 723.9 C2320.9 717.8 2320.9 717.8 2331.0 711.6 C2341.1 705.5 2341.1 705.5 2351.2 699.3 C2361.3 693.1 2361.3 693.1 2371.4 687.0 C2381.5 680.8 2381.5 680.8 2391.6 674.6 C2401.7 668.5 2401.7 668.5 2411.8 662.3 C2421.9 656.2 2429.9 650.0 2432.0 650.0 C2450.1 650.0 2434.1 849.3 2452.2 849.3 C2454.3 849.3 2462.3 843.1 2472.4 836.9 C2482.5 830.6 2482.5 830.6 2492.6 824.4 C2502.7 818.2 2502.7 818.2 2512.8 811.9 C2522.9 805.7 2522.9 805.7 2533.0 799.5 C2543.1 793.3 2543.1 793.3 2553.2 787.0 C2563.3 780.8 2563.3 780.8 2573.4 774.6 C2583.5 768.3 2583.5 768.3 2593.6 762.1 C2603.7 755.9 2603.7 755.9 2613.8 749.7 C2623.9 743.4 2623.9 743.4 2634.0 737.2 C2644.1 731.0 2644.1 731.0 2654.2 724.7 C2664.3 718.5 2664.3 718.5 2674.4 712.3 C2684.5 706.1 2684.5 706.1 2694.6 699.8 C2704.7 693.6 2704.7 693.6 2714.8 687.4 C2724.9 681.1 2724.9 681.1 2735.0 674.9 C2745.1 668.7 2745.1 668.7 2755.2 662.5 C2765.3 656.2 2773.3 650.0 2775.4 650.0 C2793.5 650.0 2777.6 852.0 2795.6 852.0 C2797.8 852.0 2805.7 844.4 2815.8 836.7 C2825.9 829.1 2836.0 821.5 2836.0 821.5" fill="none" stroke="#91cc75" stroke-width="2.2" stroke-linejoin="round"/>
<path d="M1624.0 795.0 C1624.0 795.0 1634.1 756.2 1644.2 717.5 C1654.3 678.8 1654.5 640.0 1664.4 640.0 C1674.7 640.0 1674.5 680.0 1684.6 720.0 C1694.7 760.0 1694.6 800.0 1704.8 800.0 C1714.8 800.0 1714.9 760.5 1725.0 721.0 C1735.1 681.5 1734.8 642.0 1745.2 642.0 C1755.0 642.0 1755.3 679.0 1765.4 716.0 C1775.5 753.0 1775.5 790.0 1785.6 790.0 C1795.7 790.0 1795.7 753.2 1805.8 716.5 C1815.9 679.8 1817.3 643.0 1826.0 643.0 C1837.5 643.0 1836.1 692.2 1846.2 741.5 C1856.3 790.8 1854.0 840.0 1866.4 840.0 C1874.2 840.0 1876.5 810.0 1886.6 780.0 C1896.7 750.0 1896.7 750.0 1906.8 720.0 C1916.9 690.0 1917.1 660.0 1927.0 660.0 C1937.3 660.0 1937.1 691.7 1947.2 723.3 C1957.3 755.0 1957.3 755.0 1967.4 786.7 C1977.5 818.3 1980.1 850.0 1987.6 850.0 C2000.3 850.0 1997.7 795.0 2007.8 740.0 C2017.9 685.0 2016.5 630.0 2028.0 630.0 C2036.7 630.0 2038.1 671.2 2048.2 712.5 C2058.3 753.8 2058.0 795.0 2068.4 795.0 C2078.2 795.0 2078.5 756.2 2088.6 717.5 C2098.7 678.8 2098.9 640.0 2108.8 640.0 C2119.1 640.0 2118.9 680.0 2129.0 720.0 C2139.1 760.0 2139.0 800.0 2149.2 800.0 C2159.2 800.0 2159.3 760.5 2169.4 721.0 C2179.5 681.5 2179.2 642.0 2189.6 642.0 C2199.4 642.0 2199.7 679.0 2209.8 716.0 C2219.9 753.0 2218.1 790.0 2230.0 790.0 C2238.3 790.0 2240.1 765.5 2250.2 741.0 C2260.3 716.5 2260.3 716.5 2270.4 692.0 C2280.5 667.5 2281.8 643.0 2290.6 643.0 C2302.0 643.0 2300.7 675.8 2310.8 708.7 C2320.9 741.5 2320.9 741.5 2331.0 774.3 C2341.1 807.2 2342.6 840.0 2351.2 840.0 C2362.8 840.0 2361.3 795.0 2371.4 750.0 C2381.5 705.0 2381.8 660.0 2391.6 660.0 C2402.0 660.0 2401.7 707.5 2411.8 755.0 C2421.9 802.5 2422.6 850.0 2432.0 850.0 C2442.8 850.0 2442.1 795.0 2452.2 740.0 C2462.3 685.0 2460.9 630.0 2472.4 630.0 C2481.1 630.0 2482.5 671.2 2492.6 712.5 C2502.7 753.8 2502.4 795.0 2512.8 795.0 C2522.6 795.0 2522.9 756.2 2533.0 717.5 C2543.1 678.8 2543.3 640.0 2553.2 640.0 C2563.5 640.0 2563.3 680.0 2573.4 720.0 C2583.5 760.0 2581.6 800.0 2593.6 800.0 C2601.8 800.0 2603.7 773.7 2613.8 747.3 C2623.9 721.0 2623.9 721.0 2634.0 694.7 C2644.1 668.3 2643.8 642.0 2654.2 642.0 C2664.0 642.0 2664.3 666.7 2674.4 691.3 C2684.5 716.0 2684.5 716.0 2694.6 740.7 C2704.7 765.3 2706.5 790.0 2714.8 790.0 C2726.7 790.0 2724.9 753.2 2735.0 716.5 C2745.1 679.8 2746.5 643.0 2755.2 643.0 C2766.7 643.0 2765.3 692.2 2775.4 741.5 C2785.5 790.8 2785.1 840.0 2795.6 840.0 C2805.3 840.0 2805.7 795.0 2815.8 750.0 C2825.9 705.0 2836.0 660.0 2836.0 660.0" fill="none" stroke="#fac858" stroke-width="2.2" stroke-linejoin="round"/>
<path d="M1624 838.8H2836" stroke="#ee6666" stroke-width="2.2"/>
<path d="M1624 861.0H2836" stroke="#73c0de" stroke-width="2.2"/>
<path d="M1624 687.7H2836" stroke="#3ba272" stroke-width="2.2"/>
<path d="M1624 716.7H2836" stroke="#fc8452" stroke-width="2.2"/>
<path d="M1624.0 760.0 C1624.0 760.0 1634.1 754.4 1644.2 748.9 C1654.3 743.3 1654.3 743.3 1664.4 737.8 C1674.5 732.2 1674.5 732.2 1684.6 726.7 C1694.7 721.1 1694.7 721.1 1704.8 715.6 C1714.9 710.0 1714.9 710.0 1725.0 704.4 C1735.1 698.9 1735.1 698.9 1745.2 693.3 C1755.3 687.8 1755.3 687.8 1765.4 682.2 C1775.5 676.7 1775.5 676.7 1785.6 671.1 C1795.7 665.6 1803.6 660.0 1805.8 660.0 C1823.8 660.0 1808.5 848.1 1826.0 848.1 C1828.7 848.1 1836.1 837.7 1846.2 827.3 C1856.3 816.9 1856.3 816.9 1866.4 806.5 C1876.5 796.0 1876.5 796.0 1886.6 785.6 C1896.7 775.2 1896.7 775.2 1906.8 764.8 C1916.9 754.4 1916.9 754.4 1927.0 744.0 C1937.1 733.6 1937.1 733.6 1947.2 723.2 C1957.3 712.8 1957.3 712.8 1967.4 702.4 C1977.5 692.0 1977.5 692.0 1987.6 681.6 C1997.7 671.2 1997.7 671.2 2007.8 660.8 C2017.9 650.4 2025.6 640.0 2028.0 640.0 C2045.8 640.0 2030.1 853.5 2048.2 853.5 C2050.3 853.5 2058.3 845.8 2068.4 838.2 C2078.5 830.5 2078.5 830.5 2088.6 822.8 C2098.7 815.1 2098.7 815.1 2108.8 807.5 C2118.9 799.8 2118.9 799.8 2129.0 792.1 C2139.1 784.4 2139.1 784.4 2149.2 776.8 C2159.3 769.1 2159.3 769.1 2169.4 761.4 C2179.5 753.7 2179.5 753.7 2189.6 746.1 C2199.7 738.4 2199.7 738.4 2209.8 730.7 C2219.9 723.0 2219.9 723.0 2230.0 715.4 C2240.1 707.7 2247.3 700.0 2250.2 700.0 C2267.5 700.0 2253.3 850.7 2270.4 850.7 C2273.5 850.7 2280.5 841.6 2290.6 832.4 C2300.7 823.3 2300.7 823.3 2310.8 814.2 C2320.9 805.1 2320.9 805.1 2331.0 796.0 C2341.1 786.8 2341.1 786.8 2351.2 777.7 C2361.3 768.6 2361.3 768.6 2371.4 759.5 C2381.5 750.3 2381.5 750.3 2391.6 741.2 C2401.7 732.1 2401.7 732.1 2411.8 723.0 C2421.9 713.9 2421.9 713.9 2432.0 704.7 C2442.1 695.6 2442.1 695.6 2452.2 686.5 C2462.3 677.4 2462.3 677.4 2472.4 668.2 C2482.5 659.1 2490.2 650.0 2492.6 650.0 C2510.4 650.0 2494.9 853.1 2512.8 853.1 C2515.1 853.1 2522.9 844.4 2533.0 835.8 C2543.1 827.1 2543.1 827.1 2553.2 818.5 C2563.3 809.8 2563.3 809.8 2573.4 801.2 C2583.5 792.5 2583.5 792.5 2593.6 783.9 C2603.7 775.2 2603.7 775.2 2613.8 766.5 C2623.9 757.9 2623.9 757.9 2634.0 749.2 C2644.1 740.6 2644.1 740.6 2654.2 731.9 C2664.3 723.3 2664.3 723.3 2674.4 714.6 C2684.5 706.0 2684.5 706.0 2694.6 697.3 C2704.7 688.7 2712.1 680.0 2714.8 680.0 C2732.3 680.0 2717.6 854.7 2735.0 854.7 C2737.8 854.7 2745.1 844.7 2755.2 834.8 C2765.3 824.8 2765.3 824.8 2775.4 814.8 C2785.5 804.9 2785.5 804.9 2795.6 794.9 C2805.7 784.9 2805.7 784.9 2815.8 774.9 C2825.9 765.0 2836.0 755.0 2836.0 755.0" fill="none" stroke="#9a60b4" stroke-width="2.2" stroke-linejoin="round"/>
<path d="M1624 859.5H2836" stroke="#ea7ccc" stroke-width="2.2"/>
<path d="M1624.0 847.0 C1624.0 847.0 1634.1 848.6 1644.2 848.6 C1654.3 848.6 1654.3 848.6 1664.4 848.6 C1674.5 848.6 1674.5 847.9 1684.6 847.0 C1694.7 846.2 1694.7 845.6 1704.8 845.2 C1714.9 844.8 1714.9 844.8 1725.0 844.8 C1735.1 844.8 1735.1 845.1 1745.2 845.6 C1755.3 846.1 1755.3 846.2 1765.4 846.9 C1775.5 847.6 1775.5 848.4 1785.6 848.5 C1795.7 848.7 1795.7 848.7 1805.8 848.7 C1815.9 848.7 1815.9 847.1 1826.0 846.7 C1836.1 846.4 1836.1 846.7 1846.2 846.4 C1856.3 846.1 1856.3 844.9 1866.4 844.9 C1876.5 844.9 1876.5 845.7 1886.6 846.4 C1896.7 847.0 1896.7 847.0 1906.8 847.6 C1916.9 848.2 1916.9 848.8 1927.0 848.8 C1937.1 848.8 1937.1 848.8 1947.2 848.7 C1957.3 848.5 1957.3 847.4 1967.4 846.6 C1977.5 845.8 1977.5 845.5 1987.6 845.5 C1997.7 845.5 1997.7 846.2 2007.8 846.2 C2017.9 846.2 2017.9 845.7 2028.0 845.7 C2038.1 845.7 2038.1 846.3 2048.2 847.1 C2058.3 847.8 2058.3 848.6 2068.4 848.6 C2078.5 848.6 2078.5 848.6 2088.6 848.3 C2098.7 848.1 2098.7 846.7 2108.8 846.6 C2118.9 846.5 2118.9 846.6 2129.0 846.5 C2139.1 846.4 2139.1 844.8 2149.2 844.8 C2159.3 844.8 2159.3 845.4 2169.4 846.1 C2179.5 846.8 2179.5 846.8 2189.6 847.5 C2199.7 848.1 2199.7 848.7 2209.8 848.7 C2219.9 848.7 2219.9 848.4 2230.0 848.1 C2240.1 847.8 2240.1 847.9 2250.2 847.5 C2260.3 847.0 2260.3 847.1 2270.4 846.5 C2280.5 845.8 2280.5 844.8 2290.6 844.8 C2300.7 844.8 2300.7 845.0 2310.8 845.5 C2320.9 846.1 2320.9 846.2 2331.0 847.0 C2341.1 847.8 2341.1 848.6 2351.2 848.6 C2361.3 848.6 2361.3 847.7 2371.4 847.2 C2381.5 846.8 2381.5 847.0 2391.6 846.8 C2401.7 846.6 2401.7 846.5 2411.8 846.3 C2421.9 846.2 2421.9 846.3 2432.0 846.2 C2442.1 846.1 2442.1 845.5 2452.2 845.5 C2462.3 845.5 2462.3 846.4 2472.4 846.9 C2482.5 847.4 2482.5 847.4 2492.6 847.4 C2502.7 847.4 2502.7 847.4 2512.8 847.4 C2522.9 847.3 2522.9 847.4 2533.0 846.9 C2543.1 846.5 2543.1 845.4 2553.2 845.1 C2563.3 844.8 2563.3 844.8 2573.4 844.8 C2583.5 844.8 2583.5 846.1 2593.6 846.7 C2603.7 847.2 2603.7 847.0 2613.8 847.2 C2623.9 847.4 2623.9 847.2 2634.0 847.4 C2644.1 847.6 2644.1 848.4 2654.2 848.4 C2664.3 848.4 2664.3 847.8 2674.4 847.3 C2684.5 846.8 2684.5 846.7 2694.6 846.5 C2704.7 846.2 2704.7 846.4 2714.8 846.2 C2724.9 846.0 2724.9 845.6 2735.0 845.6 C2745.1 845.6 2745.1 847.2 2755.2 847.3 C2765.3 847.4 2765.3 847.4 2775.4 847.4 C2785.5 847.4 2785.5 847.4 2795.6 847.2 C2805.7 847.1 2805.7 847.0 2815.8 846.4 C2825.9 845.9 2836.0 845.2 2836.0 845.2" fill="none" stroke="#5470c6" stroke-width="2.2" stroke-linejoin="round"/>
<path d="M1624 647.7H2836" stroke="#91cc75" stroke-width="2.2"/>
<path d="M1624 709.4H2836" stroke="#fac858" stroke-width="2.2"/>
<path d="M1624 734.7H2836" stroke="#ee6666" stroke-width="2.2"/>
<path d="M1624.0 789.6 C1624.0 789.6 1634.1 789.7 1644.2 789.7 C1654.3 789.7 1654.3 789.7 1664.4 789.5 C1674.5 789.4 1674.5 789.4 1684.6 789.0 C1694.7 788.6 1694.7 788.6 1704.8 788.0 C1714.9 787.3 1714.9 787.3 1725.0 786.5 C1735.1 785.6 1735.1 785.6 1745.2 784.7 C1755.3 783.8 1755.3 783.7 1765.4 782.8 C1775.5 781.9 1775.5 781.9 1785.6 781.2 C1795.7 780.4 1795.7 780.4 1805.8 779.8 C1815.9 779.3 1815.9 779.3 1826.0 779.0 C1836.1 778.7 1836.1 778.7 1846.2 778.7 C1856.3 778.6 1856.3 778.6 1866.4 778.6 C1876.5 778.6 1876.5 778.7 1886.6 778.8 C1896.7 778.8 1896.7 778.8 1906.8 778.8 C1916.9 778.8 1916.9 778.7 1927.0 778.5 C1937.1 778.2 1937.1 778.2 1947.2 777.7 C1957.3 777.2 1957.3 777.2 1967.4 776.5 C1977.5 775.7 1977.5 775.7 1987.6 774.8 C1997.7 774.0 1997.7 773.9 2007.8 773.0 C2017.9 772.1 2017.9 772.0 2028.0 771.2 C2038.1 770.3 2038.1 770.3 2048.2 769.6 C2058.3 769.0 2058.3 769.0 2068.4 768.5 C2078.5 768.1 2078.5 768.1 2088.6 767.9 C2098.7 767.7 2098.7 767.7 2108.8 767.7 C2118.9 767.7 2118.9 767.8 2129.0 767.8 C2139.1 767.8 2139.1 767.9 2149.2 767.9 C2159.3 767.9 2159.3 767.9 2169.4 767.8 C2179.5 767.7 2179.5 767.7 2189.6 767.3 C2199.7 766.9 2199.7 766.9 2209.8 766.3 C2219.9 765.7 2219.9 765.5 2230.0 764.9 C2240.1 764.3 2240.1 764.4 2250.2 763.9 C2260.3 763.4 2260.3 763.3 2270.4 762.8 C2280.5 762.3 2280.5 762.3 2290.6 761.9 C2300.7 761.5 2300.7 761.4 2310.8 761.3 C2320.9 761.1 2320.9 761.1 2331.0 761.1 C2341.1 761.1 2341.1 761.2 2351.2 761.5 C2361.3 761.8 2361.3 761.8 2371.4 762.2 C2381.5 762.6 2381.5 762.7 2391.6 763.1 C2401.7 763.5 2401.7 763.6 2411.8 763.9 C2421.9 764.2 2421.9 764.4 2432.0 764.4 C2442.1 764.5 2442.1 764.5 2452.2 764.5 C2462.3 764.5 2462.3 764.4 2472.4 764.1 C2482.5 763.8 2482.5 763.7 2492.6 763.2 C2502.7 762.8 2502.7 762.7 2512.8 762.2 C2522.9 761.7 2522.9 761.6 2533.0 761.1 C2543.1 760.7 2543.1 760.6 2553.2 760.3 C2563.3 760.0 2563.3 759.9 2573.4 759.9 C2583.5 759.9 2583.5 759.9 2593.6 760.0 C2603.7 760.1 2603.7 760.2 2613.8 760.5 C2623.9 760.9 2623.9 760.9 2634.0 761.3 C2644.1 761.8 2644.1 761.8 2654.2 762.2 C2664.3 762.6 2664.3 762.7 2674.4 762.9 C2684.5 763.2 2684.5 763.3 2694.6 763.3 C2704.7 763.3 2704.7 763.3 2714.8 763.1 C2724.9 763.0 2724.9 762.9 2735.0 762.5 C2745.1 762.1 2745.1 762.1 2755.2 761.5 C2765.3 761.0 2765.3 761.0 2775.4 760.5 C2785.5 759.9 2785.5 759.9 2795.6 759.5 C2805.7 759.1 2805.7 759.0 2815.8 758.8 C2825.9 758.6 2836.0 758.6 2836.0 758.6" fill="none" stroke="#73c0de" stroke-width="2.2" stroke-linejoin="round"/>
<path d="M1624 861.0H2836" stroke="#3ba272" stroke-width="2.2"/>
<path d="M1624 838.7H2836" stroke="#fc8452" stroke-width="2.2"/>
<path d="M1624 756.9H2836" stroke="#9a60b4" stroke-width="2.2"/>
<path d="M1624 803.0H2836" stroke="#ea7ccc" stroke-width="2.2"/>
<path d="M1624.0 727.0 C1624.0 727.0 1634.1 720.1 1644.2 713.1 C1654.3 706.2 1654.3 706.2 1664.4 699.2 C1674.5 692.3 1674.5 692.3 1684.6 685.3 C1694.7 678.4 1694.7 678.4 1704.8 671.4 C1714.9 664.5 1714.9 664.5 1725.0 657.6 C1735.1 650.6 1735.1 650.6 1745.2 643.7 C1755.3 636.7 1755.3 636.7 1765.4 629.8 C1775.5 622.8 1775.5 622.8 1785.6 615.9 C1795.7 608.9 1804.0 602.0 1805.8 602.0 C1824.2 602.0 1807.6 850.2 1826.0 850.2 C1827.8 850.2 1836.1 843.3 1846.2 836.4 C1856.3 829.5 1856.3 829.5 1866.4 822.6 C1876.5 815.7 1876.5 815.7 1886.6 808.8 C1896.7 801.9 1896.7 801.9 1906.8 795.0 C1916.9 788.1 1916.9 788.1 1927.0 781.2 C1937.1 774.4 1937.1 774.4 1947.2 767.5 C1957.3 760.6 1957.3 760.6 1967.4 753.7 C1977.5 746.8 1977.5 746.8 1987.6 739.9 C1997.7 733.0 1997.7 733.0 2007.8 726.1 C2017.9 719.2 2017.9 719.2 2028.0 712.3 C2038.1 705.4 2038.1 705.4 2048.2 698.5 C2058.3 691.6 2058.3 691.6 2068.4 684.7 C2078.5 677.8 2078.5 677.8 2088.6 670.9 C2098.7 664.0 2098.7 664.0 2108.8 657.2 C2118.9 650.3 2118.9 650.3 2129.0 643.4 C2139.1 636.5 2139.1 636.5 2149.2 629.6 C2159.3 622.7 2159.3 622.7 2169.4 615.8 C2179.5 608.9 2187.8 602.0 2189.6 602.0 C2208.0 602.0 2191.3 853.0 2209.8 853.0 C2211.5 853.0 2219.9 847.3 2230.0 841.6 C2240.1 835.9 2240.1 835.9 2250.2 830.2 C2260.3 824.5 2260.3 824.5 2270.4 818.8 C2280.5 813.1 2280.5 813.1 2290.6 807.4 C2300.7 801.7 2300.7 801.7 2310.8 796.0 C2320.9 790.3 2320.9 790.3 2331.0 784.6 C2341.1 778.9 2341.1 778.9 2351.2 773.2 C2361.3 767.5 2361.3 767.5 2371.4 761.7 C2381.5 756.0 2381.5 756.0 2391.6 750.3 C2401.7 744.6 2401.7 744.6 2411.8 738.9 C2421.9 733.2 2421.9 733.2 2432.0 727.5 C2442.1 721.8 2442.1 721.8 2452.2 716.1 C2462.3 710.4 2462.3 710.4 2472.4 704.7 C2482.5 699.0 2482.5 699.0 2492.6 693.3 C2502.7 687.6 2502.7 687.6 2512.8 681.9 C2522.9 676.2 2522.9 676.2 2533.0 670.5 C2543.1 664.8 2543.1 664.8 2553.2 659.1 C2563.3 653.3 2563.3 653.3 2573.4 647.6 C2583.5 641.9 2583.5 641.9 2593.6 636.2 C2603.7 630.5 2603.7 630.5 2613.8 624.8 C2623.9 619.1 2623.9 619.1 2634.0 613.4 C2644.1 607.7 2652.5 602.0 2654.2 602.0 C2672.7 602.0 2655.9 854.8 2674.4 854.8 C2676.1 854.8 2684.5 848.9 2694.6 842.9 C2704.7 837.0 2704.7 837.0 2714.8 831.1 C2724.9 825.1 2724.9 825.1 2735.0 819.2 C2745.1 813.3 2745.1 813.3 2755.2 807.3 C2765.3 801.4 2765.3 801.4 2775.4 795.4 C2785.5 789.5 2785.5 789.5 2795.6 783.6 C2805.7 777.6 2805.7 777.6 2815.8 771.7 C2825.9 765.8 2836.0 759.8 2836.0 759.8" fill="none" stroke="#5470c6" stroke-width="2.2" stroke-linejoin="round"/>
<path d="M1624.0 800.0 C1624.0 800.0 1634.1 797.1 1644.2 794.3 C1654.3 791.4 1654.3 791.4 1664.4 788.6 C1674.5 785.7 1674.5 785.7 1684.6 782.9 C1694.7 780.0 1694.7 780.0 1704.8 777.1 C1714.9 774.3 1714.9 774.3 1725.0 771.4 C1735.1 768.6 1735.1 768.6 1745.2 765.7 C1755.3 762.9 1755.3 762.9 1765.4 760.0 C1775.5 757.1 1775.5 757.1 1785.6 754.3 C1795.7 751.4 1795.7 751.4 1805.8 748.6 C1815.9 745.7 1815.9 745.7 1826.0 742.9 C1836.1 740.0 1836.1 740.0 1846.2 737.1 C1856.3 734.3 1856.3 734.3 1866.4 731.4 C1876.5 728.6 1876.5 728.6 1886.6 725.7 C1896.7 722.9 1904.0 720.0 1906.8 720.0 C1924.2 720.0 1909.7 849.6 1927.0 849.6 C1929.9 849.6 1937.1 845.6 1947.2 841.5 C1957.3 837.5 1957.3 837.5 1967.4 833.4 C1977.5 829.4 1977.5 829.4 1987.6 825.3 C1997.7 821.3 1997.7 821.3 2007.8 817.2 C2017.9 813.2 2017.9 813.2 2028.0 809.1 C2038.1 805.1 2038.1 805.1 2048.2 801.0 C2058.3 797.0 2058.3 797.0 2068.4 792.9 C2078.5 788.9 2078.5 788.9 2088.6 784.8 C2098.7 780.8 2098.7 780.8 2108.8 776.7 C2118.9 772.7 2118.9 772.7 2129.0 768.6 C2139.1 764.6 2139.1 764.6 2149.2 760.5 C2159.3 756.5 2159.3 756.5 2169.4 752.4 C2179.5 748.4 2179.5 748.4 2189.6 744.3 C2199.7 740.3 2199.7 740.3 2209.8 736.2 C2219.9 732.2 2219.9 732.2 2230.0 728.1 C2240.1 724.1 2247.4 720.0 2250.2 720.0 C2267.6 720.0 2253.0 852.0 2270.4 852.0 C2273.2 852.0 2280.5 847.9 2290.6 843.7 C2300.7 839.6 2300.7 839.6 2310.8 835.5 C2320.9 831.4 2320.9 831.4 2331.0 827.2 C2341.1 823.1 2341.1 823.1 2351.2 819.0 C2361.3 814.9 2361.3 814.9 2371.4 810.7 C2381.5 806.6 2381.5 806.6 2391.6 802.5 C2401.7 798.4 2401.7 798.4 2411.8 794.2 C2421.9 790.1 2421.9 790.1 2432.0 786.0 C2442.1 781.9 2442.1 781.9 2452.2 777.7 C2462.3 773.6 2462.3 773.6 2472.4 769.5 C2482.5 765.4 2482.5 765.4 2492.6 761.2 C2502.7 757.1 2502.7 757.1 2512.8 753.0 C2522.9 748.9 2522.9 748.9 2533.0 744.7 C2543.1 740.6 2543.1 740.6 2553.2 736.5 C2563.3 732.4 2563.3 732.4 2573.4 728.2 C2583.5 724.1 2590.8 720.0 2593.6 720.0 C2611.0 720.0 2596.4 855.5 2613.8 855.5 C2616.6 855.5 2623.9 851.2 2634.0 847.0 C2644.1 842.7 2644.1 842.7 2654.2 838.4 C2664.3 834.1 2664.3 834.1 2674.4 829.8 C2684.5 825.5 2684.5 825.5 2694.6 821.2 C2704.7 817.0 2704.7 817.0 2714.8 812.7 C2724.9 808.4 2724.9 808.4 2735.0 804.1 C2745.1 799.8 2745.1 799.8 2755.2 795.5 C2765.3 791.2 2765.3 791.2 2775.4 787.0 C2785.5 782.7 2785.5 782.7 2795.6 778.4 C2805.7 774.1 2805.7 774.1 2815.8 769.8 C2825.9 765.5 2836.0 761.2 2836.0 761.2" fill="none" stroke="#91cc75" stroke-width="2.2" stroke-linejoin="round"/>
<path d="M1624 859.0H2836" stroke="#fac858" stroke-width="2.2"/>
<path d="M1624 854.9H2836" stroke="#ee6666" stroke-width="2.2"/>
<path d="M1624 586.0H2836" stroke="#73c0de" stroke-width="2.2"/>
<path d="M1624 860.0H2836" stroke="#3ba272" stroke-width="2.2"/>
<path d="M1624 861.0H2836" stroke="#fc8452" stroke-width="2.2"/>
<path d="M1624.0 780.0 C1624.0 780.0 1634.1 776.7 1644.2 773.3 C1654.3 770.0 1654.3 770.0 1664.4 766.7 C1674.5 763.3 1674.5 763.3 1684.6 760.0 C1694.7 756.7 1694.7 756.7 1704.8 753.3 C1714.9 750.0 1714.9 750.0 1725.0 746.7 C1735.1 743.3 1735.1 743.3 1745.2 740.0 C1755.3 736.7 1755.3 736.7 1765.4 733.3 C1775.5 730.0 1775.5 730.0 1785.6 726.7 C1795.7 723.3 1795.7 723.3 1805.8 720.0 C1815.9 716.7 1815.9 716.7 1826.0 713.3 C1836.1 710.0 1836.1 710.0 1846.2 706.7 C1856.3 703.3 1863.9 700.0 1866.4 700.0 C1884.1 700.0 1869.2 849.6 1886.6 849.6 C1889.4 849.6 1896.7 842.8 1906.8 836.0 C1916.9 829.2 1916.9 829.2 1927.0 822.4 C1937.1 815.6 1937.1 815.6 1947.2 808.8 C1957.3 802.0 1957.3 802.0 1967.4 795.2 C1977.5 788.4 1977.5 788.4 1987.6 781.6 C1997.7 774.8 1997.7 774.8 2007.8 768.0 C2017.9 761.2 2017.9 761.2 2028.0 754.4 C2038.1 747.6 2038.1 747.6 2048.2 740.8 C2058.3 734.0 2058.3 734.0 2068.4 727.2 C2078.5 720.4 2078.5 720.4 2088.6 713.6 C2098.7 706.8 2106.0 700.0 2108.8 700.0 C2126.2 700.0 2111.6 852.9 2129.0 852.9 C2131.8 852.9 2139.1 845.9 2149.2 839.0 C2159.3 832.0 2159.3 832.0 2169.4 825.1 C2179.5 818.1 2179.5 818.1 2189.6 811.2 C2199.7 804.2 2199.7 804.2 2209.8 797.3 C2219.9 790.3 2219.9 790.3 2230.0 783.4 C2240.1 776.4 2240.1 776.4 2250.2 769.5 C2260.3 762.5 2260.3 762.5 2270.4 755.6 C2280.5 748.6 2280.5 748.6 2290.6 741.7 C2300.7 734.7 2300.7 734.7 2310.8 727.8 C2320.9 720.8 2320.9 720.8 2331.0 713.9 C2341.1 706.9 2348.3 700.0 2351.2 700.0 C2368.5 700.0 2354.1 847.2 2371.4 847.2 C2374.3 847.2 2381.5 839.8 2391.6 832.5 C2401.7 825.1 2401.7 825.1 2411.8 817.8 C2421.9 810.4 2421.9 810.4 2432.0 803.0 C2442.1 795.7 2442.1 795.7 2452.2 788.3 C2462.3 781.0 2462.3 781.0 2472.4 773.6 C2482.5 766.2 2482.5 766.2 2492.6 758.9 C2502.7 751.5 2502.7 751.5 2512.8 744.2 C2522.9 736.8 2522.9 736.8 2533.0 729.4 C2543.1 722.1 2543.1 722.1 2553.2 714.7 C2563.3 707.4 2570.6 700.0 2573.4 700.0 C2590.8 700.0 2576.2 852.7 2593.6 852.7 C2596.4 852.7 2603.7 845.8 2613.8 838.9 C2623.9 831.9 2623.9 831.9 2634.0 825.0 C2644.1 818.0 2644.1 818.0 2654.2 811.1 C2664.3 804.1 2664.3 804.1 2674.4 797.2 C2684.5 790.3 2684.5 790.3 2694.6 783.3 C2704.7 776.4 2704.7 776.4 2714.8 769.4 C2724.9 762.5 2724.9 762.5 2735.0 755.5 C2745.1 748.6 2745.1 748.6 2755.2 741.7 C2765.3 734.7 2765.3 734.7 2775.4 727.8 C2785.5 720.8 2785.5 720.8 2795.6 713.9 C2805.7 706.9 2813.0 700.0 2815.8 700.0 C2833.2 700.0 2836.0 853.7 2836.0 853.7" fill="none" stroke="#9a60b4" stroke-width="2.2" stroke-linejoin="round"/>
<path d="M1624 825.0H2836" stroke="#ea7ccc" stroke-width="2.2"/>
<path d="M1624 676.7H2836" stroke="#5470c6" stroke-width="2.2"/>
<path d="M1624 695.0H2836" stroke="#91cc75" stroke-width="2.2"/>
<path d="M1624 860.0H2836" stroke="#fac858" stroke-width="2.2"/>
<path d="M1624.0 807.0 C1624.0 807.0 1634.1 771.2 1644.2 735.5 C1654.3 699.8 1658.7 664.0 1664.4 664.0 C1678.9 664.0 1669.1 851.0 1684.6 851.0 C1689.3 851.0 1694.7 824.0 1704.8 797.0 C1714.9 770.0 1714.9 770.0 1725.0 743.0 C1735.1 716.0 1736.9 689.0 1745.2 689.0 C1757.1 689.0 1755.2 769.0 1765.4 769.0 C1775.4 769.0 1775.5 729.8 1785.6 690.5 C1795.7 651.2 1800.7 612.0 1805.8 612.0 C1820.9 612.0 1810.8 852.0 1826.0 852.0 C1831.0 852.0 1836.1 813.5 1846.2 775.0 C1856.3 736.5 1857.6 698.0 1866.4 698.0 C1877.8 698.0 1872.9 800.0 1886.6 800.0 C1893.1 800.0 1896.7 777.3 1906.8 754.7 C1916.9 732.0 1916.9 732.0 1927.0 709.3 C1937.1 686.7 1942.6 664.0 1947.2 664.0 C1962.8 664.0 1953.0 830.0 1967.4 830.0 C1973.2 830.0 1977.5 797.5 1987.6 765.0 C1997.7 732.5 2000.0 700.0 2007.8 700.0 C2020.2 700.0 2014.9 807.0 2028.0 807.0 C2035.1 807.0 2038.1 779.2 2048.2 751.3 C2058.3 723.5 2058.3 723.5 2068.4 695.7 C2078.5 667.8 2084.2 640.0 2088.6 640.0 C2104.4 640.0 2094.9 851.0 2108.8 851.0 C2115.1 851.0 2118.9 804.2 2129.0 757.5 C2139.1 710.8 2139.7 664.0 2149.2 664.0 C2159.9 664.0 2155.2 769.0 2169.4 769.0 C2175.4 769.0 2179.5 749.0 2189.6 729.0 C2199.7 709.0 2205.5 689.0 2209.8 689.0 C2225.7 689.0 2216.6 852.0 2230.0 852.0 C2236.8 852.0 2240.1 812.0 2250.2 772.0 C2260.3 732.0 2260.3 732.0 2270.4 692.0 C2280.5 652.0 2284.5 612.0 2290.6 612.0 C2304.7 612.0 2295.1 800.0 2310.8 800.0 C2315.3 800.0 2320.9 774.5 2331.0 749.0 C2341.1 723.5 2345.3 698.0 2351.2 698.0 C2365.5 698.0 2357.4 830.0 2371.4 830.0 C2377.6 830.0 2381.5 802.3 2391.6 774.7 C2401.7 747.0 2401.7 747.0 2411.8 719.3 C2421.9 691.7 2426.1 664.0 2432.0 664.0 C2446.3 664.0 2437.7 807.0 2452.2 807.0 C2457.9 807.0 2462.3 780.3 2472.4 753.5 C2482.5 726.8 2487.1 700.0 2492.6 700.0 C2507.3 700.0 2501.0 851.0 2512.8 851.0 C2521.2 851.0 2522.9 798.2 2533.0 745.5 C2543.1 692.8 2544.1 640.0 2553.2 640.0 C2564.3 640.0 2558.0 769.0 2573.4 769.0 C2578.2 769.0 2583.5 751.5 2593.6 734.0 C2603.7 716.5 2603.7 716.5 2613.8 699.0 C2623.9 681.5 2630.4 664.0 2634.0 664.0 C2650.6 664.0 2640.2 852.0 2654.2 852.0 C2660.4 852.0 2664.3 811.2 2674.4 770.5 C2684.5 729.8 2686.0 689.0 2694.6 689.0 C2706.2 689.0 2702.0 800.0 2714.8 800.0 C2722.2 800.0 2724.9 768.7 2735.0 737.3 C2745.1 706.0 2745.1 706.0 2755.2 674.7 C2765.3 643.3 2770.7 612.0 2775.4 612.0 C2790.9 612.0 2780.2 830.0 2795.6 830.0 C2800.4 830.0 2805.7 797.0 2815.8 764.0 C2825.9 731.0 2836.0 698.0 2836.0 698.0" fill="none" stroke="#ee6666" stroke-width="2.2" stroke-linejoin="round"/>
<path d="M1624 830.8H2836" stroke="#73c0de" stroke-width="2.2"/>
<path d="M1624 788.5H2836" stroke="#3ba272" stroke-width="2.2"/>
<path d="M1624 861.0H2836" stroke="#fc8452" stroke-width="2.2"/>
<path d="M1624 663.9H2836" stroke="#9a60b4" stroke-width="2.2"/>
<path d="M1624 858.8H2836" stroke="#ea7ccc" stroke-width="2.2"/>
<path d="M1624.0 840.0 C1624.0 840.0 1634.1 835.3 1644.2 830.7 C1654.3 826.0 1654.3 826.0 1664.4 821.3 C1674.5 816.7 1674.5 816.7 1684.6 812.0 C1694.7 807.3 1694.7 807.3 1704.8 802.7 C1714.9 798.0 1714.9 798.0 1725.0 793.3 C1735.1 788.7 1735.1 788.7 1745.2 784.0 C1755.3 779.3 1755.3 779.3 1765.4 774.7 C1775.5 770.0 1775.5 770.0 1785.6 765.3 C1795.7 760.7 1795.7 760.7 1805.8 756.0 C1815.9 751.3 1815.9 751.3 1826.0 746.7 C1836.1 742.0 1836.1 742.0 1846.2 737.3 C1856.3 732.7 1856.3 732.7 1866.4 728.0 C1876.5 723.3 1876.5 723.3 1886.6 718.7 C1896.7 714.0 1896.7 714.0 1906.8 709.3 C1916.9 704.7 1924.5 700.0 1927.0 700.0 C1944.7 700.0 1929.4 855.5 1947.2 855.5 C1949.6 855.5 1957.3 852.0 1967.4 848.5 C1977.5 844.9 1977.5 844.9 1987.6 841.4 C1997.7 837.8 1997.7 837.8 2007.8 834.3 C2017.9 830.8 2017.9 830.8 2028.0 827.2 C2038.1 823.7 2038.1 823.7 2048.2 820.2 C2058.3 816.6 2058.3 816.6 2068.4 813.1 C2078.5 809.6 2078.5 809.6 2088.6 806.0 C2098.7 802.5 2098.7 802.5 2108.8 799.0 C2118.9 795.4 2118.9 795.4 2129.0 791.9 C2139.1 788.4 2139.1 788.4 2149.2 784.8 C2159.3 781.3 2159.3 781.3 2169.4 777.8 C2179.5 774.2 2179.5 774.2 2189.6 770.7 C2199.7 767.2 2199.7 767.2 2209.8 763.6 C2219.9 760.1 2219.9 760.1 2230.0 756.6 C2240.1 753.0 2240.1 753.0 2250.2 749.5 C2260.3 745.9 2260.3 745.9 2270.4 742.4 C2280.5 738.9 2280.5 738.9 2290.6 735.3 C2300.7 731.8 2300.7 731.8 2310.8 728.3 C2320.9 724.7 2320.9 724.7 2331.0 721.2 C2341.1 717.7 2341.1 717.7 2351.2 714.1 C2361.3 710.6 2361.3 710.6 2371.4 707.1 C2381.5 703.5 2389.1 700.0 2391.6 700.0 C2409.3 700.0 2394.1 852.2 2411.8 852.2 C2414.3 852.2 2421.9 848.2 2432.0 844.2 C2442.1 840.2 2442.1 840.2 2452.2 836.2 C2462.3 832.2 2462.3 832.2 2472.4 828.2 C2482.5 824.2 2482.5 824.2 2492.6 820.2 C2502.7 816.1 2502.7 816.1 2512.8 812.1 C2522.9 808.1 2522.9 808.1 2533.0 804.1 C2543.1 800.1 2543.1 800.1 2553.2 796.1 C2563.3 792.1 2563.3 792.1 2573.4 788.1 C2583.5 784.1 2583.5 784.1 2593.6 780.1 C2603.7 776.1 2603.7 776.1 2613.8 772.1 C2623.9 768.1 2623.9 768.1 2634.0 764.1 C2644.1 760.1 2644.1 760.1 2654.2 756.1 C2664.3 752.1 2664.3 752.1 2674.4 748.1 C2684.5 744.1 2684.5 744.1 2694.6 740.1 C2704.7 736.0 2704.7 736.0 2714.8 732.0 C2724.9 728.0 2724.9 728.0 2735.0 724.0 C2745.1 720.0 2745.1 720.0 2755.2 716.0 C2765.3 712.0 2765.3 712.0 2775.4 708.0 C2785.5 704.0 2793.2 700.0 2795.6 700.0 C2813.4 700.0 2798.3 857.8 2815.8 857.8 C2818.5 857.8 2836.0 844.0 2836.0 844.0" fill="none" stroke="#5470c6" stroke-width="2.2" stroke-linejoin="round"/>
<path d="M1624.0 820.0 C1624.0 820.0 1634.1 817.0 1644.2 814.0 C1654.3 811.0 1654.3 811.0 1664.4 808.0 C1674.5 805.0 1674.5 805.0 1684.6 802.0 C1694.7 799.0 1694.7 799.0 1704.8 796.0 C1714.9 793.0 1714.9 793.0 1725.0 790.0 C1735.1 787.0 1735.1 787.0 1745.2 784.0 C1755.3 781.0 1755.3 781.0 1765.4 778.0 C1775.5 775.0 1775.5 775.0 1785.6 772.0 C1795.7 769.0 1795.7 769.0 1805.8 766.0 C1815.9 763.0 1822.3 760.0 1826.0 760.0 C1842.5 760.0 1829.7 853.1 1846.2 853.1 C1849.9 853.1 1856.3 850.2 1866.4 847.3 C1876.5 844.4 1876.5 844.4 1886.6 841.5 C1896.7 838.6 1896.7 838.6 1906.8 835.7 C1916.9 832.8 1916.9 832.8 1927.0 829.9 C1937.1 826.9 1937.1 826.9 1947.2 824.0 C1957.3 821.1 1957.3 821.1 1967.4 818.2 C1977.5 815.3 1977.5 815.3 1987.6 812.4 C1997.7 809.5 1997.7 809.5 2007.8 806.6 C2017.9 803.7 2017.9 803.7 2028.0 800.7 C2038.1 797.8 2038.1 797.8 2048.2 794.9 C2058.3 792.0 2058.3 792.0 2068.4 789.1 C2078.5 786.2 2078.5 786.2 2088.6 783.3 C2098.7 780.4 2098.7 780.4 2108.8 777.5 C2118.9 774.6 2118.9 774.6 2129.0 771.6 C2139.1 768.7 2139.1 768.7 2149.2 765.8 C2159.3 762.9 2165.8 760.0 2169.4 760.0 C2186.0 760.0 2173.0 855.6 2189.6 855.6 C2193.2 855.6 2199.7 852.7 2209.8 849.7 C2219.9 846.7 2219.9 846.7 2230.0 843.7 C2240.1 840.7 2240.1 840.7 2250.2 837.7 C2260.3 834.7 2260.3 834.7 2270.4 831.7 C2280.5 828.7 2280.5 828.7 2290.6 825.8 C2300.7 822.8 2300.7 822.8 2310.8 819.8 C2320.9 816.8 2320.9 816.8 2331.0 813.8 C2341.1 810.8 2341.1 810.8 2351.2 807.8 C2361.3 804.8 2361.3 804.8 2371.4 801.8 C2381.5 798.9 2381.5 798.9 2391.6 795.9 C2401.7 792.9 2401.7 792.9 2411.8 789.9 C2421.9 786.9 2421.9 786.9 2432.0 783.9 C2442.1 780.9 2442.1 780.9 2452.2 777.9 C2462.3 774.9 2462.3 774.9 2472.4 772.0 C2482.5 769.0 2482.5 769.0 2492.6 766.0 C2502.7 763.0 2509.2 760.0 2512.8 760.0 C2529.4 760.0 2516.4 856.0 2533.0 856.0 C2536.6 856.0 2543.1 853.0 2553.2 850.0 C2563.3 847.0 2563.3 847.0 2573.4 844.0 C2583.5 841.0 2583.5 841.0 2593.6 838.0 C2603.7 835.0 2603.7 835.0 2613.8 832.0 C2623.9 829.0 2623.9 829.0 2634.0 826.0 C2644.1 823.0 2644.1 823.0 2654.2 820.0 C2664.3 817.0 2664.3 817.0 2674.4 814.0 C2684.5 811.0 2684.5 811.0 2694.6 807.9 C2704.7 804.9 2704.7 804.9 2714.8 801.9 C2724.9 798.9 2724.9 798.9 2735.0 795.9 C2745.1 792.9 2745.1 792.9 2755.2 789.9 C2765.3 786.9 2765.3 786.9 2775.4 783.9 C2785.5 780.9 2785.5 780.9 2795.6 777.9 C2805.7 774.9 2805.7 774.9 2815.8 771.9 C2825.9 768.9 2836.0 765.9 2836.0 765.9" fill="none" stroke="#91cc75" stroke-width="2.2" stroke-linejoin="round"/>
<path d="M1624.0 780.0 C1624.0 780.0 1634.1 777.8 1644.2 775.5 C1654.3 773.2 1654.3 773.2 1664.4 771.0 C1674.5 768.8 1674.5 768.8 1684.6 766.5 C1694.7 764.2 1694.7 764.2 1704.8 762.0 C1714.9 759.8 1714.9 759.8 1725.0 757.5 C1735.1 755.2 1735.1 755.2 1745.2 753.0 C1755.3 750.8 1755.3 750.8 1765.4 748.5 C1775.5 746.2 1775.5 746.2 1785.6 744.0 C1795.7 741.8 1795.7 741.8 1805.8 739.5 C1815.9 737.2 1815.9 737.2 1826.0 735.0 C1836.1 732.8 1836.1 732.8 1846.2 730.5 C1856.3 728.2 1856.3 728.2 1866.4 726.0 C1876.5 723.8 1876.5 723.8 1886.6 721.5 C1896.7 719.2 1896.7 719.2 1906.8 717.0 C1916.9 714.8 1916.9 714.8 1927.0 712.5 C1937.1 710.2 1937.1 710.2 1947.2 708.0 C1957.3 705.8 1957.3 705.8 1967.4 703.5 C1977.5 701.2 1977.5 701.2 1987.6 699.0 C1997.7 696.8 1997.7 696.8 2007.8 694.5 C2017.9 692.2 2025.7 690.0 2028.0 690.0 C2045.9 690.0 2030.4 852.1 2048.2 852.1 C2050.6 852.1 2058.3 848.0 2068.4 844.0 C2078.5 839.9 2078.5 839.9 2088.6 835.9 C2098.7 831.8 2098.7 831.8 2108.8 827.7 C2118.9 823.7 2118.9 823.7 2129.0 819.6 C2139.1 815.6 2139.1 815.6 2149.2 811.5 C2159.3 807.5 2159.3 807.5 2169.4 803.4 C2179.5 799.4 2179.5 799.4 2189.6 795.3 C2199.7 791.3 2199.7 791.3 2209.8 787.2 C2219.9 783.2 2219.9 783.2 2230.0 779.1 C2240.1 775.1 2240.1 775.1 2250.2 771.0 C2260.3 767.0 2260.3 767.0 2270.4 762.9 C2280.5 758.9 2280.5 758.9 2290.6 754.8 C2300.7 750.8 2300.7 750.8 2310.8 746.7 C2320.9 742.7 2320.9 742.7 2331.0 738.6 C2341.1 734.6 2341.1 734.6 2351.2 730.5 C2361.3 726.5 2361.3 726.5 2371.4 722.4 C2381.5 718.4 2381.5 718.4 2391.6 714.3 C2401.7 710.3 2401.7 710.3 2411.8 706.2 C2421.9 702.2 2421.9 702.2 2432.0 698.1 C2442.1 694.1 2449.8 690.0 2452.2 690.0 C2470.0 690.0 2454.6 848.3 2472.4 848.3 C2474.8 848.3 2482.5 844.4 2492.6 840.4 C2502.7 836.4 2502.7 836.4 2512.8 832.5 C2522.9 828.5 2522.9 828.5 2533.0 824.6 C2543.1 820.6 2543.1 820.6 2553.2 816.6 C2563.3 812.7 2563.3 812.7 2573.4 808.7 C2583.5 804.8 2583.5 804.8 2593.6 800.8 C2603.7 796.9 2603.7 796.9 2613.8 792.9 C2623.9 788.9 2623.9 788.9 2634.0 785.0 C2644.1 781.0 2644.1 781.0 2654.2 777.1 C2664.3 773.1 2664.3 773.1 2674.4 769.1 C2684.5 765.2 2684.5 765.2 2694.6 761.2 C2704.7 757.3 2704.7 757.3 2714.8 753.3 C2724.9 749.3 2724.9 749.3 2735.0 745.4 C2745.1 741.4 2745.1 741.4 2755.2 737.5 C2765.3 733.5 2765.3 733.5 2775.4 729.6 C2785.5 725.6 2785.5 725.6 2795.6 721.6 C2805.7 717.7 2805.7 717.7 2815.8 713.7 C2825.9 709.8 2836.0 705.8 2836.0 705.8" fill="none" stroke="#fac858" stroke-width="2.2" stroke-linejoin="round"/>
<path d="M1624 860.5H2836" stroke="#ee6666" stroke-width="2.2"/>
<path d="M1624 801.7H2836" stroke="#73c0de" stroke-width="2.2"/>
<path d="M1624 813.6H2836" stroke="#3ba272" stroke-width="2.2"/></g>
<line x1="1624" y1="862.0" x2="2836" y2="862.0" stroke="#6e7079" stroke-width="2"/>
<line x1="1680.0" y1="862.0" x2="1680.0" y2="871.0" stroke="#6e7079" stroke-width="2"/>
<line x1="1781.0" y1="862.0" x2="1781.0" y2="871.0" stroke="#6e7079" stroke-width="2"/>
<line x1="1882.0" y1="862.0" x2="1882.0" y2="871.0" stroke="#6e7079" stroke-width="2"/>
<line x1="1983.0" y1="862.0" x2="1983.0" y2="871.0" stroke="#6e7079" stroke-width="2"/>
<line x1="2084.0" y1="862.0" x2="2084.0" y2="871.0" stroke="#6e7079" stroke-width="2"/>
<line x1="2185.0" y1="862.0" x2="2185.0" y2="871.0" stroke="#6e7079" stroke-width="2"/>
<line x1="2286.0" y1="862.0" x2="2286.0" y2="871.0" stroke="#6e7079" stroke-width="2"/>
<line x1="2387.0" y1="862.0" x2="2387.0" y2="871.0" stroke="#6e7079" stroke-width="2"/>
<line x1="2488.0" y1="862.0" x2="2488.0" y2="871.0" stroke="#6e7079" stroke-width="2"/>
<line x1="2589.0" y1="862.0" x2="2589.0" y2="871.0" stroke="#6e7079" stroke-width="2"/>
<line x1="2690.0" y1="862.0" x2="2690.0" y2="871.0" stroke="#6e7079" stroke-width="2"/>
<line x1="2791.0" y1="862.0" x2="2791.0" y2="871.0" stroke="#6e7079" stroke-width="2"/>
<line x1="111" y1="1602.0" x2="1405" y2="1602.0" stroke="#e0e6f1" stroke-width="2"/>
<line x1="111" y1="1510.3" x2="1405" y2="1510.3" stroke="#e0e6f1" stroke-width="2"/>
<line x1="111" y1="1418.6" x2="1405" y2="1418.6" stroke="#e0e6f1" stroke-width="2"/>
<line x1="111" y1="1326.9" x2="1405" y2="1326.9" stroke="#e0e6f1" stroke-width="2"/>
<line x1="111" y1="1235.2" x2="1405" y2="1235.2" stroke="#e0e6f1" stroke-width="2"/>
<line x1="111" y1="1143.5" x2="1405" y2="1143.5" stroke="#e0e6f1" stroke-width="2"/>
<g clip-path="url(#cp3)"><path d="M111.0 1372.8 C111.0 1372.8 121.8 1372.8 132.6 1372.8 C143.3 1372.8 143.3 1372.8 154.1 1372.8 C164.9 1372.8 164.9 1372.8 175.7 1372.8 C186.5 1372.8 186.5 1372.8 197.3 1372.8 C208.0 1372.8 208.0 1372.8 218.8 1372.8 C229.6 1372.8 229.6 1372.8 240.4 1372.8 C251.2 1372.8 251.2 1372.8 262.0 1372.8 C272.8 1372.8 272.8 1372.8 283.5 1372.8 C294.3 1372.8 294.3 1372.8 305.1 1372.8 C315.9 1372.8 315.9 1372.8 326.7 1372.8 C337.4 1372.8 337.5 1372.8 348.2 1372.8 C359.0 1372.8 359.0 1372.8 369.8 1372.8 C380.6 1372.8 380.6 1372.8 391.4 1372.8 C402.1 1372.8 402.1 1372.8 412.9 1372.8 C423.7 1372.8 423.7 1372.8 434.5 1372.8 C445.3 1372.8 445.3 1372.8 456.1 1372.8 C466.9 1372.8 466.9 1372.8 477.6 1372.8 C488.4 1372.8 488.4 1372.8 499.2 1372.8 C510.0 1372.8 510.0 1372.8 520.8 1372.8 C531.5 1372.8 531.5 1372.8 542.3 1372.8 C553.1 1372.8 553.1 1372.8 563.9 1372.8 C574.7 1372.8 574.7 1372.8 585.5 1372.8 C596.2 1372.8 596.2 1372.8 607.0 1372.8 C617.8 1372.8 617.8 1372.8 628.6 1372.8 C639.4 1372.8 639.4 1372.8 650.2 1372.8 C661.0 1372.8 661.0 1372.8 671.7 1372.8 C682.5 1372.8 682.5 1372.8 693.3 1372.8 C704.1 1372.8 704.1 1372.8 714.9 1372.8 C725.7 1372.8 725.6 1372.8 736.4 1372.8 C747.2 1372.8 747.2 1372.8 758.0 1372.8 C768.8 1372.8 768.8 1372.8 779.6 1372.8 C790.4 1372.8 790.3 1372.8 801.1 1372.8 C811.9 1372.8 811.9 1372.8 822.7 1372.8 C833.5 1372.8 833.5 1372.8 844.3 1372.8 C855.0 1372.8 855.0 1372.8 865.8 1372.8 C876.6 1372.8 876.6 1372.8 887.4 1372.8 C898.2 1372.8 898.2 1372.8 909.0 1372.8 C919.8 1372.8 919.8 1372.8 930.5 1372.8 C941.3 1372.8 941.3 1372.8 952.1 1372.8 C962.9 1372.8 962.9 1372.8 973.7 1372.8 C984.5 1372.8 984.5 1372.8 995.2 1372.8 C1006.0 1372.8 1006.0 1372.8 1016.8 1372.8 C1027.6 1372.8 1027.6 1372.8 1038.4 1372.8 C1049.2 1372.8 1049.2 1372.8 1059.9 1372.8 C1070.7 1372.8 1070.7 1372.8 1081.5 1372.8 C1092.3 1372.8 1092.3 1372.8 1103.1 1372.8 C1113.8 1372.8 1113.8 1372.8 1124.6 1372.8 C1135.4 1372.8 1135.4 1372.8 1146.2 1372.8 C1157.0 1372.8 1157.0 1372.8 1167.8 1372.8 C1178.5 1372.8 1178.5 1372.8 1189.3 1372.8 C1200.1 1372.8 1200.1 1372.8 1210.9 1372.8 C1221.7 1372.8 1221.7 1372.8 1232.5 1372.8 C1243.2 1372.8 1243.2 1372.8 1254.0 1372.8 C1264.8 1372.8 1266.3 1372.8 1275.6 1372.8 C1287.8 1372.8 1286.4 1354.4 1297.2 1354.4 C1308.0 1354.4 1306.5 1372.8 1318.7 1372.8 C1328.1 1372.8 1329.5 1372.8 1340.3 1372.8 C1351.1 1372.8 1351.1 1372.8 1361.9 1372.8 C1372.7 1372.8 1374.1 1372.8 1383.4 1372.8 C1395.7 1372.8 1405.0 1354.4 1405.0 1354.4 L1405.00 1693.70 L111.00 1693.70 Z" fill="#5470c6" fill-opacity="0.20" stroke="none"/>
<rect x="111" y="1381.9" width="1294" height="311.8" fill="#91cc75" fill-opacity="0.20"/>
<rect x="111" y="1345.2" width="1294" height="348.5" fill="#fac858" fill-opacity="0.20"/>
<path d="M111.0 1299.4 C111.0 1299.4 126.8 1299.4 132.6 1299.4 C148.4 1299.4 141.6 1244.4 154.1 1244.4 C163.2 1244.4 161.4 1281.1 175.7 1281.1 C183.0 1281.1 187.9 1281.1 197.3 1281.1 C209.5 1281.1 206.6 1299.4 218.8 1299.4 C228.2 1299.4 234.0 1299.4 240.4 1299.4 C255.5 1299.4 249.2 1253.5 262.0 1253.5 C270.8 1253.5 270.2 1281.1 283.5 1281.1 C291.8 1281.1 295.8 1281.1 305.1 1281.1 C317.3 1281.1 314.4 1299.4 326.7 1299.4 C336.0 1299.4 341.0 1299.4 348.2 1299.4 C362.5 1299.4 356.8 1262.7 369.8 1262.7 C378.4 1262.7 380.6 1281.1 391.4 1281.1 C402.1 1281.1 402.1 1262.7 412.9 1262.7 C423.7 1262.7 422.3 1281.1 434.5 1281.1 C443.8 1281.1 447.8 1281.1 456.1 1281.1 C469.4 1281.1 466.9 1253.5 477.6 1253.5 C488.4 1253.5 485.9 1281.1 499.2 1281.1 C507.4 1281.1 511.4 1281.1 520.8 1281.1 C533.0 1281.1 530.1 1299.4 542.3 1299.4 C551.7 1299.4 559.2 1299.4 563.9 1299.4 C580.7 1299.4 573.3 1226.0 585.5 1226.0 C594.9 1226.0 591.2 1281.1 607.0 1281.1 C612.8 1281.1 619.3 1281.1 628.6 1281.1 C640.8 1281.1 637.9 1299.4 650.2 1299.4 C659.5 1299.4 666.0 1299.4 671.7 1299.4 C687.5 1299.4 680.8 1244.4 693.3 1244.4 C702.3 1244.4 701.9 1281.1 714.9 1281.1 C723.5 1281.1 727.8 1273.7 736.4 1262.7 C749.4 1246.2 744.1 1226.0 758.0 1226.0 C765.7 1226.0 769.8 1229.0 779.6 1235.2 C791.4 1242.7 789.3 1253.5 801.1 1253.5 C810.9 1253.5 811.5 1244.4 822.7 1244.4 C833.0 1244.4 836.0 1244.4 844.3 1244.4 C857.6 1244.4 856.1 1271.9 865.8 1271.9 C877.7 1271.9 874.4 1235.2 887.4 1235.2 C896.0 1235.2 896.7 1253.5 909.0 1253.5 C918.3 1253.5 920.2 1253.5 930.5 1253.5 C941.8 1253.5 943.4 1255.3 952.1 1262.7 C965.0 1273.7 966.3 1290.2 973.7 1290.2 C987.9 1290.2 980.0 1226.0 995.2 1226.0 C1001.6 1226.0 1004.6 1244.4 1016.8 1244.4 C1026.1 1244.4 1028.0 1244.4 1038.4 1244.4 C1049.6 1244.4 1048.7 1253.5 1059.9 1253.5 C1070.3 1253.5 1071.2 1253.5 1081.5 1253.5 C1092.7 1253.5 1093.3 1262.7 1103.1 1262.7 C1114.9 1262.7 1113.8 1244.4 1124.6 1244.4 C1135.4 1244.4 1134.0 1262.7 1146.2 1262.7 C1155.5 1262.7 1159.5 1262.7 1167.8 1262.7 C1181.1 1262.7 1176.4 1290.2 1189.3 1290.2 C1198.0 1290.2 1204.8 1290.2 1210.9 1281.1 C1226.3 1258.1 1217.0 1226.0 1232.5 1226.0 C1238.6 1226.0 1243.2 1230.6 1254.0 1235.2 C1264.8 1239.8 1264.4 1244.4 1275.6 1244.4 C1285.9 1244.4 1286.8 1244.4 1297.2 1244.4 C1308.4 1244.4 1308.0 1235.2 1318.7 1235.2 C1329.5 1235.2 1329.1 1244.4 1340.3 1244.4 C1350.6 1244.4 1351.1 1244.4 1361.9 1244.4 C1372.7 1244.4 1376.2 1244.4 1383.4 1244.4 C1397.7 1244.4 1405.0 1207.7 1405.0 1207.7 L1405.00 1693.70 L111.00 1693.70 Z" fill="#ee6666" fill-opacity="0.20" stroke="none"/>
<path d="M111.0 1326.9 C111.0 1326.9 121.8 1308.6 132.6 1308.6 C143.3 1308.6 141.9 1326.9 154.1 1326.9 C163.5 1326.9 164.9 1326.9 175.7 1326.9 C186.5 1326.9 186.5 1326.9 197.3 1326.9 C208.0 1326.9 209.5 1326.9 218.8 1326.9 C231.1 1326.9 229.6 1308.6 240.4 1308.6 C251.2 1308.6 249.7 1326.9 262.0 1326.9 C271.3 1326.9 272.8 1326.9 283.5 1326.9 C294.3 1326.9 294.3 1326.9 305.1 1326.9 C315.9 1326.9 315.9 1326.9 326.7 1326.9 C337.4 1326.9 338.9 1326.9 348.2 1326.9 C360.5 1326.9 359.0 1308.6 369.8 1308.6 C380.6 1308.6 379.1 1326.9 391.4 1326.9 C400.7 1326.9 402.1 1326.9 412.9 1326.9 C423.7 1326.9 423.7 1326.9 434.5 1326.9 C445.3 1326.9 446.7 1326.9 456.1 1326.9 C468.3 1326.9 466.9 1308.6 477.6 1308.6 C488.4 1308.6 487.0 1326.9 499.2 1326.9 C508.5 1326.9 510.0 1326.9 520.8 1326.9 C531.5 1326.9 531.5 1326.9 542.3 1326.9 C553.1 1326.9 554.6 1326.9 563.9 1326.9 C576.1 1326.9 574.7 1308.6 585.5 1308.6 C596.2 1308.6 594.8 1326.9 607.0 1326.9 C616.4 1326.9 617.8 1326.9 628.6 1326.9 C639.4 1326.9 639.4 1326.9 650.2 1326.9 C661.0 1326.9 661.0 1326.9 671.7 1326.9 C682.5 1326.9 682.5 1326.9 693.3 1326.9 C704.1 1326.9 704.1 1326.9 714.9 1326.9 C725.7 1326.9 725.6 1326.9 736.4 1326.9 C747.2 1326.9 747.2 1326.9 758.0 1326.9 C768.8 1326.9 768.8 1326.9 779.6 1326.9 C790.4 1326.9 790.3 1326.9 801.1 1326.9 C811.9 1326.9 811.9 1326.9 822.7 1326.9 C833.5 1326.9 833.5 1326.9 844.3 1326.9 C855.0 1326.9 855.0 1326.9 865.8 1326.9 C876.6 1326.9 876.6 1326.9 887.4 1326.9 C898.2 1326.9 898.2 1326.9 909.0 1326.9 C919.8 1326.9 919.8 1326.9 930.5 1326.9 C941.3 1326.9 941.3 1326.9 952.1 1326.9 C962.9 1326.9 962.9 1326.9 973.7 1326.9 C984.5 1326.9 984.5 1326.9 995.2 1326.9 C1006.0 1326.9 1006.0 1326.9 1016.8 1326.9 C1027.6 1326.9 1027.6 1326.9 1038.4 1326.9 C1049.2 1326.9 1049.2 1326.9 1059.9 1326.9 C1070.7 1326.9 1070.7 1326.9 1081.5 1326.9 C1092.3 1326.9 1092.3 1326.9 1103.1 1326.9 C1113.8 1326.9 1113.8 1326.9 1124.6 1326.9 C1135.4 1326.9 1135.4 1326.9 1146.2 1326.9 C1157.0 1326.9 1157.0 1326.9 1167.8 1326.9 C1178.5 1326.9 1178.5 1326.9 1189.3 1326.9 C1200.1 1326.9 1200.1 1326.9 1210.9 1326.9 C1221.7 1326.9 1221.7 1326.9 1232.5 1326.9 C1243.2 1326.9 1243.2 1326.9 1254.0 1326.9 C1264.8 1326.9 1264.8 1326.9 1275.6 1326.9 C1286.4 1326.9 1286.4 1326.9 1297.2 1326.9 C1308.0 1326.9 1308.0 1326.9 1318.7 1326.9 C1329.5 1326.9 1329.5 1326.9 1340.3 1326.9 C1351.1 1326.9 1351.1 1326.9 1361.9 1326.9 C1372.7 1326.9 1372.7 1326.9 1383.4 1326.9 C1394.2 1326.9 1405.0 1326.9 1405.0 1326.9 L1405.00 1693.70 L111.00 1693.70 Z" fill="#73c0de" fill-opacity="0.20" stroke="none"/>
<path d="M111.0 1308.6 C111.0 1308.6 121.3 1317.7 132.6 1317.7 C142.9 1317.7 143.8 1317.7 154.1 1317.7 C165.4 1317.7 164.9 1326.9 175.7 1326.9 C186.5 1326.9 186.5 1322.3 197.3 1317.7 C208.0 1313.1 208.0 1308.6 218.8 1308.6 C229.6 1308.6 229.2 1317.7 240.4 1317.7 C250.7 1317.7 251.2 1317.7 262.0 1317.7 C272.8 1317.7 273.2 1317.7 283.5 1317.7 C294.8 1317.7 295.3 1326.9 305.1 1326.9 C316.9 1326.9 314.9 1308.6 326.7 1308.6 C336.4 1308.6 337.4 1313.1 348.2 1317.7 C359.0 1322.3 359.0 1326.9 369.8 1326.9 C380.6 1326.9 380.1 1317.7 391.4 1317.7 C401.7 1317.7 402.6 1317.7 412.9 1317.7 C424.2 1317.7 423.7 1308.6 434.5 1308.6 C445.3 1308.6 444.8 1317.7 456.1 1317.7 C466.4 1317.7 466.9 1317.7 477.6 1317.7 C488.4 1317.7 488.9 1317.7 499.2 1317.7 C510.4 1317.7 511.0 1326.9 520.8 1326.9 C532.6 1326.9 530.5 1308.6 542.3 1308.6 C552.1 1308.6 553.1 1313.1 563.9 1317.7 C574.7 1322.3 574.7 1326.9 585.5 1326.9 C596.2 1326.9 595.8 1317.7 607.0 1317.7 C617.4 1317.7 618.3 1317.7 628.6 1317.7 C639.8 1317.7 639.4 1308.6 650.2 1308.6 C660.9 1308.6 660.5 1317.7 671.7 1317.7 C682.1 1317.7 683.0 1317.7 693.3 1317.7 C704.5 1317.7 704.1 1308.6 714.9 1308.6 C725.6 1308.6 725.6 1317.7 736.4 1317.7 C747.2 1317.7 746.8 1308.6 758.0 1308.6 C768.3 1308.6 769.2 1308.6 779.6 1308.6 C790.8 1308.6 789.9 1317.7 801.1 1317.7 C811.5 1317.7 811.9 1317.7 822.7 1317.7 C833.5 1317.7 833.9 1317.7 844.3 1317.7 C855.5 1317.7 855.1 1308.6 865.8 1308.6 C876.6 1308.6 876.2 1317.7 887.4 1317.7 C897.7 1317.7 898.6 1317.7 909.0 1317.7 C920.2 1317.7 919.8 1326.9 930.5 1326.9 C941.3 1326.9 941.3 1322.3 952.1 1317.7 C962.9 1313.1 962.9 1308.6 973.7 1308.6 C984.4 1308.6 984.0 1317.7 995.2 1317.7 C1005.6 1317.7 1006.0 1317.7 1016.8 1317.7 C1027.6 1317.7 1028.0 1317.7 1038.4 1317.7 C1049.6 1317.7 1048.7 1308.6 1059.9 1308.6 C1070.3 1308.6 1071.2 1308.6 1081.5 1308.6 C1092.7 1308.6 1092.3 1317.7 1103.1 1317.7 C1113.8 1317.7 1113.8 1308.6 1124.6 1308.6 C1135.4 1308.6 1135.0 1317.7 1146.2 1317.7 C1156.5 1317.7 1157.0 1317.7 1167.8 1317.7 C1178.5 1317.7 1178.5 1317.7 1189.3 1317.7 C1200.1 1317.7 1200.1 1317.7 1210.9 1317.7 C1221.7 1317.7 1221.7 1317.7 1232.5 1317.7 C1243.2 1317.7 1243.7 1317.7 1254.0 1317.7 C1265.3 1317.7 1265.8 1326.9 1275.6 1326.9 C1287.4 1326.9 1285.4 1308.6 1297.2 1308.6 C1306.9 1308.6 1308.0 1313.1 1318.7 1317.7 C1329.5 1322.3 1329.5 1326.9 1340.3 1326.9 C1351.1 1326.9 1350.6 1317.7 1361.9 1317.7 C1372.2 1317.7 1373.1 1317.7 1383.4 1317.7 C1394.7 1317.7 1405.0 1308.6 1405.0 1308.6 L1405.00 1693.70 L111.00 1693.70 Z" fill="#3ba272" fill-opacity="0.20" stroke="none"/>
<path d="M111.0 1235.2 C111.0 1235.2 123.9 1226.0 132.6 1226.0 C145.5 1226.0 142.2 1240.9 154.1 1253.5 C163.8 1263.8 163.9 1271.9 175.7 1271.9 C185.5 1271.9 186.0 1262.7 197.3 1262.7 C207.6 1262.7 208.5 1262.7 218.8 1262.7 C230.1 1262.7 229.6 1271.9 240.4 1271.9 C251.2 1271.9 250.7 1262.7 262.0 1262.7 C272.3 1262.7 273.2 1262.7 283.5 1262.7 C294.8 1262.7 294.3 1271.9 305.1 1271.9 C315.9 1271.9 315.4 1262.7 326.7 1262.7 C337.0 1262.7 337.9 1262.7 348.2 1262.7 C359.5 1262.7 359.0 1271.9 369.8 1271.9 C380.6 1271.9 380.1 1262.7 391.4 1262.7 C401.7 1262.7 402.6 1262.7 412.9 1262.7 C424.2 1262.7 424.7 1253.5 434.5 1253.5 C446.3 1253.5 444.3 1271.9 456.1 1271.9 C465.8 1271.9 467.9 1268.9 477.6 1262.7 C489.4 1255.2 487.4 1244.4 499.2 1244.4 C509.0 1244.4 510.0 1249.0 520.8 1253.5 C531.5 1258.1 531.1 1262.7 542.3 1262.7 C552.7 1262.7 553.6 1262.7 563.9 1262.7 C575.1 1262.7 574.7 1271.9 585.5 1271.9 C596.2 1271.9 597.3 1268.9 607.0 1262.7 C618.8 1255.2 618.9 1244.4 628.6 1244.4 C640.5 1244.4 637.3 1271.9 650.2 1271.9 C658.8 1271.9 660.5 1262.7 671.7 1262.7 C682.1 1262.7 683.0 1262.7 693.3 1262.7 C704.5 1262.7 706.2 1271.9 714.9 1271.9 C727.8 1271.9 724.5 1244.4 736.4 1244.4 C746.1 1244.4 746.2 1262.7 758.0 1262.7 C767.8 1262.7 768.8 1253.5 779.6 1253.5 C790.4 1253.5 789.9 1262.7 801.1 1262.7 C811.5 1262.7 811.9 1262.7 822.7 1262.7 C833.5 1262.7 833.9 1262.7 844.3 1262.7 C855.5 1262.7 856.1 1271.9 865.8 1271.9 C877.6 1271.9 875.6 1253.5 887.4 1253.5 C897.2 1253.5 898.2 1258.1 909.0 1262.7 C919.8 1267.3 919.8 1271.9 930.5 1271.9 C941.3 1271.9 941.3 1267.3 952.1 1262.7 C962.9 1258.1 963.9 1253.5 973.7 1253.5 C985.5 1253.5 983.4 1271.9 995.2 1271.9 C1005.0 1271.9 1006.0 1267.3 1016.8 1262.7 C1027.6 1258.1 1028.6 1253.5 1038.4 1253.5 C1050.2 1253.5 1048.1 1271.9 1059.9 1271.9 C1069.7 1271.9 1070.3 1262.7 1081.5 1262.7 C1091.8 1262.7 1092.7 1262.7 1103.1 1262.7 C1114.3 1262.7 1116.0 1253.5 1124.6 1253.5 C1137.5 1253.5 1134.3 1281.1 1146.2 1281.1 C1155.9 1281.1 1155.5 1262.7 1167.8 1262.7 C1177.1 1262.7 1179.0 1262.7 1189.3 1262.7 C1200.6 1262.7 1200.1 1271.9 1210.9 1271.9 C1221.7 1271.9 1221.2 1262.7 1232.5 1262.7 C1242.8 1262.7 1243.7 1262.7 1254.0 1262.7 C1265.3 1262.7 1264.8 1271.9 1275.6 1271.9 C1286.4 1271.9 1285.9 1262.7 1297.2 1262.7 C1307.5 1262.7 1308.4 1262.7 1318.7 1262.7 C1330.0 1262.7 1332.6 1271.9 1340.3 1271.9 C1354.2 1271.9 1350.0 1235.2 1361.9 1235.2 C1371.6 1235.2 1370.5 1251.7 1383.4 1262.7 C1392.1 1270.1 1405.0 1271.9 1405.0 1271.9 L1405.00 1693.70 L111.00 1693.70 Z" fill="#fc8452" fill-opacity="0.20" stroke="none"/>
<path d="M111.0 1290.2 C111.0 1290.2 121.8 1290.2 132.6 1290.2 C143.3 1290.2 143.8 1290.2 154.1 1290.2 C165.4 1290.2 164.9 1299.4 175.7 1299.4 C186.5 1299.4 186.0 1290.2 197.3 1290.2 C207.6 1290.2 208.0 1290.2 218.8 1290.2 C229.6 1290.2 229.6 1290.2 240.4 1290.2 C251.2 1290.2 251.2 1290.2 262.0 1290.2 C272.8 1290.2 273.2 1290.2 283.5 1290.2 C294.8 1290.2 294.3 1299.4 305.1 1299.4 C315.9 1299.4 315.4 1290.2 326.7 1290.2 C337.0 1290.2 337.9 1290.2 348.2 1290.2 C359.5 1290.2 359.0 1299.4 369.8 1299.4 C380.6 1299.4 380.1 1290.2 391.4 1290.2 C401.7 1290.2 402.6 1290.2 412.9 1290.2 C424.2 1290.2 423.7 1281.1 434.5 1281.1 C445.3 1281.1 444.8 1290.2 456.1 1290.2 C466.4 1290.2 467.3 1290.2 477.6 1290.2 C488.9 1290.2 488.4 1281.1 499.2 1281.1 C510.0 1281.1 509.5 1290.2 520.8 1290.2 C531.1 1290.2 531.5 1290.2 542.3 1290.2 C553.1 1290.2 553.6 1290.2 563.9 1290.2 C575.1 1290.2 574.7 1299.4 585.5 1299.4 C596.2 1299.4 595.8 1290.2 607.0 1290.2 C617.4 1290.2 618.3 1290.2 628.6 1290.2 C639.8 1290.2 639.4 1299.4 650.2 1299.4 C660.9 1299.4 660.5 1290.2 671.7 1290.2 C682.1 1290.2 683.0 1290.2 693.3 1290.2 C704.5 1290.2 704.1 1299.4 714.9 1299.4 C725.6 1299.4 725.2 1290.2 736.4 1290.2 C746.8 1290.2 747.7 1290.2 758.0 1290.2 C769.2 1290.2 768.8 1281.1 779.6 1281.1 C790.4 1281.1 789.9 1290.2 801.1 1290.2 C811.5 1290.2 811.9 1290.2 822.7 1290.2 C833.5 1290.2 833.9 1290.2 844.3 1290.2 C855.5 1290.2 855.1 1299.4 865.8 1299.4 C876.6 1299.4 876.2 1290.2 887.4 1290.2 C897.7 1290.2 898.6 1290.2 909.0 1290.2 C920.2 1290.2 919.8 1299.4 930.5 1299.4 C941.3 1299.4 940.9 1290.2 952.1 1290.2 C962.4 1290.2 962.9 1290.2 973.7 1290.2 C984.5 1290.2 984.5 1290.2 995.2 1290.2 C1006.0 1290.2 1006.0 1290.2 1016.8 1290.2 C1027.6 1290.2 1028.0 1290.2 1038.4 1290.2 C1049.6 1290.2 1049.2 1299.4 1059.9 1299.4 C1070.7 1299.4 1070.3 1290.2 1081.5 1290.2 C1091.8 1290.2 1092.7 1290.2 1103.1 1290.2 C1114.3 1290.2 1113.8 1281.1 1124.6 1281.1 C1135.4 1281.1 1135.0 1290.2 1146.2 1290.2 C1156.5 1290.2 1157.0 1290.2 1167.8 1290.2 C1178.5 1290.2 1178.5 1290.2 1189.3 1290.2 C1200.1 1290.2 1200.1 1290.2 1210.9 1290.2 C1221.7 1290.2 1221.7 1290.2 1232.5 1290.2 C1243.2 1290.2 1243.7 1290.2 1254.0 1290.2 C1265.3 1290.2 1264.8 1299.4 1275.6 1299.4 C1286.4 1299.4 1285.9 1290.2 1297.2 1290.2 C1307.5 1290.2 1308.4 1290.2 1318.7 1290.2 C1330.0 1290.2 1329.5 1299.4 1340.3 1299.4 C1351.1 1299.4 1350.6 1290.2 1361.9 1290.2 C1372.2 1290.2 1373.1 1290.2 1383.4 1290.2 C1394.7 1290.2 1405.0 1281.1 1405.0 1281.1 L1405.00 1693.70 L111.00 1693.70 Z" fill="#9a60b4" fill-opacity="0.20" stroke="none"/>
<path d="M111.0 1372.8 C111.0 1372.8 121.8 1372.8 132.6 1372.8 C143.3 1372.8 143.3 1372.8 154.1 1372.8 C164.9 1372.8 164.9 1372.8 175.7 1372.8 C186.5 1372.8 186.5 1372.8 197.3 1372.8 C208.0 1372.8 208.0 1372.8 218.8 1372.8 C229.6 1372.8 229.6 1372.8 240.4 1372.8 C251.2 1372.8 251.2 1372.8 262.0 1372.8 C272.8 1372.8 272.8 1372.8 283.5 1372.8 C294.3 1372.8 294.3 1372.8 305.1 1372.8 C315.9 1372.8 315.9 1372.8 326.7 1372.8 C337.4 1372.8 337.5 1372.8 348.2 1372.8 C359.0 1372.8 359.0 1372.8 369.8 1372.8 C380.6 1372.8 380.6 1372.8 391.4 1372.8 C402.1 1372.8 402.1 1372.8 412.9 1372.8 C423.7 1372.8 423.7 1372.8 434.5 1372.8 C445.3 1372.8 445.3 1372.8 456.1 1372.8 C466.9 1372.8 466.9 1372.8 477.6 1372.8 C488.4 1372.8 488.4 1372.8 499.2 1372.8 C510.0 1372.8 510.0 1372.8 520.8 1372.8 C531.5 1372.8 531.5 1372.8 542.3 1372.8 C553.1 1372.8 553.1 1372.8 563.9 1372.8 C574.7 1372.8 574.7 1372.8 585.5 1372.8 C596.2 1372.8 596.2 1372.8 607.0 1372.8 C617.8 1372.8 617.8 1372.8 628.6 1372.8 C639.4 1372.8 639.4 1372.8 650.2 1372.8 C661.0 1372.8 661.0 1372.8 671.7 1372.8 C682.5 1372.8 682.5 1372.8 693.3 1372.8 C704.1 1372.8 704.1 1372.8 714.9 1372.8 C725.7 1372.8 725.6 1372.8 736.4 1372.8 C747.2 1372.8 747.2 1372.8 758.0 1372.8 C768.8 1372.8 768.8 1372.8 779.6 1372.8 C790.4 1372.8 790.3 1372.8 801.1 1372.8 C811.9 1372.8 811.9 1372.8 822.7 1372.8 C833.5 1372.8 833.5 1372.8 844.3 1372.8 C855.0 1372.8 855.0 1372.8 865.8 1372.8 C876.6 1372.8 876.6 1372.8 887.4 1372.8 C898.2 1372.8 898.2 1372.8 909.0 1372.8 C919.8 1372.8 919.8 1372.8 930.5 1372.8 C941.3 1372.8 941.3 1372.8 952.1 1372.8 C962.9 1372.8 962.9 1372.8 973.7 1372.8 C984.5 1372.8 984.5 1372.8 995.2 1372.8 C1006.0 1372.8 1006.0 1372.8 1016.8 1372.8 C1027.6 1372.8 1027.6 1372.8 1038.4 1372.8 C1049.2 1372.8 1049.2 1372.8 1059.9 1372.8 C1070.7 1372.8 1070.7 1372.8 1081.5 1372.8 C1092.3 1372.8 1092.3 1372.8 1103.1 1372.8 C1113.8 1372.8 1113.8 1372.8 1124.6 1372.8 C1135.4 1372.8 1135.4 1372.8 1146.2 1372.8 C1157.0 1372.8 1157.0 1372.8 1167.8 1372.8 C1178.5 1372.8 1178.5 1372.8 1189.3 1372.8 C1200.1 1372.8 1200.1 1372.8 1210.9 1372.8 C1221.7 1372.8 1221.7 1372.8 1232.5 1372.8 C1243.2 1372.8 1243.2 1372.8 1254.0 1372.8 C1264.8 1372.8 1266.3 1372.8 1275.6 1372.8 C1287.8 1372.8 1286.4 1354.4 1297.2 1354.4 C1308.0 1354.4 1306.5 1372.8 1318.7 1372.8 C1328.1 1372.8 1329.5 1372.8 1340.3 1372.8 C1351.1 1372.8 1351.1 1372.8 1361.9 1372.8 C1372.7 1372.8 1374.1 1372.8 1383.4 1372.8 C1395.7 1372.8 1405.0 1354.4 1405.0 1354.4" fill="none" stroke="#5470c6" stroke-width="2.2" stroke-linejoin="round"/>
<path d="M111 1381.9H1405" stroke="#91cc75" stroke-width="2.2"/>
<path d="M111 1345.2H1405" stroke="#fac858" stroke-width="2.2"/>
<path d="M111.0 1299.4 C111.0 1299.4 126.8 1299.4 132.6 1299.4 C148.4 1299.4 141.6 1244.4 154.1 1244.4 C163.2 1244.4 161.4 1281.1 175.7 1281.1 C183.0 1281.1 187.9 1281.1 197.3 1281.1 C209.5 1281.1 206.6 1299.4 218.8 1299.4 C228.2 1299.4 234.0 1299.4 240.4 1299.4 C255.5 1299.4 249.2 1253.5 262.0 1253.5 C270.8 1253.5 270.2 1281.1 283.5 1281.1 C291.8 1281.1 295.8 1281.1 305.1 1281.1 C317.3 1281.1 314.4 1299.4 326.7 1299.4 C336.0 1299.4 341.0 1299.4 348.2 1299.4 C362.5 1299.4 356.8 1262.7 369.8 1262.7 C378.4 1262.7 380.6 1281.1 391.4 1281.1 C402.1 1281.1 402.1 1262.7 412.9 1262.7 C423.7 1262.7 422.3 1281.1 434.5 1281.1 C443.8 1281.1 447.8 1281.1 456.1 1281.1 C469.4 1281.1 466.9 1253.5 477.6 1253.5 C488.4 1253.5 485.9 1281.1 499.2 1281.1 C507.4 1281.1 511.4 1281.1 520.8 1281.1 C533.0 1281.1 530.1 1299.4 542.3 1299.4 C551.7 1299.4 559.2 1299.4 563.9 1299.4 C580.7 1299.4 573.3 1226.0 585.5 1226.0 C594.9 1226.0 591.2 1281.1 607.0 1281.1 C612.8 1281.1 619.3 1281.1 628.6 1281.1 C640.8 1281.1 637.9 1299.4 650.2 1299.4 C659.5 1299.4 666.0 1299.4 671.7 1299.4 C687.5 1299.4 680.8 1244.4 693.3 1244.4 C702.3 1244.4 701.9 1281.1 714.9 1281.1 C723.5 1281.1 727.8 1273.7 736.4 1262.7 C749.4 1246.2 744.1 1226.0 758.0 1226.0 C765.7 1226.0 769.8 1229.0 779.6 1235.2 C791.4 1242.7 789.3 1253.5 801.1 1253.5 C810.9 1253.5 811.5 1244.4 822.7 1244.4 C833.0 1244.4 836.0 1244.4 844.3 1244.4 C857.6 1244.4 856.1 1271.9 865.8 1271.9 C877.7 1271.9 874.4 1235.2 887.4 1235.2 C896.0 1235.2 896.7 1253.5 909.0 1253.5 C918.3 1253.5 920.2 1253.5 930.5 1253.5 C941.8 1253.5 943.4 1255.3 952.1 1262.7 C965.0 1273.7 966.3 1290.2 973.7 1290.2 C987.9 1290.2 980.0 1226.0 995.2 1226.0 C1001.6 1226.0 1004.6 1244.4 1016.8 1244.4 C1026.1 1244.4 1028.0 1244.4 1038.4 1244.4 C1049.6 1244.4 1048.7 1253.5 1059.9 1253.5 C1070.3 1253.5 1071.2 1253.5 1081.5 1253.5 C1092.7 1253.5 1093.3 1262.7 1103.1 1262.7 C1114.9 1262.7 1113.8 1244.4 1124.6 1244.4 C1135.4 1244.4 1134.0 1262.7 1146.2 1262.7 C1155.5 1262.7 1159.5 1262.7 1167.8 1262.7 C1181.1 1262.7 1176.4 1290.2 1189.3 1290.2 C1198.0 1290.2 1204.8 1290.2 1210.9 1281.1 C1226.3 1258.1 1217.0 1226.0 1232.5 1226.0 C1238.6 1226.0 1243.2 1230.6 1254.0 1235.2 C1264.8 1239.8 1264.4 1244.4 1275.6 1244.4 C1285.9 1244.4 1286.8 1244.4 1297.2 1244.4 C1308.4 1244.4 1308.0 1235.2 1318.7 1235.2 C1329.5 1235.2 1329.1 1244.4 1340.3 1244.4 C1350.6 1244.4 1351.1 1244.4 1361.9 1244.4 C1372.7 1244.4 1376.2 1244.4 1383.4 1244.4 C1397.7 1244.4 1405.0 1207.7 1405.0 1207.7" fill="none" stroke="#ee6666" stroke-width="2.2" stroke-linejoin="round"/>
<path d="M111.0 1326.9 C111.0 1326.9 121.8 1308.6 132.6 1308.6 C143.3 1308.6 141.9 1326.9 154.1 1326.9 C163.5 1326.9 164.9 1326.9 175.7 1326.9 C186.5 1326.9 186.5 1326.9 197.3 1326.9 C208.0 1326.9 209.5 1326.9 218.8 1326.9 C231.1 1326.9 229.6 1308.6 240.4 1308.6 C251.2 1308.6 249.7 1326.9 262.0 1326.9 C271.3 1326.9 272.8 1326.9 283.5 1326.9 C294.3 1326.9 294.3 1326.9 305.1 1326.9 C315.9 1326.9 315.9 1326.9 326.7 1326.9 C337.4 1326.9 338.9 1326.9 348.2 1326.9 C360.5 1326.9 359.0 1308.6 369.8 1308.6 C380.6 1308.6 379.1 1326.9 391.4 1326.9 C400.7 1326.9 402.1 1326.9 412.9 1326.9 C423.7 1326.9 423.7 1326.9 434.5 1326.9 C445.3 1326.9 446.7 1326.9 456.1 1326.9 C468.3 1326.9 466.9 1308.6 477.6 1308.6 C488.4 1308.6 487.0 1326.9 499.2 1326.9 C508.5 1326.9 510.0 1326.9 520.8 1326.9 C531.5 1326.9 531.5 1326.9 542.3 1326.9 C553.1 1326.9 554.6 1326.9 563.9 1326.9 C576.1 1326.9 574.7 1308.6 585.5 1308.6 C596.2 1308.6 594.8 1326.9 607.0 1326.9 C616.4 1326.9 617.8 1326.9 628.6 1326.9 C639.4 1326.9 639.4 1326.9 650.2 1326.9 C661.0 1326.9 661.0 1326.9 671.7 1326.9 C682.5 1326.9 682.5 1326.9 693.3 1326.9 C704.1 1326.9 704.1 1326.9 714.9 1326.9 C725.7 1326.9 725.6 1326.9 736.4 1326.9 C747.2 1326.9 747.2 1326.9 758.0 1326.9 C768.8 1326.9 768.8 1326.9 779.6 1326.9 C790.4 1326.9 790.3 1326.9 801.1 1326.9 C811.9 1326.9 811.9 1326.9 822.7 1326.9 C833.5 1326.9 833.5 1326.9 844.3 1326.9 C855.0 1326.9 855.0 1326.9 865.8 1326.9 C876.6 1326.9 876.6 1326.9 887.4 1326.9 C898.2 1326.9 898.2 1326.9 909.0 1326.9 C919.8 1326.9 919.8 1326.9 930.5 1326.9 C941.3 1326.9 941.3 1326.9 952.1 1326.9 C962.9 1326.9 962.9 1326.9 973.7 1326.9 C984.5 1326.9 984.5 1326.9 995.2 1326.9 C1006.0 1326.9 1006.0 1326.9 1016.8 1326.9 C1027.6 1326.9 1027.6 1326.9 1038.4 1326.9 C1049.2 1326.9 1049.2 1326.9 1059.9 1326.9 C1070.7 1326.9 1070.7 1326.9 1081.5 1326.9 C1092.3 1326.9 1092.3 1326.9 1103.1 1326.9 C1113.8 1326.9 1113.8 1326.9 1124.6 1326.9 C1135.4 1326.9 1135.4 1326.9 1146.2 1326.9 C1157.0 1326.9 1157.0 1326.9 1167.8 1326.9 C1178.5 1326.9 1178.5 1326.9 1189.3 1326.9 C1200.1 1326.9 1200.1 1326.9 1210.9 1326.9 C1221.7 1326.9 1221.7 1326.9 1232.5 1326.9 C1243.2 1326.9 1243.2 1326.9 1254.0 1326.9 C1264.8 1326.9 1264.8 1326.9 1275.6 1326.9 C1286.4 1326.9 1286.4 1326.9 1297.2 1326.9 C1308.0 1326.9 1308.0 1326.9 1318.7 1326.9 C1329.5 1326.9 1329.5 1326.9 1340.3 1326.9 C1351.1 1326.9 1351.1 1326.9 1361.9 1326.9 C1372.7 1326.9 1372.7 1326.9 1383.4 1326.9 C1394.2 1326.9 1405.0 1326.9 1405.0 1326.9" fill="none" stroke="#73c0de" stroke-width="2.2" stroke-linejoin="round"/>
<path d="M111.0 1308.6 C111.0 1308.6 121.3 1317.7 132.6 1317.7 C142.9 1317.7 143.8 1317.7 154.1 1317.7 C165.4 1317.7 164.9 1326.9 175.7 1326.9 C186.5 1326.9 186.5 1322.3 197.3 1317.7 C208.0 1313.1 208.0 1308.6 218.8 1308.6 C229.6 1308.6 229.2 1317.7 240.4 1317.7 C250.7 1317.7 251.2 1317.7 262.0 1317.7 C272.8 1317.7 273.2 1317.7 283.5 1317.7 C294.8 1317.7 295.3 1326.9 305.1 1326.9 C316.9 1326.9 314.9 1308.6 326.7 1308.6 C336.4 1308.6 337.4 1313.1 348.2 1317.7 C359.0 1322.3 359.0 1326.9 369.8 1326.9 C380.6 1326.9 380.1 1317.7 391.4 1317.7 C401.7 1317.7 402.6 1317.7 412.9 1317.7 C424.2 1317.7 423.7 1308.6 434.5 1308.6 C445.3 1308.6 444.8 1317.7 456.1 1317.7 C466.4 1317.7 466.9 1317.7 477.6 1317.7 C488.4 1317.7 488.9 1317.7 499.2 1317.7 C510.4 1317.7 511.0 1326.9 520.8 1326.9 C532.6 1326.9 530.5 1308.6 542.3 1308.6 C552.1 1308.6 553.1 1313.1 563.9 1317.7 C574.7 1322.3 574.7 1326.9 585.5 1326.9 C596.2 1326.9 595.8 1317.7 607.0 1317.7 C617.4 1317.7 618.3 1317.7 628.6 1317.7 C639.8 1317.7 639.4 1308.6 650.2 1308.6 C660.9 1308.6 660.5 1317.7 671.7 1317.7 C682.1 1317.7 683.0 1317.7 693.3 1317.7 C704.5 1317.7 704.1 1308.6 714.9 1308.6 C725.6 1308.6 725.6 1317.7 736.4 1317.7 C747.2 1317.7 746.8 1308.6 758.0 1308.6 C768.3 1308.6 769.2 1308.6 779.6 1308.6 C790.8 1308.6 789.9 1317.7 801.1 1317.7 C811.5 1317.7 811.9 1317.7 822.7 1317.7 C833.5 1317.7 833.9 1317.7 844.3 1317.7 C855.5 1317.7 855.1 1308.6 865.8 1308.6 C876.6 1308.6 876.2 1317.7 887.4 1317.7 C897.7 1317.7 898.6 1317.7 909.0 1317.7 C920.2 1317.7 919.8 1326.9 930.5 1326.9 C941.3 1326.9 941.3 1322.3 952.1 1317.7 C962.9 1313.1 962.9 1308.6 973.7 1308.6 C984.4 1308.6 984.0 1317.7 995.2 1317.7 C1005.6 1317.7 1006.0 1317.7 1016.8 1317.7 C1027.6 1317.7 1028.0 1317.7 1038.4 1317.7 C1049.6 1317.7 1048.7 1308.6 1059.9 1308.6 C1070.3 1308.6 1071.2 1308.6 1081.5 1308.6 C1092.7 1308.6 1092.3 1317.7 1103.1 1317.7 C1113.8 1317.7 1113.8 1308.6 1124.6 1308.6 C1135.4 1308.6 1135.0 1317.7 1146.2 1317.7 C1156.5 1317.7 1157.0 1317.7 1167.8 1317.7 C1178.5 1317.7 1178.5 1317.7 1189.3 1317.7 C1200.1 1317.7 1200.1 1317.7 1210.9 1317.7 C1221.7 1317.7 1221.7 1317.7 1232.5 1317.7 C1243.2 1317.7 1243.7 1317.7 1254.0 1317.7 C1265.3 1317.7 1265.8 1326.9 1275.6 1326.9 C1287.4 1326.9 1285.4 1308.6 1297.2 1308.6 C1306.9 1308.6 1308.0 1313.1 1318.7 1317.7 C1329.5 1322.3 1329.5 1326.9 1340.3 1326.9 C1351.1 1326.9 1350.6 1317.7 1361.9 1317.7 C1372.2 1317.7 1373.1 1317.7 1383.4 1317.7 C1394.7 1317.7 1405.0 1308.6 1405.0 1308.6" fill="none" stroke="#3ba272" stroke-width="2.2" stroke-linejoin="round"/>
<path d="M111.0 1235.2 C111.0 1235.2 123.9 1226.0 132.6 1226.0 C145.5 1226.0 142.2 1240.9 154.1 1253.5 C163.8 1263.8 163.9 1271.9 175.7 1271.9 C185.5 1271.9 186.0 1262.7 197.3 1262.7 C207.6 1262.7 208.5 1262.7 218.8 1262.7 C230.1 1262.7 229.6 1271.9 240.4 1271.9 C251.2 1271.9 250.7 1262.7 262.0 1262.7 C272.3 1262.7 273.2 1262.7 283.5 1262.7 C294.8 1262.7 294.3 1271.9 305.1 1271.9 C315.9 1271.9 315.4 1262.7 326.7 1262.7 C337.0 1262.7 337.9 1262.7 348.2 1262.7 C359.5 1262.7 359.0 1271.9 369.8 1271.9 C380.6 1271.9 380.1 1262.7 391.4 1262.7 C401.7 1262.7 402.6 1262.7 412.9 1262.7 C424.2 1262.7 424.7 1253.5 434.5 1253.5 C446.3 1253.5 444.3 1271.9 456.1 1271.9 C465.8 1271.9 467.9 1268.9 477.6 1262.7 C489.4 1255.2 487.4 1244.4 499.2 1244.4 C509.0 1244.4 510.0 1249.0 520.8 1253.5 C531.5 1258.1 531.1 1262.7 542.3 1262.7 C552.7 1262.7 553.6 1262.7 563.9 1262.7 C575.1 1262.7 574.7 1271.9 585.5 1271.9 C596.2 1271.9 597.3 1268.9 607.0 1262.7 C618.8 1255.2 618.9 1244.4 628.6 1244.4 C640.5 1244.4 637.3 1271.9 650.2 1271.9 C658.8 1271.9 660.5 1262.7 671.7 1262.7 C682.1 1262.7 683.0 1262.7 693.3 1262.7 C704.5 1262.7 706.2 1271.9 714.9 1271.9 C727.8 1271.9 724.5 1244.4 736.4 1244.4 C746.1 1244.4 746.2 1262.7 758.0 1262.7 C767.8 1262.7 768.8 1253.5 779.6 1253.5 C790.4 1253.5 789.9 1262.7 801.1 1262.7 C811.5 1262.7 811.9 1262.7 822.7 1262.7 C833.5 1262.7 833.9 1262.7 844.3 1262.7 C855.5 1262.7 856.1 1271.9 865.8 1271.9 C877.6 1271.9 875.6 1253.5 887.4 1253.5 C897.2 1253.5 898.2 1258.1 909.0 1262.7 C919.8 1267.3 919.8 1271.9 930.5 1271.9 C941.3 1271.9 941.3 1267.3 952.1 1262.7 C962.9 1258.1 963.9 1253.5 973.7 1253.5 C985.5 1253.5 983.4 1271.9 995.2 1271.9 C1005.0 1271.9 1006.0 1267.3 1016.8 1262.7 C1027.6 1258.1 1028.6 1253.5 1038.4 1253.5 C1050.2 1253.5 1048.1 1271.9 1059.9 1271.9 C1069.7 1271.9 1070.3 1262.7 1081.5 1262.7 C1091.8 1262.7 1092.7 1262.7 1103.1 1262.7 C1114.3 1262.7 1116.0 1253.5 1124.6 1253.5 C1137.5 1253.5 1134.3 1281.1 1146.2 1281.1 C1155.9 1281.1 1155.5 1262.7 1167.8 1262.7 C1177.1 1262.7 1179.0 1262.7 1189.3 1262.7 C1200.6 1262.7 1200.1 1271.9 1210.9 1271.9 C1221.7 1271.9 1221.2 1262.7 1232.5 1262.7 C1242.8 1262.7 1243.7 1262.7 1254.0 1262.7 C1265.3 1262.7 1264.8 1271.9 1275.6 1271.9 C1286.4 1271.9 1285.9 1262.7 1297.2 1262.7 C1307.5 1262.7 1308.4 1262.7 1318.7 1262.7 C1330.0 1262.7 1332.6 1271.9 1340.3 1271.9 C1354.2 1271.9 1350.0 1235.2 1361.9 1235.2 C1371.6 1235.2 1370.5 1251.7 1383.4 1262.7 C1392.1 1270.1 1405.0 1271.9 1405.0 1271.9" fill="none" stroke="#fc8452" stroke-width="2.2" stroke-linejoin="round"/>
<path d="M111.0 1290.2 C111.0 1290.2 121.8 1290.2 132.6 1290.2 C143.3 1290.2 143.8 1290.2 154.1 1290.2 C165.4 1290.2 164.9 1299.4 175.7 1299.4 C186.5 1299.4 186.0 1290.2 197.3 1290.2 C207.6 1290.2 208.0 1290.2 218.8 1290.2 C229.6 1290.2 229.6 1290.2 240.4 1290.2 C251.2 1290.2 251.2 1290.2 262.0 1290.2 C272.8 1290.2 273.2 1290.2 283.5 1290.2 C294.8 1290.2 294.3 1299.4 305.1 1299.4 C315.9 1299.4 315.4 1290.2 326.7 1290.2 C337.0 1290.2 337.9 1290.2 348.2 1290.2 C359.5 1290.2 359.0 1299.4 369.8 1299.4 C380.6 1299.4 380.1 1290.2 391.4 1290.2 C401.7 1290.2 402.6 1290.2 412.9 1290.2 C424.2 1290.2 423.7 1281.1 434.5 1281.1 C445.3 1281.1 444.8 1290.2 456.1 1290.2 C466.4 1290.2 467.3 1290.2 477.6 1290.2 C488.9 1290.2 488.4 1281.1 499.2 1281.1 C510.0 1281.1 509.5 1290.2 520.8 1290.2 C531.1 1290.2 531.5 1290.2 542.3 1290.2 C553.1 1290.2 553.6 1290.2 563.9 1290.2 C575.1 1290.2 574.7 1299.4 585.5 1299.4 C596.2 1299.4 595.8 1290.2 607.0 1290.2 C617.4 1290.2 618.3 1290.2 628.6 1290.2 C639.8 1290.2 639.4 1299.4 650.2 1299.4 C660.9 1299.4 660.5 1290.2 671.7 1290.2 C682.1 1290.2 683.0 1290.2 693.3 1290.2 C704.5 1290.2 704.1 1299.4 714.9 1299.4 C725.6 1299.4 725.2 1290.2 736.4 1290.2 C746.8 1290.2 747.7 1290.2 758.0 1290.2 C769.2 1290.2 768.8 1281.1 779.6 1281.1 C790.4 1281.1 789.9 1290.2 801.1 1290.2 C811.5 1290.2 811.9 1290.2 822.7 1290.2 C833.5 1290.2 833.9 1290.2 844.3 1290.2 C855.5 1290.2 855.1 1299.4 865.8 1299.4 C876.6 1299.4 876.2 1290.2 887.4 1290.2 C897.7 1290.2 898.6 1290.2 909.0 1290.2 C920.2 1290.2 919.8 1299.4 930.5 1299.4 C941.3 1299.4 940.9 1290.2 952.1 1290.2 C962.4 1290.2 962.9 1290.2 973.7 1290.2 C984.5 1290.2 984.5 1290.2 995.2 1290.2 C1006.0 1290.2 1006.0 1290.2 1016.8 1290.2 C1027.6 1290.2 1028.0 1290.2 1038.4 1290.2 C1049.6 1290.2 1049.2 1299.4 1059.9 1299.4 C1070.7 1299.4 1070.3 1290.2 1081.5 1290.2 C1091.8 1290.2 1092.7 1290.2 1103.1 1290.2 C1114.3 1290.2 1113.8 1281.1 1124.6 1281.1 C1135.4 1281.1 1135.0 1290.2 1146.2 1290.2 C1156.5 1290.2 1157.0 1290.2 1167.8 1290.2 C1178.5 1290.2 1178.5 1290.2 1189.3 1290.2 C1200.1 1290.2 1200.1 1290.2 1210.9 1290.2 C1221.7 1290.2 1221.7 1290.2 1232.5 1290.2 C1243.2 1290.2 1243.7 1290.2 1254.0 1290.2 C1265.3 1290.2 1264.8 1299.4 1275.6 1299.4 C1286.4 1299.4 1285.9 1290.2 1297.2 1290.2 C1307.5 1290.2 1308.4 1290.2 1318.7 1290.2 C1330.0 1290.2 1329.5 1299.4 1340.3 1299.4 C1351.1 1299.4 1350.6 1290.2 1361.9 1290.2 C1372.2 1290.2 1373.1 1290.2 1383.4 1290.2 C1394.7 1290.2 1405.0 1281.1 1405.0 1281.1" fill="none" stroke="#9a60b4" stroke-width="2.2" stroke-linejoin="round"/></g>
<line x1="1542" y1="1556.2" x2="2837" y2="1556.2" stroke="#e0e6f1" stroke-width="2"/>
<line x1="1542" y1="1418.7" x2="2837" y2="1418.7" stroke="#e0e6f1" stroke-width="2"/>
<line x1="1542" y1="1281.2" x2="2837" y2="1281.2" stroke="#e0e6f1" stroke-width="2"/>
<line x1="1542" y1="1143.7" x2="2837" y2="1143.7" stroke="#e0e6f1" stroke-width="2"/>
<g clip-path="url(#cp4)"><path d="M1542.0 1398.0 C1542.0 1398.0 1552.8 1398.0 1563.6 1398.0 C1574.4 1398.0 1574.4 1398.0 1585.2 1398.0 C1596.0 1398.0 1596.0 1398.0 1606.8 1398.0 C1617.5 1398.0 1617.5 1398.0 1628.3 1398.0 C1639.1 1398.0 1639.1 1398.0 1649.9 1398.0 C1660.7 1398.0 1660.7 1398.0 1671.5 1398.0 C1682.3 1398.0 1682.3 1398.0 1693.1 1398.0 C1703.9 1398.0 1703.9 1398.0 1714.7 1398.0 C1725.5 1398.0 1725.5 1398.0 1736.2 1398.0 C1747.0 1398.0 1747.0 1398.0 1757.8 1398.0 C1768.6 1398.0 1768.6 1398.0 1779.4 1398.0 C1790.2 1398.0 1790.2 1398.0 1801.0 1398.0 C1811.8 1398.0 1811.8 1398.0 1822.6 1398.0 C1833.4 1398.0 1833.4 1398.0 1844.2 1398.0 C1855.0 1398.0 1855.0 1398.0 1865.8 1398.0 C1876.5 1398.0 1876.5 1398.0 1887.3 1398.0 C1898.1 1398.0 1898.1 1398.0 1908.9 1398.0 C1919.7 1398.0 1919.7 1398.0 1930.5 1398.0 C1941.3 1398.0 1941.3 1398.0 1952.1 1398.0 C1962.9 1398.0 1962.9 1398.0 1973.7 1398.0 C1984.5 1398.0 1984.5 1398.0 1995.2 1398.0 C2006.0 1398.0 2006.0 1398.0 2016.8 1398.0 C2027.6 1398.0 2027.6 1398.0 2038.4 1398.0 C2049.2 1398.0 2049.2 1398.0 2060.0 1398.0 C2070.8 1398.0 2070.8 1398.0 2081.6 1398.0 C2092.4 1398.0 2092.4 1398.0 2103.2 1398.0 C2114.0 1398.0 2114.0 1398.0 2124.8 1398.0 C2135.5 1398.0 2135.5 1398.0 2146.3 1398.0 C2157.1 1398.0 2157.1 1398.0 2167.9 1398.0 C2178.7 1398.0 2178.7 1398.0 2189.5 1398.0 C2200.3 1398.0 2200.3 1398.0 2211.1 1398.0 C2221.9 1398.0 2221.9 1398.0 2232.7 1398.0 C2243.5 1398.0 2243.5 1398.0 2254.2 1398.0 C2265.0 1398.0 2265.0 1398.0 2275.8 1398.0 C2286.6 1398.0 2286.6 1398.0 2297.4 1398.0 C2308.2 1398.0 2308.2 1398.0 2319.0 1398.0 C2329.8 1398.0 2329.8 1398.0 2340.6 1398.0 C2351.4 1398.0 2351.4 1398.0 2362.2 1398.0 C2373.0 1398.0 2373.0 1398.0 2383.8 1398.0 C2394.5 1398.0 2394.5 1398.0 2405.3 1398.0 C2416.1 1398.0 2416.1 1398.0 2426.9 1398.0 C2437.7 1398.0 2437.7 1398.0 2448.5 1398.0 C2459.3 1398.0 2459.3 1398.0 2470.1 1398.0 C2480.9 1398.0 2480.9 1398.0 2491.7 1398.0 C2502.5 1398.0 2502.5 1398.0 2513.2 1398.0 C2524.0 1398.0 2524.0 1398.0 2534.8 1398.0 C2545.6 1398.0 2545.6 1398.0 2556.4 1398.0 C2567.2 1398.0 2567.2 1398.0 2578.0 1398.0 C2588.8 1398.0 2589.7 1398.0 2599.6 1398.0 C2611.3 1398.0 2610.4 1384.3 2621.2 1384.3 C2632.0 1384.3 2631.0 1398.0 2642.8 1398.0 C2652.6 1398.0 2653.5 1398.0 2664.3 1398.0 C2675.1 1398.0 2675.1 1398.0 2685.9 1398.0 C2696.7 1398.0 2697.6 1398.0 2707.5 1398.0 C2719.2 1398.0 2718.3 1384.3 2729.1 1384.3 C2739.9 1384.3 2739.0 1398.0 2750.7 1398.0 C2760.5 1398.0 2761.5 1398.0 2772.2 1398.0 C2783.0 1398.0 2783.0 1398.0 2793.8 1398.0 C2804.6 1398.0 2805.5 1398.0 2815.4 1398.0 C2827.1 1398.0 2837.0 1384.3 2837.0 1384.3 L2837.00 1693.70 L1542.00 1693.70 Z" fill="#5470c6" fill-opacity="0.20" stroke="none"/>
<rect x="1542" y="1404.9" width="1295" height="288.8" fill="#91cc75" fill-opacity="0.20"/>
<rect x="1542" y="1349.9" width="1295" height="343.8" fill="#fac858" fill-opacity="0.20"/>
<path d="M1542.0 1343.0 C1542.0 1343.0 1558.2 1343.0 1563.6 1343.0 C1579.8 1343.0 1572.5 1281.1 1585.2 1281.1 C1594.1 1281.1 1592.2 1308.3 1606.8 1322.4 C1613.8 1329.3 1618.2 1324.4 1628.3 1329.3 C1639.8 1334.7 1638.2 1343.0 1649.9 1343.0 C1659.8 1343.0 1665.7 1343.0 1671.5 1343.0 C1687.3 1343.0 1680.3 1288.0 1693.1 1288.0 C1701.9 1288.0 1700.8 1310.1 1714.7 1322.4 C1722.4 1329.3 1726.1 1324.4 1736.2 1329.3 C1747.7 1334.7 1746.1 1343.0 1757.8 1343.0 C1767.7 1343.0 1773.1 1343.0 1779.4 1343.0 C1794.7 1343.0 1788.0 1294.9 1801.0 1294.9 C1809.6 1294.9 1811.8 1322.4 1822.6 1322.4 C1833.4 1322.4 1833.4 1294.9 1844.2 1294.9 C1855.0 1294.9 1852.7 1312.0 1865.8 1322.4 C1874.2 1329.2 1880.3 1329.3 1887.3 1329.3 C1901.9 1329.3 1897.4 1288.0 1908.9 1288.0 C1919.0 1288.0 1916.6 1310.1 1930.5 1322.4 C1938.2 1329.3 1941.9 1324.4 1952.1 1329.3 C1963.5 1334.7 1962.0 1343.0 1973.7 1343.0 C1983.5 1343.0 1990.6 1343.0 1995.2 1343.0 C2012.2 1343.0 2004.5 1267.4 2016.8 1267.4 C2026.1 1267.4 2022.8 1304.5 2038.4 1322.4 C2044.4 1329.3 2049.9 1324.4 2060.0 1329.3 C2071.4 1334.7 2069.9 1343.0 2081.6 1343.0 C2091.5 1343.0 2097.8 1343.0 2103.2 1343.0 C2119.4 1343.0 2112.1 1281.1 2124.8 1281.1 C2133.7 1281.1 2131.8 1308.3 2146.3 1322.4 C2153.4 1329.3 2156.9 1329.3 2167.9 1329.3 C2178.4 1329.3 2184.9 1329.3 2189.5 1329.3 C2206.4 1329.3 2194.1 1253.6 2211.1 1253.6 C2215.7 1253.6 2225.2 1253.6 2232.7 1253.6 C2246.8 1253.6 2240.2 1288.0 2254.2 1288.0 C2261.7 1288.0 2267.6 1288.0 2275.8 1288.0 C2289.2 1288.0 2289.4 1315.5 2297.4 1315.5 C2311.0 1315.5 2303.4 1260.5 2319.0 1260.5 C2325.0 1260.5 2332.9 1260.5 2340.6 1267.4 C2354.4 1279.7 2348.9 1287.0 2362.2 1301.8 C2370.5 1311.1 2373.8 1307.6 2383.8 1315.5 C2395.4 1324.8 2399.4 1336.1 2405.3 1336.1 C2421.0 1336.1 2410.0 1260.5 2426.9 1260.5 C2431.6 1260.5 2438.0 1260.5 2448.5 1260.5 C2459.6 1260.5 2463.6 1253.6 2470.1 1253.6 C2485.2 1253.6 2479.5 1301.8 2491.7 1301.8 C2501.1 1301.8 2503.9 1267.4 2513.2 1267.4 C2525.4 1267.4 2524.0 1315.5 2534.8 1315.5 C2545.6 1315.5 2545.0 1267.4 2556.4 1267.4 C2566.5 1267.4 2563.5 1294.5 2578.0 1308.6 C2585.1 1315.5 2590.3 1309.6 2599.6 1315.5 C2611.9 1323.3 2608.6 1336.1 2621.2 1336.1 C2630.2 1336.1 2638.6 1336.1 2642.8 1336.1 C2660.2 1336.1 2649.4 1246.8 2664.3 1246.8 C2670.9 1246.8 2672.7 1281.1 2685.9 1281.1 C2694.3 1281.1 2696.7 1267.4 2707.5 1267.4 C2718.3 1267.4 2719.1 1281.1 2729.1 1281.1 C2740.7 1281.1 2738.1 1260.5 2750.7 1260.5 C2759.7 1260.5 2764.0 1260.5 2772.2 1260.5 C2785.6 1260.5 2780.7 1288.0 2793.8 1288.0 C2802.3 1288.0 2806.9 1281.1 2815.4 1281.1 C2828.5 1281.1 2837.0 1308.6 2837.0 1308.6 L2837.00 1693.70 L1542.00 1693.70 Z" fill="#ee6666" fill-opacity="0.20" stroke="none"/>
<path d="M1542.0 1363.7 C1542.0 1363.7 1552.8 1363.7 1563.6 1363.7 C1574.4 1363.7 1574.4 1363.7 1585.2 1363.7 C1596.0 1363.7 1596.0 1363.7 1606.8 1363.7 C1617.5 1363.7 1617.5 1363.7 1628.3 1363.7 C1639.1 1363.7 1639.1 1363.7 1649.9 1363.7 C1660.7 1363.7 1660.7 1363.7 1671.5 1363.7 C1682.3 1363.7 1682.3 1363.7 1693.1 1363.7 C1703.9 1363.7 1703.9 1363.7 1714.7 1363.7 C1725.5 1363.7 1725.5 1363.7 1736.2 1363.7 C1747.0 1363.7 1747.0 1363.7 1757.8 1363.7 C1768.6 1363.7 1768.6 1363.7 1779.4 1363.7 C1790.2 1363.7 1790.2 1363.7 1801.0 1363.7 C1811.8 1363.7 1811.8 1363.7 1822.6 1363.7 C1833.4 1363.7 1833.4 1363.7 1844.2 1363.7 C1855.0 1363.7 1855.0 1363.7 1865.8 1363.7 C1876.5 1363.7 1876.5 1363.7 1887.3 1363.7 C1898.1 1363.7 1898.1 1363.7 1908.9 1363.7 C1919.7 1363.7 1919.7 1363.7 1930.5 1363.7 C1941.3 1363.7 1941.3 1363.7 1952.1 1363.7 C1962.9 1363.7 1962.9 1363.7 1973.7 1363.7 C1984.5 1363.7 1984.5 1363.7 1995.2 1363.7 C2006.0 1363.7 2006.0 1363.7 2016.8 1363.7 C2027.6 1363.7 2027.6 1363.7 2038.4 1363.7 C2049.2 1363.7 2049.2 1363.7 2060.0 1363.7 C2070.8 1363.7 2070.8 1363.7 2081.6 1363.7 C2092.4 1363.7 2093.3 1363.7 2103.2 1363.7 C2114.9 1363.7 2114.0 1349.9 2124.8 1349.9 C2135.5 1349.9 2134.6 1363.7 2146.3 1363.7 C2156.2 1363.7 2157.1 1363.7 2167.9 1363.7 C2178.7 1363.7 2178.7 1363.7 2189.5 1363.7 C2200.3 1363.7 2200.3 1363.7 2211.1 1363.7 C2221.9 1363.7 2221.9 1363.7 2232.7 1363.7 C2243.5 1363.7 2243.5 1363.7 2254.2 1363.7 C2265.0 1363.7 2265.0 1363.7 2275.8 1363.7 C2286.6 1363.7 2286.6 1363.7 2297.4 1363.7 C2308.2 1363.7 2308.2 1363.7 2319.0 1363.7 C2329.8 1363.7 2329.8 1363.7 2340.6 1363.7 C2351.4 1363.7 2351.4 1363.7 2362.2 1363.7 C2373.0 1363.7 2373.0 1363.7 2383.8 1363.7 C2394.5 1363.7 2395.5 1363.7 2405.3 1363.7 C2417.0 1363.7 2416.1 1349.9 2426.9 1349.9 C2437.7 1349.9 2436.8 1363.7 2448.5 1363.7 C2458.4 1363.7 2459.3 1363.7 2470.1 1363.7 C2480.9 1363.7 2480.9 1363.7 2491.7 1363.7 C2502.5 1363.7 2502.5 1363.7 2513.2 1363.7 C2524.0 1363.7 2524.0 1363.7 2534.8 1363.7 C2545.6 1363.7 2545.6 1363.7 2556.4 1363.7 C2567.2 1363.7 2567.2 1363.7 2578.0 1363.7 C2588.8 1363.7 2588.8 1363.7 2599.6 1363.7 C2610.4 1363.7 2610.4 1363.7 2621.2 1363.7 C2632.0 1363.7 2632.0 1363.7 2642.8 1363.7 C2653.5 1363.7 2653.5 1363.7 2664.3 1363.7 C2675.1 1363.7 2675.1 1363.7 2685.9 1363.7 C2696.7 1363.7 2696.7 1363.7 2707.5 1363.7 C2718.3 1363.7 2718.3 1363.7 2729.1 1363.7 C2739.9 1363.7 2739.9 1363.7 2750.7 1363.7 C2761.5 1363.7 2761.5 1363.7 2772.2 1363.7 C2783.0 1363.7 2783.0 1363.7 2793.8 1363.7 C2804.6 1363.7 2805.5 1363.7 2815.4 1363.7 C2827.1 1363.7 2837.0 1349.9 2837.0 1349.9 L2837.00 1693.70 L1542.00 1693.70 Z" fill="#73c0de" fill-opacity="0.20" stroke="none"/>
<path d="M1542.0 1301.8 C1542.0 1301.8 1552.8 1301.8 1563.6 1301.8 C1574.4 1301.8 1579.8 1301.8 1585.2 1301.8 C1601.4 1301.8 1596.0 1363.7 1606.8 1363.7 C1617.5 1363.7 1612.1 1301.8 1628.3 1301.8 C1633.7 1301.8 1644.6 1301.8 1649.9 1301.8 C1666.2 1301.8 1660.7 1363.7 1671.5 1363.7 C1682.3 1363.7 1676.8 1301.8 1693.1 1301.8 C1698.4 1301.8 1704.1 1301.8 1714.7 1301.8 C1725.7 1301.8 1725.5 1294.9 1736.2 1294.9 C1747.0 1294.9 1746.8 1301.8 1757.8 1301.8 C1768.4 1301.8 1768.9 1301.8 1779.4 1301.8 C1790.5 1301.8 1795.5 1294.9 1801.0 1294.9 C1817.0 1294.9 1811.2 1356.8 1822.6 1356.8 C1832.8 1356.8 1828.4 1301.8 1844.2 1301.8 C1849.9 1301.8 1860.4 1301.8 1865.8 1301.8 C1882.0 1301.8 1876.5 1363.7 1887.3 1363.7 C1898.1 1363.7 1892.7 1301.8 1908.9 1301.8 C1914.3 1301.8 1925.2 1301.8 1930.5 1301.8 C1946.7 1301.8 1941.3 1363.7 1952.1 1363.7 C1962.9 1363.7 1957.4 1301.8 1973.7 1301.8 C1979.0 1301.8 1989.9 1301.8 1995.2 1301.8 C2011.5 1301.8 2006.0 1363.7 2016.8 1363.7 C2027.6 1363.7 2022.2 1301.8 2038.4 1301.8 C2043.8 1301.8 2049.2 1301.8 2060.0 1301.8 C2070.8 1301.8 2075.8 1301.8 2081.6 1301.8 C2097.4 1301.8 2092.4 1356.8 2103.2 1356.8 C2114.0 1356.8 2109.1 1319.7 2124.8 1301.8 C2130.7 1294.9 2140.8 1294.9 2146.3 1294.9 C2162.4 1294.9 2156.6 1356.8 2167.9 1356.8 C2178.1 1356.8 2173.7 1301.8 2189.5 1301.8 C2195.3 1301.8 2205.7 1301.8 2211.1 1301.8 C2227.3 1301.8 2221.9 1363.7 2232.7 1363.7 C2243.5 1363.7 2238.0 1301.8 2254.2 1301.8 C2259.6 1301.8 2265.0 1301.8 2275.8 1301.8 C2286.6 1301.8 2286.6 1301.8 2297.4 1301.8 C2308.2 1301.8 2308.2 1301.8 2319.0 1301.8 C2329.8 1301.8 2335.2 1301.8 2340.6 1301.8 C2356.8 1301.8 2351.4 1363.7 2362.2 1363.7 C2373.0 1363.7 2367.5 1301.8 2383.8 1301.8 C2389.1 1301.8 2394.8 1301.8 2405.3 1301.8 C2416.4 1301.8 2421.4 1294.9 2426.9 1294.9 C2443.0 1294.9 2437.1 1356.8 2448.5 1356.8 C2458.7 1356.8 2454.5 1319.7 2470.1 1301.8 C2476.1 1294.9 2480.9 1294.9 2491.7 1294.9 C2502.5 1294.9 2502.2 1301.8 2513.2 1301.8 C2523.8 1301.8 2524.0 1301.8 2534.8 1301.8 C2545.6 1301.8 2551.1 1301.8 2556.4 1301.8 C2572.7 1301.8 2567.2 1363.7 2578.0 1363.7 C2588.8 1363.7 2583.3 1301.8 2599.6 1301.8 C2604.9 1301.8 2615.8 1301.8 2621.2 1301.8 C2637.4 1301.8 2632.0 1363.7 2642.8 1363.7 C2653.5 1363.7 2648.1 1301.8 2664.3 1301.8 C2669.7 1301.8 2680.6 1301.8 2685.9 1301.8 C2702.2 1301.8 2696.7 1363.7 2707.5 1363.7 C2718.3 1363.7 2712.8 1301.8 2729.1 1301.8 C2734.4 1301.8 2740.1 1301.8 2750.7 1301.8 C2761.7 1301.8 2766.7 1294.9 2772.2 1294.9 C2788.3 1294.9 2782.5 1356.8 2793.8 1356.8 C2804.1 1356.8 2799.6 1301.8 2815.4 1301.8 C2821.2 1301.8 2837.0 1301.8 2837.0 1301.8 L2837.00 1693.70 L1542.00 1693.70 Z" fill="#3ba272" fill-opacity="0.20" stroke="none"/>
<path d="M1542.0 1171.1 C1542.0 1171.1 1548.3 1208.3 1563.6 1239.9 C1569.9 1253.0 1572.6 1260.5 1585.2 1260.5 C1594.2 1260.5 1597.7 1260.5 1606.8 1260.5 C1619.3 1260.5 1616.7 1281.1 1628.3 1281.1 C1638.3 1281.1 1638.5 1272.9 1649.9 1267.4 C1660.1 1262.5 1662.2 1260.5 1671.5 1260.5 C1683.8 1260.5 1681.5 1281.1 1693.1 1281.1 C1703.0 1281.1 1704.7 1275.3 1714.7 1267.4 C1726.3 1258.1 1727.1 1246.8 1736.2 1246.8 C1748.7 1246.8 1744.6 1281.1 1757.8 1281.1 C1766.2 1281.1 1768.0 1272.9 1779.4 1267.4 C1789.6 1262.5 1789.9 1260.5 1801.0 1260.5 C1811.5 1260.5 1811.8 1260.5 1822.6 1260.5 C1833.4 1260.5 1833.6 1260.5 1844.2 1260.5 C1855.2 1260.5 1854.7 1267.4 1865.8 1267.4 C1876.3 1267.4 1876.8 1267.4 1887.3 1267.4 C1898.4 1267.4 1899.6 1274.3 1908.9 1274.3 C1921.2 1274.3 1918.0 1253.6 1930.5 1253.6 C1939.6 1253.6 1943.0 1253.6 1952.1 1253.6 C1964.6 1253.6 1961.4 1274.3 1973.7 1274.3 C1983.0 1274.3 1984.5 1270.8 1995.2 1267.4 C2006.0 1263.9 2007.5 1260.5 2016.8 1260.5 C2029.1 1260.5 2026.8 1281.1 2038.4 1281.1 C2048.4 1281.1 2050.0 1275.3 2060.0 1267.4 C2071.6 1258.1 2072.4 1246.8 2081.6 1246.8 C2094.0 1246.8 2089.9 1281.1 2103.2 1281.1 C2111.5 1281.1 2113.0 1267.4 2124.8 1267.4 C2134.6 1267.4 2135.5 1267.4 2146.3 1267.4 C2157.1 1267.4 2157.4 1267.4 2167.9 1267.4 C2179.0 1267.4 2178.7 1274.3 2189.5 1274.3 C2200.3 1274.3 2200.3 1270.8 2211.1 1267.4 C2221.9 1263.9 2222.5 1260.5 2232.7 1260.5 C2244.1 1260.5 2242.8 1274.3 2254.2 1274.3 C2264.4 1274.3 2266.5 1273.3 2275.8 1267.4 C2288.1 1259.6 2287.5 1246.8 2297.4 1246.8 C2309.1 1246.8 2305.9 1274.3 2319.0 1274.3 C2327.5 1274.3 2329.8 1270.8 2340.6 1267.4 C2351.4 1263.9 2352.9 1260.5 2362.2 1260.5 C2374.4 1260.5 2373.0 1281.1 2383.8 1281.1 C2394.5 1281.1 2392.8 1260.5 2405.3 1260.5 C2414.4 1260.5 2417.9 1260.5 2426.9 1260.5 C2439.4 1260.5 2437.7 1281.1 2448.5 1281.1 C2459.3 1281.1 2457.8 1260.5 2470.1 1260.5 C2479.4 1260.5 2481.5 1267.4 2491.7 1267.4 C2503.1 1267.4 2503.3 1253.6 2513.2 1253.6 C2524.9 1253.6 2522.6 1274.3 2534.8 1274.3 C2544.1 1274.3 2545.4 1267.4 2556.4 1267.4 C2566.9 1267.4 2567.5 1267.4 2578.0 1267.4 C2589.1 1267.4 2588.8 1274.3 2599.6 1274.3 C2610.4 1274.3 2610.4 1270.8 2621.2 1267.4 C2632.0 1264.0 2633.4 1260.5 2642.8 1260.5 C2655.0 1260.5 2652.7 1281.1 2664.3 1281.1 C2674.3 1281.1 2674.5 1272.9 2685.9 1267.4 C2696.1 1262.5 2698.2 1260.5 2707.5 1260.5 C2719.8 1260.5 2717.5 1281.1 2729.1 1281.1 C2739.0 1281.1 2741.5 1276.1 2750.7 1267.4 C2763.1 1255.5 2765.6 1239.9 2772.2 1239.9 C2787.2 1239.9 2780.9 1315.5 2793.8 1315.5 C2802.5 1315.5 2800.1 1267.4 2815.4 1267.4 C2821.7 1267.4 2837.0 1267.4 2837.0 1267.4 L2837.00 1693.70 L1542.00 1693.70 Z" fill="#fc8452" fill-opacity="0.20" stroke="none"/>
<path d="M1542.0 1233.0 C1542.0 1233.0 1558.4 1226.1 1563.6 1226.1 C1580.0 1226.1 1574.4 1294.9 1585.2 1294.9 C1596.0 1294.9 1590.1 1226.1 1606.8 1226.1 C1611.7 1226.1 1617.5 1226.1 1628.3 1226.1 C1639.1 1226.1 1639.4 1226.1 1649.9 1226.1 C1661.0 1226.1 1660.4 1233.0 1671.5 1233.0 C1682.0 1233.0 1682.6 1233.0 1693.1 1233.0 C1704.1 1233.0 1708.7 1226.1 1714.7 1226.1 C1730.3 1226.1 1725.5 1281.1 1736.2 1281.1 C1747.0 1281.1 1742.2 1226.1 1757.8 1226.1 C1763.8 1226.1 1773.9 1226.1 1779.4 1233.0 C1795.5 1252.9 1790.2 1294.9 1801.0 1294.9 C1811.8 1294.9 1806.3 1233.0 1822.6 1233.0 C1827.9 1233.0 1838.8 1233.0 1844.2 1233.0 C1860.4 1233.0 1855.0 1294.9 1865.8 1294.9 C1876.5 1294.9 1871.1 1233.0 1887.3 1233.0 C1892.7 1233.0 1903.6 1233.0 1908.9 1233.0 C1925.2 1233.0 1919.7 1294.9 1930.5 1294.9 C1941.3 1294.9 1935.8 1233.0 1952.1 1233.0 C1957.4 1233.0 1963.1 1233.0 1973.7 1233.0 C1984.7 1233.0 1989.7 1226.1 1995.2 1226.1 C2011.3 1226.1 2005.5 1288.0 2016.8 1288.0 C2027.1 1288.0 2022.8 1250.9 2038.4 1233.0 C2044.4 1226.1 2054.5 1226.1 2060.0 1226.1 C2076.0 1226.1 2070.2 1288.0 2081.6 1288.0 C2091.8 1288.0 2087.4 1233.0 2103.2 1233.0 C2108.9 1233.0 2119.4 1233.0 2124.8 1233.0 C2141.0 1233.0 2135.5 1294.9 2146.3 1294.9 C2157.1 1294.9 2151.7 1233.0 2167.9 1233.0 C2173.3 1233.0 2178.7 1233.0 2189.5 1233.0 C2200.3 1233.0 2200.3 1233.0 2211.1 1233.0 C2221.9 1233.0 2221.9 1233.0 2232.7 1233.0 C2243.5 1233.0 2248.9 1233.0 2254.2 1233.0 C2270.5 1233.0 2265.0 1294.9 2275.8 1294.9 C2286.6 1294.9 2281.2 1233.0 2297.4 1233.0 C2302.8 1233.0 2308.5 1233.0 2319.0 1233.0 C2330.1 1233.0 2335.0 1226.1 2340.6 1226.1 C2356.6 1226.1 2350.8 1288.0 2362.2 1288.0 C2372.4 1288.0 2368.1 1250.9 2383.8 1233.0 C2389.7 1226.1 2394.5 1226.1 2405.3 1226.1 C2416.1 1226.1 2415.9 1233.0 2426.9 1233.0 C2437.4 1233.0 2437.7 1233.0 2448.5 1233.0 C2459.3 1233.0 2464.7 1233.0 2470.1 1233.0 C2486.3 1233.0 2480.9 1294.9 2491.7 1294.9 C2502.5 1294.9 2497.0 1233.0 2513.2 1233.0 C2518.6 1233.0 2529.5 1233.0 2534.8 1233.0 C2551.1 1233.0 2545.6 1294.9 2556.4 1294.9 C2567.2 1294.9 2561.8 1233.0 2578.0 1233.0 C2583.3 1233.0 2594.2 1233.0 2599.6 1233.0 C2615.8 1233.0 2610.4 1294.9 2621.2 1294.9 C2632.0 1294.9 2626.5 1233.0 2642.8 1233.0 C2648.1 1233.0 2653.8 1233.0 2664.3 1233.0 C2675.4 1233.0 2680.4 1226.1 2685.9 1226.1 C2702.0 1226.1 2696.1 1288.0 2707.5 1288.0 C2717.7 1288.0 2713.5 1250.9 2729.1 1233.0 C2735.1 1226.1 2745.1 1226.1 2750.7 1226.1 C2766.7 1226.1 2760.9 1288.0 2772.2 1288.0 C2782.5 1288.0 2778.0 1233.0 2793.8 1233.0 C2799.6 1233.0 2810.1 1233.0 2815.4 1233.0 C2831.7 1233.0 2837.0 1294.9 2837.0 1294.9 L2837.00 1693.70 L1542.00 1693.70 Z" fill="#9a60b4" fill-opacity="0.20" stroke="none"/>
<path d="M1542.0 1398.0 C1542.0 1398.0 1552.8 1398.0 1563.6 1398.0 C1574.4 1398.0 1574.4 1398.0 1585.2 1398.0 C1596.0 1398.0 1596.0 1398.0 1606.8 1398.0 C1617.5 1398.0 1617.5 1398.0 1628.3 1398.0 C1639.1 1398.0 1639.1 1398.0 1649.9 1398.0 C1660.7 1398.0 1660.7 1398.0 1671.5 1398.0 C1682.3 1398.0 1682.3 1398.0 1693.1 1398.0 C1703.9 1398.0 1703.9 1398.0 1714.7 1398.0 C1725.5 1398.0 1725.5 1398.0 1736.2 1398.0 C1747.0 1398.0 1747.0 1398.0 1757.8 1398.0 C1768.6 1398.0 1768.6 1398.0 1779.4 1398.0 C1790.2 1398.0 1790.2 1398.0 1801.0 1398.0 C1811.8 1398.0 1811.8 1398.0 1822.6 1398.0 C1833.4 1398.0 1833.4 1398.0 1844.2 1398.0 C1855.0 1398.0 1855.0 1398.0 1865.8 1398.0 C1876.5 1398.0 1876.5 1398.0 1887.3 1398.0 C1898.1 1398.0 1898.1 1398.0 1908.9 1398.0 C1919.7 1398.0 1919.7 1398.0 1930.5 1398.0 C1941.3 1398.0 1941.3 1398.0 1952.1 1398.0 C1962.9 1398.0 1962.9 1398.0 1973.7 1398.0 C1984.5 1398.0 1984.5 1398.0 1995.2 1398.0 C2006.0 1398.0 2006.0 1398.0 2016.8 1398.0 C2027.6 1398.0 2027.6 1398.0 2038.4 1398.0 C2049.2 1398.0 2049.2 1398.0 2060.0 1398.0 C2070.8 1398.0 2070.8 1398.0 2081.6 1398.0 C2092.4 1398.0 2092.4 1398.0 2103.2 1398.0 C2114.0 1398.0 2114.0 1398.0 2124.8 1398.0 C2135.5 1398.0 2135.5 1398.0 2146.3 1398.0 C2157.1 1398.0 2157.1 1398.0 2167.9 1398.0 C2178.7 1398.0 2178.7 1398.0 2189.5 1398.0 C2200.3 1398.0 2200.3 1398.0 2211.1 1398.0 C2221.9 1398.0 2221.9 1398.0 2232.7 1398.0 C2243.5 1398.0 2243.5 1398.0 2254.2 1398.0 C2265.0 1398.0 2265.0 1398.0 2275.8 1398.0 C2286.6 1398.0 2286.6 1398.0 2297.4 1398.0 C2308.2 1398.0 2308.2 1398.0 2319.0 1398.0 C2329.8 1398.0 2329.8 1398.0 2340.6 1398.0 C2351.4 1398.0 2351.4 1398.0 2362.2 1398.0 C2373.0 1398.0 2373.0 1398.0 2383.8 1398.0 C2394.5 1398.0 2394.5 1398.0 2405.3 1398.0 C2416.1 1398.0 2416.1 1398.0 2426.9 1398.0 C2437.7 1398.0 2437.7 1398.0 2448.5 1398.0 C2459.3 1398.0 2459.3 1398.0 2470.1 1398.0 C2480.9 1398.0 2480.9 1398.0 2491.7 1398.0 C2502.5 1398.0 2502.5 1398.0 2513.2 1398.0 C2524.0 1398.0 2524.0 1398.0 2534.8 1398.0 C2545.6 1398.0 2545.6 1398.0 2556.4 1398.0 C2567.2 1398.0 2567.2 1398.0 2578.0 1398.0 C2588.8 1398.0 2589.7 1398.0 2599.6 1398.0 C2611.3 1398.0 2610.4 1384.3 2621.2 1384.3 C2632.0 1384.3 2631.0 1398.0 2642.8 1398.0 C2652.6 1398.0 2653.5 1398.0 2664.3 1398.0 C2675.1 1398.0 2675.1 1398.0 2685.9 1398.0 C2696.7 1398.0 2697.6 1398.0 2707.5 1398.0 C2719.2 1398.0 2718.3 1384.3 2729.1 1384.3 C2739.9 1384.3 2739.0 1398.0 2750.7 1398.0 C2760.5 1398.0 2761.5 1398.0 2772.2 1398.0 C2783.0 1398.0 2783.0 1398.0 2793.8 1398.0 C2804.6 1398.0 2805.5 1398.0 2815.4 1398.0 C2827.1 1398.0 2837.0 1384.3 2837.0 1384.3" fill="none" stroke="#5470c6" stroke-width="2.2" stroke-linejoin="round"/>
<path d="M1542 1404.9H2837" stroke="#91cc75" stroke-width="2.2"/>
<path d="M1542 1349.9H2837" stroke="#fac858" stroke-width="2.2"/>
<path d="M1542.0 1343.0 C1542.0 1343.0 1558.2 1343.0 1563.6 1343.0 C1579.8 1343.0 1572.5 1281.1 1585.2 1281.1 C1594.1 1281.1 1592.2 1308.3 1606.8 1322.4 C1613.8 1329.3 1618.2 1324.4 1628.3 1329.3 C1639.8 1334.7 1638.2 1343.0 1649.9 1343.0 C1659.8 1343.0 1665.7 1343.0 1671.5 1343.0 C1687.3 1343.0 1680.3 1288.0 1693.1 1288.0 C1701.9 1288.0 1700.8 1310.1 1714.7 1322.4 C1722.4 1329.3 1726.1 1324.4 1736.2 1329.3 C1747.7 1334.7 1746.1 1343.0 1757.8 1343.0 C1767.7 1343.0 1773.1 1343.0 1779.4 1343.0 C1794.7 1343.0 1788.0 1294.9 1801.0 1294.9 C1809.6 1294.9 1811.8 1322.4 1822.6 1322.4 C1833.4 1322.4 1833.4 1294.9 1844.2 1294.9 C1855.0 1294.9 1852.7 1312.0 1865.8 1322.4 C1874.2 1329.2 1880.3 1329.3 1887.3 1329.3 C1901.9 1329.3 1897.4 1288.0 1908.9 1288.0 C1919.0 1288.0 1916.6 1310.1 1930.5 1322.4 C1938.2 1329.3 1941.9 1324.4 1952.1 1329.3 C1963.5 1334.7 1962.0 1343.0 1973.7 1343.0 C1983.5 1343.0 1990.6 1343.0 1995.2 1343.0 C2012.2 1343.0 2004.5 1267.4 2016.8 1267.4 C2026.1 1267.4 2022.8 1304.5 2038.4 1322.4 C2044.4 1329.3 2049.9 1324.4 2060.0 1329.3 C2071.4 1334.7 2069.9 1343.0 2081.6 1343.0 C2091.5 1343.0 2097.8 1343.0 2103.2 1343.0 C2119.4 1343.0 2112.1 1281.1 2124.8 1281.1 C2133.7 1281.1 2131.8 1308.3 2146.3 1322.4 C2153.4 1329.3 2156.9 1329.3 2167.9 1329.3 C2178.4 1329.3 2184.9 1329.3 2189.5 1329.3 C2206.4 1329.3 2194.1 1253.6 2211.1 1253.6 C2215.7 1253.6 2225.2 1253.6 2232.7 1253.6 C2246.8 1253.6 2240.2 1288.0 2254.2 1288.0 C2261.7 1288.0 2267.6 1288.0 2275.8 1288.0 C2289.2 1288.0 2289.4 1315.5 2297.4 1315.5 C2311.0 1315.5 2303.4 1260.5 2319.0 1260.5 C2325.0 1260.5 2332.9 1260.5 2340.6 1267.4 C2354.4 1279.7 2348.9 1287.0 2362.2 1301.8 C2370.5 1311.1 2373.8 1307.6 2383.8 1315.5 C2395.4 1324.8 2399.4 1336.1 2405.3 1336.1 C2421.0 1336.1 2410.0 1260.5 2426.9 1260.5 C2431.6 1260.5 2438.0 1260.5 2448.5 1260.5 C2459.6 1260.5 2463.6 1253.6 2470.1 1253.6 C2485.2 1253.6 2479.5 1301.8 2491.7 1301.8 C2501.1 1301.8 2503.9 1267.4 2513.2 1267.4 C2525.4 1267.4 2524.0 1315.5 2534.8 1315.5 C2545.6 1315.5 2545.0 1267.4 2556.4 1267.4 C2566.5 1267.4 2563.5 1294.5 2578.0 1308.6 C2585.1 1315.5 2590.3 1309.6 2599.6 1315.5 C2611.9 1323.3 2608.6 1336.1 2621.2 1336.1 C2630.2 1336.1 2638.6 1336.1 2642.8 1336.1 C2660.2 1336.1 2649.4 1246.8 2664.3 1246.8 C2670.9 1246.8 2672.7 1281.1 2685.9 1281.1 C2694.3 1281.1 2696.7 1267.4 2707.5 1267.4 C2718.3 1267.4 2719.1 1281.1 2729.1 1281.1 C2740.7 1281.1 2738.1 1260.5 2750.7 1260.5 C2759.7 1260.5 2764.0 1260.5 2772.2 1260.5 C2785.6 1260.5 2780.7 1288.0 2793.8 1288.0 C2802.3 1288.0 2806.9 1281.1 2815.4 1281.1 C2828.5 1281.1 2837.0 1308.6 2837.0 1308.6" fill="none" stroke="#ee6666" stroke-width="2.2" stroke-linejoin="round"/>
<path d="M1542.0 1363.7 C1542.0 1363.7 1552.8 1363.7 1563.6 1363.7 C1574.4 1363.7 1574.4 1363.7 1585.2 1363.7 C1596.0 1363.7 1596.0 1363.7 1606.8 1363.7 C1617.5 1363.7 1617.5 1363.7 1628.3 1363.7 C1639.1 1363.7 1639.1 1363.7 1649.9 1363.7 C1660.7 1363.7 1660.7 1363.7 1671.5 1363.7 C1682.3 1363.7 1682.3 1363.7 1693.1 1363.7 C1703.9 1363.7 1703.9 1363.7 1714.7 1363.7 C1725.5 1363.7 1725.5 1363.7 1736.2 1363.7 C1747.0 1363.7 1747.0 1363.7 1757.8 1363.7 C1768.6 1363.7 1768.6 1363.7 1779.4 1363.7 C1790.2 1363.7 1790.2 1363.7 1801.0 1363.7 C1811.8 1363.7 1811.8 1363.7 1822.6 1363.7 C1833.4 1363.7 1833.4 1363.7 1844.2 1363.7 C1855.0 1363.7 1855.0 1363.7 1865.8 1363.7 C1876.5 1363.7 1876.5 1363.7 1887.3 1363.7 C1898.1 1363.7 1898.1 1363.7 1908.9 1363.7 C1919.7 1363.7 1919.7 1363.7 1930.5 1363.7 C1941.3 1363.7 1941.3 1363.7 1952.1 1363.7 C1962.9 1363.7 1962.9 1363.7 1973.7 1363.7 C1984.5 1363.7 1984.5 1363.7 1995.2 1363.7 C2006.0 1363.7 2006.0 1363.7 2016.8 1363.7 C2027.6 1363.7 2027.6 1363.7 2038.4 1363.7 C2049.2 1363.7 2049.2 1363.7 2060.0 1363.7 C2070.8 1363.7 2070.8 1363.7 2081.6 1363.7 C2092.4 1363.7 2093.3 1363.7 2103.2 1363.7 C2114.9 1363.7 2114.0 1349.9 2124.8 1349.9 C2135.5 1349.9 2134.6 1363.7 2146.3 1363.7 C2156.2 1363.7 2157.1 1363.7 2167.9 1363.7 C2178.7 1363.7 2178.7 1363.7 2189.5 1363.7 C2200.3 1363.7 2200.3 1363.7 2211.1 1363.7 C2221.9 1363.7 2221.9 1363.7 2232.7 1363.7 C2243.5 1363.7 2243.5 1363.7 2254.2 1363.7 C2265.0 1363.7 2265.0 1363.7 2275.8 1363.7 C2286.6 1363.7 2286.6 1363.7 2297.4 1363.7 C2308.2 1363.7 2308.2 1363.7 2319.0 1363.7 C2329.8 1363.7 2329.8 1363.7 2340.6 1363.7 C2351.4 1363.7 2351.4 1363.7 2362.2 1363.7 C2373.0 1363.7 2373.0 1363.7 2383.8 1363.7 C2394.5 1363.7 2395.5 1363.7 2405.3 1363.7 C2417.0 1363.7 2416.1 1349.9 2426.9 1349.9 C2437.7 1349.9 2436.8 1363.7 2448.5 1363.7 C2458.4 1363.7 2459.3 1363.7 2470.1 1363.7 C2480.9 1363.7 2480.9 1363.7 2491.7 1363.7 C2502.5 1363.7 2502.5 1363.7 2513.2 1363.7 C2524.0 1363.7 2524.0 1363.7 2534.8 1363.7 C2545.6 1363.7 2545.6 1363.7 2556.4 1363.7 C2567.2 1363.7 2567.2 1363.7 2578.0 1363.7 C2588.8 1363.7 2588.8 1363.7 2599.6 1363.7 C2610.4 1363.7 2610.4 1363.7 2621.2 1363.7 C2632.0 1363.7 2632.0 1363.7 2642.8 1363.7 C2653.5 1363.7 2653.5 1363.7 2664.3 1363.7 C2675.1 1363.7 2675.1 1363.7 2685.9 1363.7 C2696.7 1363.7 2696.7 1363.7 2707.5 1363.7 C2718.3 1363.7 2718.3 1363.7 2729.1 1363.7 C2739.9 1363.7 2739.9 1363.7 2750.7 1363.7 C2761.5 1363.7 2761.5 1363.7 2772.2 1363.7 C2783.0 1363.7 2783.0 1363.7 2793.8 1363.7 C2804.6 1363.7 2805.5 1363.7 2815.4 1363.7 C2827.1 1363.7 2837.0 1349.9 2837.0 1349.9" fill="none" stroke="#73c0de" stroke-width="2.2" stroke-linejoin="round"/>
<path d="M1542.0 1301.8 C1542.0 1301.8 1552.8 1301.8 1563.6 1301.8 C1574.4 1301.8 1579.8 1301.8 1585.2 1301.8 C1601.4 1301.8 1596.0 1363.7 1606.8 1363.7 C1617.5 1363.7 1612.1 1301.8 1628.3 1301.8 C1633.7 1301.8 1644.6 1301.8 1649.9 1301.8 C1666.2 1301.8 1660.7 1363.7 1671.5 1363.7 C1682.3 1363.7 1676.8 1301.8 1693.1 1301.8 C1698.4 1301.8 1704.1 1301.8 1714.7 1301.8 C1725.7 1301.8 1725.5 1294.9 1736.2 1294.9 C1747.0 1294.9 1746.8 1301.8 1757.8 1301.8 C1768.4 1301.8 1768.9 1301.8 1779.4 1301.8 C1790.5 1301.8 1795.5 1294.9 1801.0 1294.9 C1817.0 1294.9 1811.2 1356.8 1822.6 1356.8 C1832.8 1356.8 1828.4 1301.8 1844.2 1301.8 C1849.9 1301.8 1860.4 1301.8 1865.8 1301.8 C1882.0 1301.8 1876.5 1363.7 1887.3 1363.7 C1898.1 1363.7 1892.7 1301.8 1908.9 1301.8 C1914.3 1301.8 1925.2 1301.8 1930.5 1301.8 C1946.7 1301.8 1941.3 1363.7 1952.1 1363.7 C1962.9 1363.7 1957.4 1301.8 1973.7 1301.8 C1979.0 1301.8 1989.9 1301.8 1995.2 1301.8 C2011.5 1301.8 2006.0 1363.7 2016.8 1363.7 C2027.6 1363.7 2022.2 1301.8 2038.4 1301.8 C2043.8 1301.8 2049.2 1301.8 2060.0 1301.8 C2070.8 1301.8 2075.8 1301.8 2081.6 1301.8 C2097.4 1301.8 2092.4 1356.8 2103.2 1356.8 C2114.0 1356.8 2109.1 1319.7 2124.8 1301.8 C2130.7 1294.9 2140.8 1294.9 2146.3 1294.9 C2162.4 1294.9 2156.6 1356.8 2167.9 1356.8 C2178.1 1356.8 2173.7 1301.8 2189.5 1301.8 C2195.3 1301.8 2205.7 1301.8 2211.1 1301.8 C2227.3 1301.8 2221.9 1363.7 2232.7 1363.7 C2243.5 1363.7 2238.0 1301.8 2254.2 1301.8 C2259.6 1301.8 2265.0 1301.8 2275.8 1301.8 C2286.6 1301.8 2286.6 1301.8 2297.4 1301.8 C2308.2 1301.8 2308.2 1301.8 2319.0 1301.8 C2329.8 1301.8 2335.2 1301.8 2340.6 1301.8 C2356.8 1301.8 2351.4 1363.7 2362.2 1363.7 C2373.0 1363.7 2367.5 1301.8 2383.8 1301.8 C2389.1 1301.8 2394.8 1301.8 2405.3 1301.8 C2416.4 1301.8 2421.4 1294.9 2426.9 1294.9 C2443.0 1294.9 2437.1 1356.8 2448.5 1356.8 C2458.7 1356.8 2454.5 1319.7 2470.1 1301.8 C2476.1 1294.9 2480.9 1294.9 2491.7 1294.9 C2502.5 1294.9 2502.2 1301.8 2513.2 1301.8 C2523.8 1301.8 2524.0 1301.8 2534.8 1301.8 C2545.6 1301.8 2551.1 1301.8 2556.4 1301.8 C2572.7 1301.8 2567.2 1363.7 2578.0 1363.7 C2588.8 1363.7 2583.3 1301.8 2599.6 1301.8 C2604.9 1301.8 2615.8 1301.8 2621.2 1301.8 C2637.4 1301.8 2632.0 1363.7 2642.8 1363.7 C2653.5 1363.7 2648.1 1301.8 2664.3 1301.8 C2669.7 1301.8 2680.6 1301.8 2685.9 1301.8 C2702.2 1301.8 2696.7 1363.7 2707.5 1363.7 C2718.3 1363.7 2712.8 1301.8 2729.1 1301.8 C2734.4 1301.8 2740.1 1301.8 2750.7 1301.8 C2761.7 1301.8 2766.7 1294.9 2772.2 1294.9 C2788.3 1294.9 2782.5 1356.8 2793.8 1356.8 C2804.1 1356.8 2799.6 1301.8 2815.4 1301.8 C2821.2 1301.8 2837.0 1301.8 2837.0 1301.8" fill="none" stroke="#3ba272" stroke-width="2.2" stroke-linejoin="round"/>
<path d="M1542.0 1171.1 C1542.0 1171.1 1548.3 1208.3 1563.6 1239.9 C1569.9 1253.0 1572.6 1260.5 1585.2 1260.5 C1594.2 1260.5 1597.7 1260.5 1606.8 1260.5 C1619.3 1260.5 1616.7 1281.1 1628.3 1281.1 C1638.3 1281.1 1638.5 1272.9 1649.9 1267.4 C1660.1 1262.5 1662.2 1260.5 1671.5 1260.5 C1683.8 1260.5 1681.5 1281.1 1693.1 1281.1 C1703.0 1281.1 1704.7 1275.3 1714.7 1267.4 C1726.3 1258.1 1727.1 1246.8 1736.2 1246.8 C1748.7 1246.8 1744.6 1281.1 1757.8 1281.1 C1766.2 1281.1 1768.0 1272.9 1779.4 1267.4 C1789.6 1262.5 1789.9 1260.5 1801.0 1260.5 C1811.5 1260.5 1811.8 1260.5 1822.6 1260.5 C1833.4 1260.5 1833.6 1260.5 1844.2 1260.5 C1855.2 1260.5 1854.7 1267.4 1865.8 1267.4 C1876.3 1267.4 1876.8 1267.4 1887.3 1267.4 C1898.4 1267.4 1899.6 1274.3 1908.9 1274.3 C1921.2 1274.3 1918.0 1253.6 1930.5 1253.6 C1939.6 1253.6 1943.0 1253.6 1952.1 1253.6 C1964.6 1253.6 1961.4 1274.3 1973.7 1274.3 C1983.0 1274.3 1984.5 1270.8 1995.2 1267.4 C2006.0 1263.9 2007.5 1260.5 2016.8 1260.5 C2029.1 1260.5 2026.8 1281.1 2038.4 1281.1 C2048.4 1281.1 2050.0 1275.3 2060.0 1267.4 C2071.6 1258.1 2072.4 1246.8 2081.6 1246.8 C2094.0 1246.8 2089.9 1281.1 2103.2 1281.1 C2111.5 1281.1 2113.0 1267.4 2124.8 1267.4 C2134.6 1267.4 2135.5 1267.4 2146.3 1267.4 C2157.1 1267.4 2157.4 1267.4 2167.9 1267.4 C2179.0 1267.4 2178.7 1274.3 2189.5 1274.3 C2200.3 1274.3 2200.3 1270.8 2211.1 1267.4 C2221.9 1263.9 2222.5 1260.5 2232.7 1260.5 C2244.1 1260.5 2242.8 1274.3 2254.2 1274.3 C2264.4 1274.3 2266.5 1273.3 2275.8 1267.4 C2288.1 1259.6 2287.5 1246.8 2297.4 1246.8 C2309.1 1246.8 2305.9 1274.3 2319.0 1274.3 C2327.5 1274.3 2329.8 1270.8 2340.6 1267.4 C2351.4 1263.9 2352.9 1260.5 2362.2 1260.5 C2374.4 1260.5 2373.0 1281.1 2383.8 1281.1 C2394.5 1281.1 2392.8 1260.5 2405.3 1260.5 C2414.4 1260.5 2417.9 1260.5 2426.9 1260.5 C2439.4 1260.5 2437.7 1281.1 2448.5 1281.1 C2459.3 1281.1 2457.8 1260.5 2470.1 1260.5 C2479.4 1260.5 2481.5 1267.4 2491.7 1267.4 C2503.1 1267.4 2503.3 1253.6 2513.2 1253.6 C2524.9 1253.6 2522.6 1274.3 2534.8 1274.3 C2544.1 1274.3 2545.4 1267.4 2556.4 1267.4 C2566.9 1267.4 2567.5 1267.4 2578.0 1267.4 C2589.1 1267.4 2588.8 1274.3 2599.6 1274.3 C2610.4 1274.3 2610.4 1270.8 2621.2 1267.4 C2632.0 1264.0 2633.4 1260.5 2642.8 1260.5 C2655.0 1260.5 2652.7 1281.1 2664.3 1281.1 C2674.3 1281.1 2674.5 1272.9 2685.9 1267.4 C2696.1 1262.5 2698.2 1260.5 2707.5 1260.5 C2719.8 1260.5 2717.5 1281.1 2729.1 1281.1 C2739.0 1281.1 2741.5 1276.1 2750.7 1267.4 C2763.1 1255.5 2765.6 1239.9 2772.2 1239.9 C2787.2 1239.9 2780.9 1315.5 2793.8 1315.5 C2802.5 1315.5 2800.1 1267.4 2815.4 1267.4 C2821.7 1267.4 2837.0 1267.4 2837.0 1267.4" fill="none" stroke="#fc8452" stroke-width="2.2" stroke-linejoin="round"/>
<path d="M1542.0 1233.0 C1542.0 1233.0 1558.4 1226.1 1563.6 1226.1 C1580.0 1226.1 1574.4 1294.9 1585.2 1294.9 C1596.0 1294.9 1590.1 1226.1 1606.8 1226.1 C1611.7 1226.1 1617.5 1226.1 1628.3 1226.1 C1639.1 1226.1 1639.4 1226.1 1649.9 1226.1 C1661.0 1226.1 1660.4 1233.0 1671.5 1233.0 C1682.0 1233.0 1682.6 1233.0 1693.1 1233.0 C1704.1 1233.0 1708.7 1226.1 1714.7 1226.1 C1730.3 1226.1 1725.5 1281.1 1736.2 1281.1 C1747.0 1281.1 1742.2 1226.1 1757.8 1226.1 C1763.8 1226.1 1773.9 1226.1 1779.4 1233.0 C1795.5 1252.9 1790.2 1294.9 1801.0 1294.9 C1811.8 1294.9 1806.3 1233.0 1822.6 1233.0 C1827.9 1233.0 1838.8 1233.0 1844.2 1233.0 C1860.4 1233.0 1855.0 1294.9 1865.8 1294.9 C1876.5 1294.9 1871.1 1233.0 1887.3 1233.0 C1892.7 1233.0 1903.6 1233.0 1908.9 1233.0 C1925.2 1233.0 1919.7 1294.9 1930.5 1294.9 C1941.3 1294.9 1935.8 1233.0 1952.1 1233.0 C1957.4 1233.0 1963.1 1233.0 1973.7 1233.0 C1984.7 1233.0 1989.7 1226.1 1995.2 1226.1 C2011.3 1226.1 2005.5 1288.0 2016.8 1288.0 C2027.1 1288.0 2022.8 1250.9 2038.4 1233.0 C2044.4 1226.1 2054.5 1226.1 2060.0 1226.1 C2076.0 1226.1 2070.2 1288.0 2081.6 1288.0 C2091.8 1288.0 2087.4 1233.0 2103.2 1233.0 C2108.9 1233.0 2119.4 1233.0 2124.8 1233.0 C2141.0 1233.0 2135.5 1294.9 2146.3 1294.9 C2157.1 1294.9 2151.7 1233.0 2167.9 1233.0 C2173.3 1233.0 2178.7 1233.0 2189.5 1233.0 C2200.3 1233.0 2200.3 1233.0 2211.1 1233.0 C2221.9 1233.0 2221.9 1233.0 2232.7 1233.0 C2243.5 1233.0 2248.9 1233.0 2254.2 1233.0 C2270.5 1233.0 2265.0 1294.9 2275.8 1294.9 C2286.6 1294.9 2281.2 1233.0 2297.4 1233.0 C2302.8 1233.0 2308.5 1233.0 2319.0 1233.0 C2330.1 1233.0 2335.0 1226.1 2340.6 1226.1 C2356.6 1226.1 2350.8 1288.0 2362.2 1288.0 C2372.4 1288.0 2368.1 1250.9 2383.8 1233.0 C2389.7 1226.1 2394.5 1226.1 2405.3 1226.1 C2416.1 1226.1 2415.9 1233.0 2426.9 1233.0 C2437.4 1233.0 2437.7 1233.0 2448.5 1233.0 C2459.3 1233.0 2464.7 1233.0 2470.1 1233.0 C2486.3 1233.0 2480.9 1294.9 2491.7 1294.9 C2502.5 1294.9 2497.0 1233.0 2513.2 1233.0 C2518.6 1233.0 2529.5 1233.0 2534.8 1233.0 C2551.1 1233.0 2545.6 1294.9 2556.4 1294.9 C2567.2 1294.9 2561.8 1233.0 2578.0 1233.0 C2583.3 1233.0 2594.2 1233.0 2599.6 1233.0 C2615.8 1233.0 2610.4 1294.9 2621.2 1294.9 C2632.0 1294.9 2626.5 1233.0 2642.8 1233.0 C2648.1 1233.0 2653.8 1233.0 2664.3 1233.0 C2675.4 1233.0 2680.4 1226.1 2685.9 1226.1 C2702.0 1226.1 2696.1 1288.0 2707.5 1288.0 C2717.7 1288.0 2713.5 1250.9 2729.1 1233.0 C2735.1 1226.1 2745.1 1226.1 2750.7 1226.1 C2766.7 1226.1 2760.9 1288.0 2772.2 1288.0 C2782.5 1288.0 2778.0 1233.0 2793.8 1233.0 C2799.6 1233.0 2810.1 1233.0 2815.4 1233.0 C2831.7 1233.0 2837.0 1294.9 2837.0 1294.9" fill="none" stroke="#9a60b4" stroke-width="2.2" stroke-linejoin="round"/></g>
</svg>
<div class="yl" style="right:2789px;top:298.0px">0.35</div>
<div class="yl" style="right:2789px;top:376.6px">0.3</div>
<div class="yl" style="right:2789px;top:455.1px">0.25</div>
<div class="yl" style="right:2789px;top:533.7px">0.2</div>
<div class="yl" style="right:2789px;top:612.3px">0.15</div>
<div class="yl" style="right:2789px;top:690.9px">0.1</div>
<div class="yl" style="right:2789px;top:769.4px">0.05</div>
<div class="yl" style="right:2789px;top:848.0px">0</div>
<div class="xl" style="left:130.7px;top:875.0px">09:55</div>
<div class="xl" style="left:236.9px;top:875.0px">10:00</div>
<div class="xl" style="left:343.1px;top:875.0px">10:05</div>
<div class="xl" style="left:449.3px;top:875.0px">10:10</div>
<div class="xl" style="left:555.5px;top:875.0px">10:15</div>
<div class="xl" style="left:661.7px;top:875.0px">10:20</div>
<div class="xl" style="left:767.9px;top:875.0px">10:25</div>
<div class="xl" style="left:874.1px;top:875.0px">10:30</div>
<div class="xl" style="left:980.3px;top:875.0px">10:35</div>
<div class="xl" style="left:1086.5px;top:875.0px">10:40</div>
<div class="xl" style="left:1192.7px;top:875.0px">10:45</div>
<div class="xl" style="left:1298.9px;top:875.0px">10:50</div>
<div class="yl" style="right:1289px;top:298.0px">171.66 MB</div>
<div class="yl" style="right:1289px;top:389.7px">143.05 MB</div>
<div class="yl" style="right:1289px;top:481.3px">114.44 MB</div>
<div class="yl" style="right:1289px;top:573.0px">85.83 MB</div>
<div class="yl" style="right:1289px;top:664.7px">57.22 MB</div>
<div class="yl" style="right:1289px;top:756.3px">28.61 MB</div>
<div class="yl" style="right:1289px;top:848.0px">0.00 B</div>
<div class="xl" style="left:1620.0px;top:875.0px">09:55</div>
<div class="xl" style="left:1721.0px;top:875.0px">10:00</div>
<div class="xl" style="left:1822.0px;top:875.0px">10:05</div>
<div class="xl" style="left:1923.0px;top:875.0px">10:10</div>
<div class="xl" style="left:2024.0px;top:875.0px">10:15</div>
<div class="xl" style="left:2125.0px;top:875.0px">10:20</div>
<div class="xl" style="left:2226.0px;top:875.0px">10:25</div>
<div class="xl" style="left:2327.0px;top:875.0px">10:30</div>
<div class="xl" style="left:2428.0px;top:875.0px">10:35</div>
<div class="xl" style="left:2529.0px;top:875.0px">10:40</div>
<div class="xl" style="left:2630.0px;top:875.0px">10:45</div>
<div class="xl" style="left:2731.0px;top:875.0px">10:50</div>
<div class="yl" style="right:2810px;top:1129.6px">60</div>
<div class="yl" style="right:2810px;top:1221.3px">50</div>
<div class="yl" style="right:2810px;top:1313.0px">40</div>
<div class="yl" style="right:2810px;top:1404.7px">30</div>
<div class="yl" style="right:2810px;top:1496.4px">20</div>
<div class="yl" style="right:2810px;top:1588.1px">10</div>
<div class="yl" style="right:1379px;top:1129.6px">80</div>
<div class="yl" style="right:1379px;top:1267.1px">60</div>
<div class="yl" style="right:1379px;top:1404.6px">40</div>
<div class="yl" style="right:1379px;top:1542.1px">20</div>
</div>
<div class="abs" style="left:2784px;top:1494px;width:96px;height:96px;border-radius:50%;background:#1660ee;box-shadow:0 4px 14px rgba(0,0,0,0.18)"></div>
<svg class="ic" style="left:2808px;top:1516px" width="48" height="52"><rect x="4.2" y="5.9" width="39.5" height="33.8" rx="9" fill="#fff"/><path d="M22.5 37 L39 37 L34.5 45.2 Q33.2 47.2 31.2 45.6 Z" fill="#fff"/><circle cx="17.9" cy="16.9" r="2.9" fill="#1660ee"/><circle cx="30" cy="16.9" r="2.9" fill="#1660ee"/><path d="M14.4 26.2 Q24.2 34.6 34 26.2" fill="none" stroke="#1660ee" stroke-width="3.4" stroke-linecap="round"/></svg>
</body></html>
